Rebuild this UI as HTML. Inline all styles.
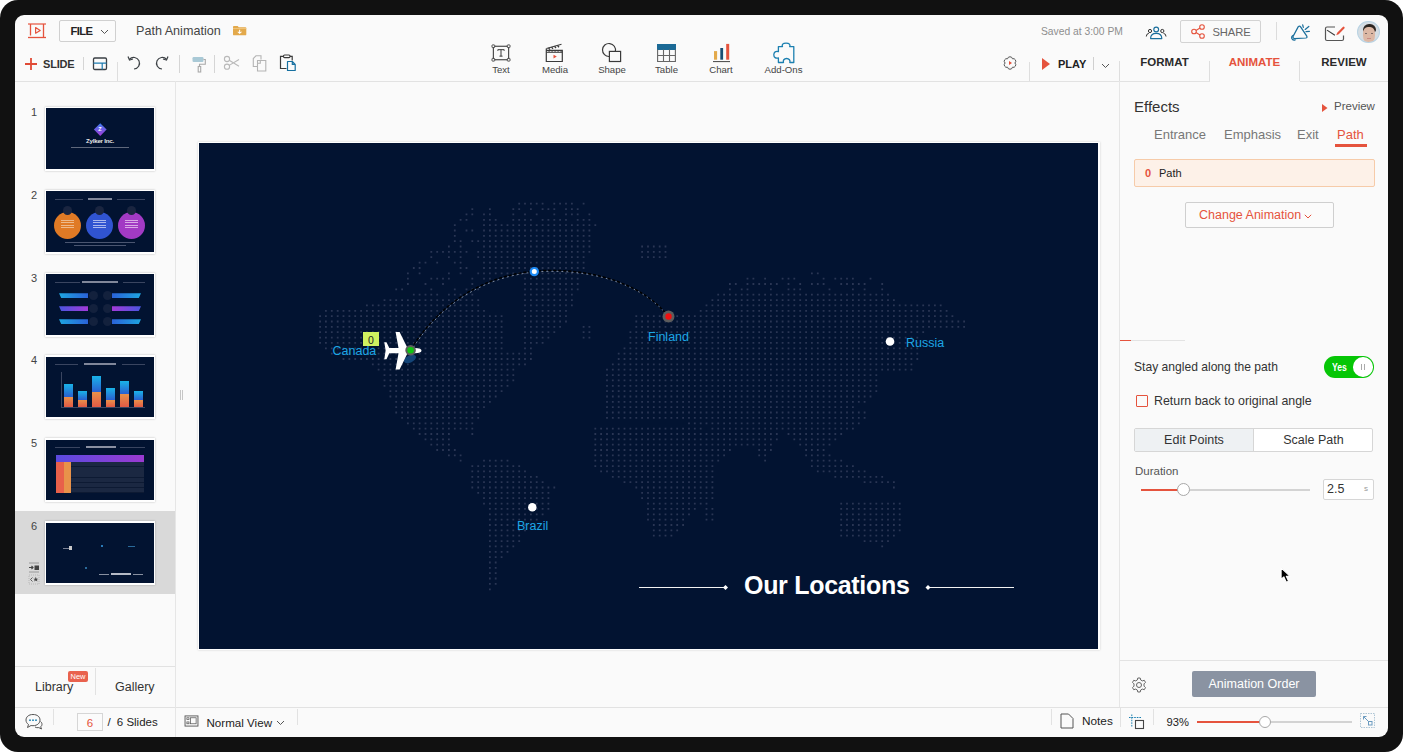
<!DOCTYPE html>
<html><head><meta charset="utf-8">
<style>
*{box-sizing:border-box;margin:0;padding:0}
html,body{width:1403px;height:752px;overflow:hidden;background:#fff;font-family:"Liberation Sans",sans-serif;color:#333}
#frame{position:absolute;left:0;top:0;width:1403px;height:752px;background:#111;border-radius:18px}
#app{position:absolute;left:15px;top:15px;width:1373px;height:722px;background:#fafafa;border-radius:9px;overflow:hidden}
.a{position:absolute}
.t{position:absolute;white-space:nowrap;line-height:1}
.vl{position:absolute;width:1px;background:#dcdcdc}
.hl{position:absolute;height:1px;background:#e2e2e2}
svg{position:absolute;overflow:visible}
</style></head><body>
<div id="frame"></div>
<div id="app"></div>
<!-- all children positioned in page coords -->
<div id="ui" class="a" style="left:0;top:0;width:1403px;height:752px">


<!-- ===== HEADER ROW 1 ===== -->
<svg style="left:27px;top:23px" width="20" height="16" viewBox="0 0 20 16">
 <g stroke="#e5533d" stroke-width="1.3" fill="none">
 <line x1="1" y1="1" x2="19" y2="1" stroke-width="1.6" opacity=".75"/>
 <line x1="1" y1="14.5" x2="19" y2="14.5"/>
 <line x1="3.5" y1="1" x2="3.5" y2="12.5"/>
 <line x1="16.5" y1="1" x2="16.5" y2="14"/>
 <path d="M8.6 4.6 L13.2 7.4 L8.6 10.2 Z" stroke-linejoin="round" stroke-width="1.2"/>
 </g></svg>
<div class="a" style="left:59px;top:20px;width:57px;height:22px;border:1px solid #d0d0d0;border-radius:2px;background:#fbfbfb"></div>
<div class="t" style="left:70.5px;top:26px;font-size:11.2px;font-weight:bold;color:#222;letter-spacing:-.6px">FILE</div>
<svg style="left:99.5px;top:28.5px" width="9" height="6" viewBox="0 0 9 6"><path d="M1 1 L4.5 4.5 L8 1" stroke="#555" stroke-width="1" fill="none"/></svg>
<div class="t" style="left:136px;top:24.5px;font-size:12.6px;color:#444">Path Animation</div>
<svg style="left:233.3px;top:26.3px" width="13.3" height="9.3" viewBox="0 0 14 11" preserveAspectRatio="none">
 <path d="M0 1 Q0 0 1 0 L5 0 L6 1.5 L13 1.5 Q14 1.5 14 2.5 L14 10 Q14 11 13 11 L1 11 Q0 11 0 10 Z" fill="#e3a94b"/>
 <path d="M0 3 L14 3" stroke="#f6d08e" stroke-width=".8"/>
 <path d="M7 4.5 L7 8.5 M5 6.8 L7 8.8 L9 6.8" stroke="#fff" stroke-width="1.1" fill="none"/>
</svg>

<!-- ===== HEADER ROW 2 LEFT ===== -->
<svg style="left:24px;top:57px" width="14" height="14" viewBox="0 0 14 14"><path d="M7 1 V13 M1 7 H13" stroke="#e04b36" stroke-width="1.8"/></svg>
<div class="t" style="left:43px;top:59px;font-size:11px;font-weight:bold;color:#333;letter-spacing:-0.2px">SLIDE</div>
<div class="vl" style="left:83px;top:57px;height:13px;background:#d5d5d5"></div>
<svg style="left:92px;top:57px" width="16" height="14" viewBox="0 0 16 14">
 <rect x="1.5" y="1" width="13" height="11.5" rx="1.3" stroke="#3a3f44" stroke-width="1.3" fill="none"/>
 <path d="M1.5 6.2 H14.5 M10.2 6.2 V12.5" stroke="#1d7bb0" stroke-width="1.2"/>
</svg>
<div class="vl" style="left:117px;top:62px;height:19px;background:#dedede"></div>
<svg style="left:125px;top:55px" width="18" height="16" viewBox="0 0 18 16">
 <path d="M4.5 4.2 A5.8 5.8 0 1 1 9 14" stroke="#3d4246" stroke-width="1.2" fill="none"/>
 <path d="M3 1.5 L4.5 5 L8 4" stroke="#3d4246" stroke-width="1.2" fill="none"/>
</svg>
<svg style="left:153px;top:55px" width="18" height="16" viewBox="0 0 18 16">
 <path d="M13.5 4.2 A5.8 5.8 0 1 0 9 14" stroke="#3d4246" stroke-width="1.2" fill="none"/>
 <path d="M15 1.5 L13.5 5 L10 4" stroke="#3d4246" stroke-width="1.2" fill="none"/>
</svg>
<div class="vl" style="left:179px;top:55px;height:18px;background:#d5d5d5"></div>
<svg style="left:191px;top:56px" width="16" height="17" viewBox="0 0 16 17">
 <rect x="1.5" y="1" width="11" height="5" rx="1.2" fill="#a9c9d6"/>
 <path d="M12.5 3.5 H14.3 V8.3 H8.5 V10.5" stroke="#a9a9a9" stroke-width="1.1" fill="none"/>
 <rect x="7.2" y="10.5" width="2.5" height="5.5" stroke="#a9a9a9" stroke-width="1.1" fill="none"/>
</svg>
<div class="vl" style="left:214px;top:55px;height:18px;background:#d5d5d5"></div>
<svg style="left:223px;top:55px" width="17" height="16" viewBox="0 0 17 16">
 <g stroke="#b9b9b9" stroke-width="1.1" fill="none">
 <circle cx="4" cy="4" r="2.6"/><circle cx="4" cy="11.7" r="2.6"/>
 <path d="M6.2 5.3 L16 11.2 M6.2 10.4 L16 4.5"/></g>
</svg>
<svg style="left:252px;top:55px" width="17" height="17" viewBox="0 0 17 17">
 <g stroke="#b4b4b4" stroke-width="1.1" fill="none">
 <path d="M9 4.5 V0.8 H4 L1.3 3.5 V11.5 H5"/>
 <path d="M5.5 5.5 H13.8 V16 H5.5 V8.3 Z M5.5 8.3 H8.3 V5.5"/></g>
</svg>
<svg style="left:279px;top:54px" width="18" height="18" viewBox="0 0 18 18">
 <path d="M4.5 2.3 H1.5 V14.5 H7.5 M11 2.3 H13.2 V6.5" stroke="#3a3a3a" stroke-width="1.2" fill="none"/>
 <rect x="4.5" y="1" width="6.5" height="2.6" rx="1" stroke="#3a3a3a" stroke-width="1.1" fill="none"/>
 <path d="M8.5 7.5 H13.3 L16.2 10.4 V16.5 H8.5 Z M13.3 7.5 V10.4 H16.2" stroke="#1670a0" stroke-width="1.2" fill="none" stroke-linejoin="round"/>
</svg>

<!-- ===== CENTER TOOLBAR ===== -->
<svg style="left:490.5px;top:43.5px" width="20" height="18" viewBox="0 0 22 20">
 <rect x="2.5" y="2.5" width="17" height="15" stroke="#3a3a3a" stroke-width="1.2" fill="none"/>
 <g fill="#fafafa" stroke="#3a3a3a" stroke-width="1"><rect x="1" y="1" width="3" height="3" rx=".6"/><rect x="18" y="1" width="3" height="3" rx=".6"/><rect x="1" y="16" width="3" height="3" rx=".6"/><rect x="18" y="16" width="3" height="3" rx=".6"/></g>
 <path d="M7.5 6.3 H14.5 M7.5 6.3 V7.6 M14.5 6.3 V7.6 M11 6.3 V13.5 M9.3 13.5 H12.7" stroke="#3a3a3a" stroke-width="1.1" fill="none"/>
</svg>
<div class="t" style="left:480px;top:64.8px;font-size:9.6px;color:#444;width:42px;text-align:center">Text</div>
<svg style="left:545px;top:43px" width="20" height="20" viewBox="0 0 20 20">
 <path d="M1.3 7.3 H17.3 V18.5 H1.3 Z M1.3 7.3 V5.5" stroke="#3a3a3a" stroke-width="1.2" fill="none"/>
 <path d="M1.5 5.5 L16.5 1.3" stroke="#3a3a3a" stroke-width="1.1"/>
 <path d="M3.5 4.9 L5 6.6 M6.5 4.1 L8 5.8 M9.5 3.3 L11 5 M12.5 2.5 L14 4.2" stroke="#3a3a3a" stroke-width="1.3"/>
 <path d="M3 7.3 L4.5 9 M6 7.3 L7.5 9 M9 7.3 L10.5 9 M12 7.3 L13.5 9 M15 7.3 L16.5 9" stroke="#3a3a3a" stroke-width=".9"/>
 <path d="M1.3 9.3 H17.3" stroke="#3a3a3a" stroke-width="1"/>
 <path d="M8.5 11.8 L11.8 13.6 L8.5 15.4 Z" fill="#e5533d"/>
</svg>
<div class="t" style="left:535px;top:64.8px;font-size:9.6px;color:#444;width:40px;text-align:center">Media</div>
<svg style="left:600px;top:42px" width="22" height="21" viewBox="0 0 22 21">
 <path d="M15.35 9.4 A6.5 6.5 0 1 0 9.4 14.5" stroke="#3a3a3a" stroke-width="1.2" fill="none"/>
 <rect x="9.4" y="9.4" width="11.2" height="10.1" stroke="#3a3a3a" stroke-width="1.2" fill="none"/>
</svg>
<div class="t" style="left:592px;top:64.8px;font-size:9.6px;color:#444;width:40px;text-align:center">Shape</div>
<svg style="left:656px;top:43px" width="21" height="20" viewBox="0 0 21 20">
 <rect x="1" y="1" width="19" height="6" fill="#1b6a96"/>
 <path d="M1.6 6.5 V18.5 H19.4 V6.5 M1.6 12.5 H19.4 M7.5 6.5 V18.5 M13.5 6.5 V18.5" stroke="#666" stroke-width="1.1" fill="none"/>
</svg>
<div class="t" style="left:646.5px;top:64.8px;font-size:9.6px;color:#444;width:40px;text-align:center">Table</div>
<svg style="left:710px;top:42px" width="22" height="21" viewBox="0 0 22 21">
 <rect x="4" y="9.1" width="3.1" height="8.6" fill="#e3a94b"/>
 <rect x="10.3" y="6" width="2.8" height="11.7" fill="#1b4e73"/>
 <rect x="16.2" y="1.9" width="3" height="15.8" fill="#e5533d"/>
 <path d="M3 19.6 H20" stroke="#444" stroke-width="1"/>
</svg>
<div class="t" style="left:701px;top:64.8px;font-size:9.6px;color:#444;width:40px;text-align:center">Chart</div>
<svg style="left:772px;top:42px" width="23" height="22" viewBox="0 0 23 22">
 <path d="M6.4 4.6 H10.5 C9.5 2.8 10.8 1.1 14.1 1.1 C17.4 1.1 18.6 2.8 17.7 4.6 H21.8 V20.5 H17.8 C18.5 18.5 17.2 16.5 14.6 16.5 C12 16.5 10.8 18.5 11.5 20.5 H6.4 V15.9 C3.8 16.7 1.8 15.5 1.8 12.8 C1.8 10 3.8 8.9 6.4 9.7 Z" stroke="#1b7fb0" stroke-width="1.3" fill="none" stroke-linejoin="round"/>
</svg>
<div class="t" style="left:758.5px;top:64.8px;font-size:9.6px;color:#444;width:50px;text-align:center">Add-Ons</div>

<!-- ===== HEADER RIGHT ===== -->
<div class="t" style="left:1041px;top:26.5px;font-size:10.3px;color:#8e8e8e">Saved at 3:00 PM</div>
<svg style="left:1145px;top:25px" width="22" height="15" viewBox="0 0 22 15">
 <g stroke="#1b6f9c" stroke-width="1.15" fill="none">
 <circle cx="11.2" cy="4.5" r="2.4"/><path d="M5.6 13.6 Q5.6 8.4 11.2 8.4 Q16.8 8.4 16.8 13.6 Z" stroke-linejoin="round"/></g>
 <g stroke="#333" stroke-width="1" fill="none">
 <circle cx="5" cy="6" r="1.6"/><path d="M1.3 11.5 Q1.3 8.7 3.8 8.4"/>
 <circle cx="17.3" cy="6" r="1.6"/><path d="M21 11.5 Q21 8.7 18.5 8.4"/></g>
</svg>
<div class="a" style="left:1180px;top:20px;width:81px;height:23px;border:1px solid #d3d3d3;border-radius:2px"></div>
<svg style="left:1191px;top:24px" width="14" height="15" viewBox="0 0 14 15">
 <g stroke="#e5533d" stroke-width="1.1" fill="none"><circle cx="3" cy="7.5" r="2.3"/><circle cx="11" cy="3" r="2.3"/><circle cx="11" cy="12" r="2.3"/><path d="M5 6.4 L9 4.1 M5 8.6 L9 10.9"/></g>
</svg>
<div class="t" style="left:1212.5px;top:26.5px;font-size:11.2px;color:#666;letter-spacing:-0.1px">SHARE</div>
<div class="vl" style="left:1276px;top:22px;height:18px;background:#dcdcdc"></div>
<svg style="left:1290px;top:23px" width="21" height="19" viewBox="0 0 21 19">
 <g stroke="#1b6f9c" stroke-width="1.25" fill="none" stroke-linecap="round" stroke-linejoin="round">
 <path d="M8.3 3.6 Q9.6 2.4 10.6 3.8 L16.8 13.2 Q17.5 14.8 15.8 15 L4.5 15.6 Q2.6 15.4 3 13.5 Z"/>
 <path d="M3.3 12.3 Q1.2 13.2 1.8 15.5 Q2.8 17.6 5.2 16.8"/>
 <path d="M12.7 1.8 L13.3 4.3 M15.2 6.4 L18.8 3.5 M16 8.6 L19.4 8.3"/></g>
</svg>
<svg style="left:1323px;top:23.8px" width="23" height="18" viewBox="0 0 23 18">
 <path d="M12 3 H4 Q2.5 3 2.5 4.5 V15 Q2.5 16.5 4 16.5 H19 Q20.5 16.5 20.5 15 V11.5" stroke="#555" stroke-width="1.2" fill="none"/>
 <path d="M4 6.1 L11.9 11.2" stroke="#3a3a3a" stroke-width="1.1"/>
 <path d="M13.2 11.2 L14.2 8.7 L19.8 2.9 Q20.6 2.2 21.4 2.9 Q22 3.7 21.3 4.5 L15.7 10.3 Z" fill="#e5533d"/>
</svg>
<div class="a" style="left:1357px;top:20.5px;width:23px;height:22.5px;border-radius:50%;background:#d5dde3;border:1px solid #b9d3e3;overflow:hidden">
 <div class="a" style="left:4.5px;top:2.5px;width:13px;height:8px;border-radius:6px 6px 2px 2px;background:#2c2622"></div>
 <div class="a" style="left:5px;top:5px;width:12px;height:16px;border-radius:40% 40% 45% 45%;background:#dcb8a5"></div>
 <div class="a" style="left:7px;top:11px;width:2px;height:1px;background:#7a6a66"></div>
 <div class="a" style="left:12.5px;top:11px;width:2px;height:1px;background:#7a6a66"></div>
 <div class="a" style="left:9px;top:16.5px;width:4px;height:1px;background:#c88c84"></div>
</div>

<!-- ===== HEADER ROW 2 RIGHT ===== -->
<svg style="left:1002px;top:55px" width="16" height="16" viewBox="0 0 16 16">
 <path d="M5.55 3.76 A2.5 2.5 0 0 1 10.45 3.76 A2.5 2.5 0 0 1 12.90 8.00 A2.5 2.5 0 0 1 10.45 12.24 A2.5 2.5 0 0 1 5.55 12.24 A2.5 2.5 0 0 1 3.10 8.00 A2.5 2.5 0 0 1 5.55 3.76 Z" stroke="#555" stroke-width="1" fill="none" stroke-linejoin="round"/>
 <path d="M7 6 L10 8 L7 10 Z" fill="#e5533d"/>
</svg>
<div class="vl" style="left:1029px;top:62px;height:19px;background:#dedede"></div>
<svg style="left:1042px;top:58px" width="8" height="12" viewBox="0 0 8 12"><path d="M0 0 L8 6 L0 12 Z" fill="#e5533d"/></svg>
<div class="t" style="left:1058px;top:59px;font-size:11px;font-weight:bold;color:#222">PLAY</div>
<div class="vl" style="left:1093px;top:57px;height:13px;background:#d0d0d0"></div>
<svg style="left:1101px;top:63px" width="9" height="6" viewBox="0 0 9 6"><path d="M1 1 L4.5 4.5 L8 1" stroke="#555" stroke-width="1" fill="none"/></svg>
<div class="vl" style="left:1119px;top:61px;height:20px;background:#dedede"></div>
<div class="vl" style="left:1209px;top:61px;height:20px;background:#dedede"></div>
<div class="vl" style="left:1299px;top:61px;height:20px;background:#dedede"></div>
<div class="t" style="left:1120px;top:57px;width:89px;text-align:center;font-size:11.5px;font-weight:bold;color:#2a2a2a">FORMAT</div>
<div class="t" style="left:1210px;top:57px;width:89px;text-align:center;font-size:11.5px;font-weight:bold;color:#e5533d">ANIMATE</div>
<div class="t" style="left:1300px;top:57px;width:88px;text-align:center;font-size:11.5px;font-weight:bold;color:#2a2a2a">REVIEW</div>


<!-- ===== LEFT PANEL ===== -->
<div class="a" style="left:15px;top:510.5px;width:160px;height:83.5px;background:#d9d9d9"></div>
<div class="t" style="left:31px;top:106.5px;font-size:11px;color:#444">1</div>
<div class="t" style="left:31px;top:189.5px;font-size:11px;color:#444">2</div>
<div class="t" style="left:31px;top:272.5px;font-size:11px;color:#444">3</div>
<div class="t" style="left:31px;top:354.5px;font-size:11px;color:#444">4</div>
<div class="t" style="left:31px;top:437.5px;font-size:11px;color:#444">5</div>
<div class="t" style="left:31px;top:520.5px;font-size:11px;color:#444">6</div>
<div class="a" style="left:44.5px;top:106.5px;width:110.5px;height:64px;background:#fff;box-shadow:0 0 2px rgba(0,0,0,.25)">
<div class="a" style="left:1.5px;top:1.8px;width:107.5px;height:60.7px;background:#021331;overflow:hidden"><div class="a" style="left:49.9px;top:17px;width:8.5px;height:8.5px;transform:rotate(45deg);background:linear-gradient(135deg,#3d7df0,#a23ad8)"></div>
<div class="t" style="left:52.3px;top:18.3px;font-size:5.5px;font-weight:bold;color:#fff">Z</div>
<div class="t" style="left:40px;top:29.5px;font-size:6.2px;font-weight:bold;color:#e8e8e8;letter-spacing:-.25px">Zylker Inc.</div>
<div class="a" style="left:25px;top:38.5px;width:58px;height:1px;background:#5f687c"></div></div></div>
<div class="a" style="left:44.5px;top:189.5px;width:110.5px;height:64px;background:#fff;box-shadow:0 0 2px rgba(0,0,0,.25)">
<div class="a" style="left:1.5px;top:1.8px;width:107.5px;height:60.7px;background:#021331;overflow:hidden"><div class="a" style="left:9px;top:8px;width:28px;height:.8px;background:#3a4560"></div>
<div class="a" style="left:71px;top:8px;width:28px;height:.8px;background:#3a4560"></div>
<div class="a" style="left:42px;top:7px;width:24px;height:2px;background:#80879a"></div>
<div class="a" style="left:8px;top:21px;width:27px;height:27px;border-radius:50%;background:#e07a25"></div>
<div class="a" style="left:40px;top:21px;width:27px;height:27px;border-radius:50%;background:#3054d1"></div>
<div class="a" style="left:72px;top:21px;width:27px;height:27px;border-radius:50%;background:#a23ac4"></div>
<div class="a" style="left:17px;top:15px;width:9px;height:9px;border-radius:50%;background:#1a2540"></div>
<div class="a" style="left:49px;top:15px;width:9px;height:9px;border-radius:50%;background:#1a2540"></div>
<div class="a" style="left:81px;top:15px;width:9px;height:9px;border-radius:50%;background:#1a2540"></div>
<div class="a" style="left:15px;top:29px;width:13px;height:10px;background:repeating-linear-gradient(#f1c9a3 0 1px,transparent 1px 2.5px);opacity:.8"></div>
<div class="a" style="left:47px;top:29px;width:13px;height:10px;background:repeating-linear-gradient(#c9d2f5 0 1px,transparent 1px 2.5px);opacity:.8"></div>
<div class="a" style="left:79px;top:29px;width:13px;height:8px;background:repeating-linear-gradient(#e8c5f0 0 1px,transparent 1px 2.5px);opacity:.8"></div>
<div class="a" style="left:19px;top:51px;width:70px;height:1px;background:#4a5570"></div>
<div class="a" style="left:28px;top:53.5px;width:52px;height:1px;background:#4a5570"></div></div></div>
<div class="a" style="left:44.5px;top:272.5px;width:110.5px;height:64px;background:#fff;box-shadow:0 0 2px rgba(0,0,0,.25)">
<div class="a" style="left:1.5px;top:1.8px;width:107.5px;height:60.7px;background:#021331;overflow:hidden"><div class="a" style="left:9px;top:8px;width:25px;height:.8px;background:#3a4560"></div>
<div class="a" style="left:77px;top:8px;width:22px;height:.8px;background:#3a4560"></div>
<div class="a" style="left:36px;top:7px;width:36px;height:2px;background:#80879a"></div>
<div class="a" style="left:13px;top:19px;width:29px;height:5px;background:linear-gradient(90deg,#1ea5e0,#2a62d8);clip-path:polygon(0 0,100% 0,100% 100%,8% 100%)"></div><div class="a" style="left:66px;top:19px;width:29px;height:5px;background:linear-gradient(90deg,#2a62d8,#1ea5e0);clip-path:polygon(0 0,100% 0,92% 100%,0 100%)"></div><div class="a" style="left:43px;top:17px;width:9px;height:9px;border-radius:50%;background:#13213d"></div><div class="a" style="left:57px;top:17px;width:9px;height:9px;border-radius:50%;background:#13213d"></div><div class="a" style="left:13px;top:32px;width:29px;height:5px;background:linear-gradient(90deg,#4a55e0,#a23ad8);clip-path:polygon(0 0,100% 0,100% 100%,8% 100%)"></div><div class="a" style="left:66px;top:32px;width:29px;height:5px;background:linear-gradient(90deg,#a23ad8,#4a55e0);clip-path:polygon(0 0,100% 0,92% 100%,0 100%)"></div><div class="a" style="left:43px;top:30px;width:9px;height:9px;border-radius:50%;background:#13213d"></div><div class="a" style="left:57px;top:30px;width:9px;height:9px;border-radius:50%;background:#13213d"></div><div class="a" style="left:13px;top:45px;width:29px;height:5px;background:linear-gradient(90deg,#1ea5e0,#2a62d8);clip-path:polygon(0 0,100% 0,100% 100%,8% 100%)"></div><div class="a" style="left:66px;top:45px;width:29px;height:5px;background:linear-gradient(90deg,#2a62d8,#1ea5e0);clip-path:polygon(0 0,100% 0,92% 100%,0 100%)"></div><div class="a" style="left:43px;top:43px;width:9px;height:9px;border-radius:50%;background:#13213d"></div><div class="a" style="left:57px;top:43px;width:9px;height:9px;border-radius:50%;background:#13213d"></div></div></div>
<div class="a" style="left:44.5px;top:355px;width:110.5px;height:64px;background:#fff;box-shadow:0 0 2px rgba(0,0,0,.25)">
<div class="a" style="left:1.5px;top:1.8px;width:107.5px;height:60.7px;background:#021331;overflow:hidden"><div class="a" style="left:9px;top:7px;width:23px;height:.8px;background:#3a4560"></div>
<div class="a" style="left:76px;top:7px;width:23px;height:.8px;background:#3a4560"></div>
<div class="a" style="left:38px;top:6px;width:32px;height:2px;background:#80879a"></div>
<div class="a" style="left:15px;top:15px;width:.8px;height:35px;background:#3a4560"></div>
<div class="a" style="left:15px;top:50px;width:84px;height:.8px;background:#3a4560"></div>
<div class="a" style="left:18px;top:27px;width:9px;height:13px;background:linear-gradient(#19b3e8,#2a5fd0)"></div><div class="a" style="left:18px;top:40px;width:9px;height:10px;background:linear-gradient(#e8914a,#e25a45)"></div><div class="a" style="left:32px;top:34px;width:9px;height:9px;background:linear-gradient(#19b3e8,#2a5fd0)"></div><div class="a" style="left:32px;top:43px;width:9px;height:7px;background:linear-gradient(#e8914a,#e25a45)"></div><div class="a" style="left:46px;top:19px;width:9px;height:16px;background:linear-gradient(#19b3e8,#2a5fd0)"></div><div class="a" style="left:46px;top:35px;width:9px;height:15px;background:linear-gradient(#e8914a,#e25a45)"></div><div class="a" style="left:60px;top:31px;width:9px;height:12px;background:linear-gradient(#19b3e8,#2a5fd0)"></div><div class="a" style="left:60px;top:43px;width:9px;height:7px;background:linear-gradient(#e8914a,#e25a45)"></div><div class="a" style="left:74px;top:24px;width:9px;height:13px;background:linear-gradient(#19b3e8,#2a5fd0)"></div><div class="a" style="left:74px;top:37px;width:9px;height:13px;background:linear-gradient(#e8914a,#e25a45)"></div><div class="a" style="left:88px;top:34px;width:9px;height:9px;background:linear-gradient(#19b3e8,#2a5fd0)"></div><div class="a" style="left:88px;top:43px;width:9px;height:7px;background:linear-gradient(#e8914a,#e25a45)"></div></div></div>
<div class="a" style="left:44.5px;top:438px;width:110.5px;height:64px;background:#fff;box-shadow:0 0 2px rgba(0,0,0,.25)">
<div class="a" style="left:1.5px;top:1.8px;width:107.5px;height:60.7px;background:#021331;overflow:hidden"><div class="a" style="left:9px;top:7px;width:25px;height:.8px;background:#3a4560"></div>
<div class="a" style="left:74px;top:7px;width:25px;height:.8px;background:#3a4560"></div>
<div class="a" style="left:40px;top:6px;width:30px;height:2.5px;background:#8a90a2"></div>
<div class="a" style="left:10px;top:15px;width:88px;height:7px;background:linear-gradient(90deg,#5a4be0,#9a3ad0)"></div>
<div class="a" style="left:10px;top:22px;width:15px;height:31px;background:linear-gradient(90deg,#e8604a 50%,#e8924a 50%)"></div>
<div class="a" style="left:25px;top:22px;width:73px;height:31px;background:repeating-linear-gradient(#1b2842 0 4.5px,#0d1a33 4.5px 5.2px)"></div></div></div>
<div class="a" style="left:44.5px;top:521px;width:110.5px;height:64px;background:#fff;box-shadow:0 0 2px rgba(0,0,0,.25)">
<div class="a" style="left:1.5px;top:1.8px;width:107.5px;height:60.7px;background:#021331;overflow:hidden"><div class="a" style="left:17px;top:25px;width:8px;height:.8px;background:#7a8195"></div>
<div class="a" style="left:23px;top:23.5px;width:2.5px;height:4px;background:#c8c8c8"></div>
<div class="a" style="left:54.5px;top:22px;width:2.5px;height:2px;background:#2a7ab8"></div>
<div class="a" style="left:82px;top:23.5px;width:7px;height:1px;background:#2a6a9a"></div>
<div class="a" style="left:38.5px;top:44px;width:2.5px;height:2px;background:#2a6a9a"></div>
<div class="a" style="left:53px;top:51px;width:10px;height:.7px;background:#8890a0"></div>
<div class="a" style="left:87px;top:51px;width:10px;height:.7px;background:#8890a0"></div>
<div class="a" style="left:65px;top:50.3px;width:20px;height:1.6px;background:#b5bac6"></div></div></div>
<svg style="left:28px;top:562px" width="12" height="23" viewBox="0 0 12 23">
 <path d="M1 1 H11 M1 10 H11" stroke="#888" stroke-width=".8"/>
 <path d="M1 5.5 H5 M3.5 4 L5 5.5 L3.5 7" stroke="#444" stroke-width="1.1" fill="none"/>
 <rect x="6.5" y="3.5" width="4.5" height="4.5" fill="#444"/>
 <rect x="1" y="13" width="10" height="9" stroke="#aaa" stroke-width=".7" fill="none" stroke-dasharray="1 1"/>
 <path d="M2.5 17.5 L4.5 15.5 M2.5 17.5 L4.5 19.5" stroke="#555" stroke-width=".9" fill="none"/>
 <path d="M7.8 14.8 L8.5 16.7 L10.3 16.7 L8.9 17.8 L9.4 19.6 L7.8 18.5 L6.2 19.6 L6.7 17.8 L5.3 16.7 L7.1 16.7 Z" fill="#444"/>
</svg>
<div class="a" style="left:180px;top:390px;width:1px;height:10px;background:#c6c6c6"></div>
<div class="a" style="left:182px;top:390px;width:1px;height:10px;background:#c6c6c6"></div>

<div class="hl" style="left:15px;top:666px;width:160px;background:#e2e2e2"></div>
<div class="vl" style="left:95px;top:668px;height:27px;background:#e2e2e2"></div>
<div class="t" style="left:35px;top:681px;font-size:12.5px;color:#333">Library</div>
<div class="a" style="left:68px;top:671px;width:20px;height:11px;border-radius:2px;background:#e9624e"></div>
<div class="t" style="left:68px;top:673px;width:20px;text-align:center;font-size:7.5px;color:#fff">New</div>
<div class="t" style="left:115px;top:681px;font-size:12.5px;color:#333">Gallery</div>


<!-- ===== SLIDE ===== -->
<div class="a" style="left:197.5px;top:141.5px;width:902px;height:508.5px;background:#fff;box-shadow:0 0 2px rgba(0,0,0,.18)"></div>
<div class="a" style="left:199px;top:143px;width:899px;height:505.5px;background:#021331"></div>
<svg style="left:0;top:0" width="1403" height="752" viewBox="0 0 1403 752"><path d="M518.3 202.8h1.8v1.8h-1.8zM524.1 202.8h1.8v1.8h-1.8zM530.0 202.8h1.8v1.8h-1.8zM535.8 202.8h1.8v1.8h-1.8zM541.7 202.8h1.8v1.8h-1.8zM553.4 202.8h1.8v1.8h-1.8zM559.2 202.8h1.8v1.8h-1.8zM565.1 202.8h1.8v1.8h-1.8zM571.0 202.8h1.8v1.8h-1.8zM582.7 202.8h1.8v1.8h-1.8zM471.4 208.2h1.8v1.8h-1.8zM489.0 208.2h1.8v1.8h-1.8zM512.4 208.2h1.8v1.8h-1.8zM518.3 208.2h1.8v1.8h-1.8zM530.0 208.2h1.8v1.8h-1.8zM541.7 208.2h1.8v1.8h-1.8zM547.5 208.2h1.8v1.8h-1.8zM553.4 208.2h1.8v1.8h-1.8zM565.1 208.2h1.8v1.8h-1.8zM571.0 208.2h1.8v1.8h-1.8zM576.8 208.2h1.8v1.8h-1.8zM465.6 213.5h1.8v1.8h-1.8zM471.4 213.5h1.8v1.8h-1.8zM483.1 213.5h1.8v1.8h-1.8zM489.0 213.5h1.8v1.8h-1.8zM512.4 213.5h1.8v1.8h-1.8zM524.1 213.5h1.8v1.8h-1.8zM535.8 213.5h1.8v1.8h-1.8zM553.4 213.5h1.8v1.8h-1.8zM565.1 213.5h1.8v1.8h-1.8zM571.0 213.5h1.8v1.8h-1.8zM576.8 213.5h1.8v1.8h-1.8zM588.5 213.5h1.8v1.8h-1.8zM459.7 218.9h1.8v1.8h-1.8zM465.6 218.9h1.8v1.8h-1.8zM483.1 218.9h1.8v1.8h-1.8zM489.0 218.9h1.8v1.8h-1.8zM494.8 218.9h1.8v1.8h-1.8zM512.4 218.9h1.8v1.8h-1.8zM518.3 218.9h1.8v1.8h-1.8zM524.1 218.9h1.8v1.8h-1.8zM530.0 218.9h1.8v1.8h-1.8zM541.7 218.9h1.8v1.8h-1.8zM547.5 218.9h1.8v1.8h-1.8zM553.4 218.9h1.8v1.8h-1.8zM559.2 218.9h1.8v1.8h-1.8zM565.1 218.9h1.8v1.8h-1.8zM576.8 218.9h1.8v1.8h-1.8zM582.7 218.9h1.8v1.8h-1.8zM588.5 218.9h1.8v1.8h-1.8zM453.9 224.2h1.8v1.8h-1.8zM483.1 224.2h1.8v1.8h-1.8zM489.0 224.2h1.8v1.8h-1.8zM494.8 224.2h1.8v1.8h-1.8zM500.7 224.2h1.8v1.8h-1.8zM506.6 224.2h1.8v1.8h-1.8zM512.4 224.2h1.8v1.8h-1.8zM518.3 224.2h1.8v1.8h-1.8zM524.1 224.2h1.8v1.8h-1.8zM530.0 224.2h1.8v1.8h-1.8zM535.8 224.2h1.8v1.8h-1.8zM541.7 224.2h1.8v1.8h-1.8zM547.5 224.2h1.8v1.8h-1.8zM553.4 224.2h1.8v1.8h-1.8zM559.2 224.2h1.8v1.8h-1.8zM565.1 224.2h1.8v1.8h-1.8zM571.0 224.2h1.8v1.8h-1.8zM576.8 224.2h1.8v1.8h-1.8zM582.7 224.2h1.8v1.8h-1.8zM588.5 224.2h1.8v1.8h-1.8zM594.4 224.2h1.8v1.8h-1.8zM453.9 229.6h1.8v1.8h-1.8zM465.6 229.6h1.8v1.8h-1.8zM471.4 229.6h1.8v1.8h-1.8zM483.1 229.6h1.8v1.8h-1.8zM489.0 229.6h1.8v1.8h-1.8zM494.8 229.6h1.8v1.8h-1.8zM500.7 229.6h1.8v1.8h-1.8zM506.6 229.6h1.8v1.8h-1.8zM512.4 229.6h1.8v1.8h-1.8zM518.3 229.6h1.8v1.8h-1.8zM524.1 229.6h1.8v1.8h-1.8zM530.0 229.6h1.8v1.8h-1.8zM535.8 229.6h1.8v1.8h-1.8zM541.7 229.6h1.8v1.8h-1.8zM547.5 229.6h1.8v1.8h-1.8zM553.4 229.6h1.8v1.8h-1.8zM559.2 229.6h1.8v1.8h-1.8zM565.1 229.6h1.8v1.8h-1.8zM571.0 229.6h1.8v1.8h-1.8zM576.8 229.6h1.8v1.8h-1.8zM582.7 229.6h1.8v1.8h-1.8zM588.5 229.6h1.8v1.8h-1.8zM453.9 234.9h1.8v1.8h-1.8zM483.1 234.9h1.8v1.8h-1.8zM489.0 234.9h1.8v1.8h-1.8zM494.8 234.9h1.8v1.8h-1.8zM500.7 234.9h1.8v1.8h-1.8zM506.6 234.9h1.8v1.8h-1.8zM512.4 234.9h1.8v1.8h-1.8zM518.3 234.9h1.8v1.8h-1.8zM524.1 234.9h1.8v1.8h-1.8zM530.0 234.9h1.8v1.8h-1.8zM535.8 234.9h1.8v1.8h-1.8zM541.7 234.9h1.8v1.8h-1.8zM547.5 234.9h1.8v1.8h-1.8zM553.4 234.9h1.8v1.8h-1.8zM559.2 234.9h1.8v1.8h-1.8zM565.1 234.9h1.8v1.8h-1.8zM571.0 234.9h1.8v1.8h-1.8zM576.8 234.9h1.8v1.8h-1.8zM582.7 234.9h1.8v1.8h-1.8zM588.5 234.9h1.8v1.8h-1.8zM453.9 240.3h1.8v1.8h-1.8zM459.7 240.3h1.8v1.8h-1.8zM471.4 240.3h1.8v1.8h-1.8zM477.3 240.3h1.8v1.8h-1.8zM483.1 240.3h1.8v1.8h-1.8zM489.0 240.3h1.8v1.8h-1.8zM494.8 240.3h1.8v1.8h-1.8zM500.7 240.3h1.8v1.8h-1.8zM506.6 240.3h1.8v1.8h-1.8zM512.4 240.3h1.8v1.8h-1.8zM518.3 240.3h1.8v1.8h-1.8zM524.1 240.3h1.8v1.8h-1.8zM530.0 240.3h1.8v1.8h-1.8zM535.8 240.3h1.8v1.8h-1.8zM541.7 240.3h1.8v1.8h-1.8zM547.5 240.3h1.8v1.8h-1.8zM553.4 240.3h1.8v1.8h-1.8zM559.2 240.3h1.8v1.8h-1.8zM565.1 240.3h1.8v1.8h-1.8zM571.0 240.3h1.8v1.8h-1.8zM576.8 240.3h1.8v1.8h-1.8zM582.7 240.3h1.8v1.8h-1.8zM588.5 240.3h1.8v1.8h-1.8zM448.0 245.6h1.8v1.8h-1.8zM459.7 245.6h1.8v1.8h-1.8zM483.1 245.6h1.8v1.8h-1.8zM489.0 245.6h1.8v1.8h-1.8zM494.8 245.6h1.8v1.8h-1.8zM500.7 245.6h1.8v1.8h-1.8zM506.6 245.6h1.8v1.8h-1.8zM512.4 245.6h1.8v1.8h-1.8zM518.3 245.6h1.8v1.8h-1.8zM524.1 245.6h1.8v1.8h-1.8zM530.0 245.6h1.8v1.8h-1.8zM535.8 245.6h1.8v1.8h-1.8zM541.7 245.6h1.8v1.8h-1.8zM547.5 245.6h1.8v1.8h-1.8zM553.4 245.6h1.8v1.8h-1.8zM559.2 245.6h1.8v1.8h-1.8zM565.1 245.6h1.8v1.8h-1.8zM571.0 245.6h1.8v1.8h-1.8zM576.8 245.6h1.8v1.8h-1.8zM582.7 245.6h1.8v1.8h-1.8zM588.5 245.6h1.8v1.8h-1.8zM641.2 245.6h1.8v1.8h-1.8zM647.1 245.6h1.8v1.8h-1.8zM652.9 245.6h1.8v1.8h-1.8zM658.8 245.6h1.8v1.8h-1.8zM664.6 245.6h1.8v1.8h-1.8zM430.4 251.0h1.8v1.8h-1.8zM436.3 251.0h1.8v1.8h-1.8zM442.1 251.0h1.8v1.8h-1.8zM448.0 251.0h1.8v1.8h-1.8zM453.9 251.0h1.8v1.8h-1.8zM459.7 251.0h1.8v1.8h-1.8zM465.6 251.0h1.8v1.8h-1.8zM477.3 251.0h1.8v1.8h-1.8zM483.1 251.0h1.8v1.8h-1.8zM489.0 251.0h1.8v1.8h-1.8zM494.8 251.0h1.8v1.8h-1.8zM500.7 251.0h1.8v1.8h-1.8zM506.6 251.0h1.8v1.8h-1.8zM512.4 251.0h1.8v1.8h-1.8zM518.3 251.0h1.8v1.8h-1.8zM524.1 251.0h1.8v1.8h-1.8zM530.0 251.0h1.8v1.8h-1.8zM535.8 251.0h1.8v1.8h-1.8zM541.7 251.0h1.8v1.8h-1.8zM547.5 251.0h1.8v1.8h-1.8zM553.4 251.0h1.8v1.8h-1.8zM559.2 251.0h1.8v1.8h-1.8zM565.1 251.0h1.8v1.8h-1.8zM571.0 251.0h1.8v1.8h-1.8zM576.8 251.0h1.8v1.8h-1.8zM582.7 251.0h1.8v1.8h-1.8zM588.5 251.0h1.8v1.8h-1.8zM641.2 251.0h1.8v1.8h-1.8zM647.1 251.0h1.8v1.8h-1.8zM652.9 251.0h1.8v1.8h-1.8zM658.8 251.0h1.8v1.8h-1.8zM664.6 251.0h1.8v1.8h-1.8zM430.4 256.3h1.8v1.8h-1.8zM448.0 256.3h1.8v1.8h-1.8zM459.7 256.3h1.8v1.8h-1.8zM477.3 256.3h1.8v1.8h-1.8zM483.1 256.3h1.8v1.8h-1.8zM489.0 256.3h1.8v1.8h-1.8zM494.8 256.3h1.8v1.8h-1.8zM500.7 256.3h1.8v1.8h-1.8zM506.6 256.3h1.8v1.8h-1.8zM512.4 256.3h1.8v1.8h-1.8zM518.3 256.3h1.8v1.8h-1.8zM524.1 256.3h1.8v1.8h-1.8zM530.0 256.3h1.8v1.8h-1.8zM535.8 256.3h1.8v1.8h-1.8zM541.7 256.3h1.8v1.8h-1.8zM547.5 256.3h1.8v1.8h-1.8zM553.4 256.3h1.8v1.8h-1.8zM559.2 256.3h1.8v1.8h-1.8zM565.1 256.3h1.8v1.8h-1.8zM571.0 256.3h1.8v1.8h-1.8zM576.8 256.3h1.8v1.8h-1.8zM582.7 256.3h1.8v1.8h-1.8zM641.2 256.3h1.8v1.8h-1.8zM647.1 256.3h1.8v1.8h-1.8zM652.9 256.3h1.8v1.8h-1.8zM658.8 256.3h1.8v1.8h-1.8zM664.6 256.3h1.8v1.8h-1.8zM418.7 261.7h1.8v1.8h-1.8zM424.6 261.7h1.8v1.8h-1.8zM436.3 261.7h1.8v1.8h-1.8zM453.9 261.7h1.8v1.8h-1.8zM459.7 261.7h1.8v1.8h-1.8zM483.1 261.7h1.8v1.8h-1.8zM489.0 261.7h1.8v1.8h-1.8zM494.8 261.7h1.8v1.8h-1.8zM500.7 261.7h1.8v1.8h-1.8zM506.6 261.7h1.8v1.8h-1.8zM512.4 261.7h1.8v1.8h-1.8zM518.3 261.7h1.8v1.8h-1.8zM524.1 261.7h1.8v1.8h-1.8zM530.0 261.7h1.8v1.8h-1.8zM535.8 261.7h1.8v1.8h-1.8zM541.7 261.7h1.8v1.8h-1.8zM547.5 261.7h1.8v1.8h-1.8zM553.4 261.7h1.8v1.8h-1.8zM559.2 261.7h1.8v1.8h-1.8zM565.1 261.7h1.8v1.8h-1.8zM571.0 261.7h1.8v1.8h-1.8zM576.8 261.7h1.8v1.8h-1.8zM582.7 261.7h1.8v1.8h-1.8zM412.9 267.1h1.8v1.8h-1.8zM418.7 267.1h1.8v1.8h-1.8zM459.7 267.1h1.8v1.8h-1.8zM465.6 267.1h1.8v1.8h-1.8zM483.1 267.1h1.8v1.8h-1.8zM489.0 267.1h1.8v1.8h-1.8zM494.8 267.1h1.8v1.8h-1.8zM500.7 267.1h1.8v1.8h-1.8zM506.6 267.1h1.8v1.8h-1.8zM512.4 267.1h1.8v1.8h-1.8zM518.3 267.1h1.8v1.8h-1.8zM524.1 267.1h1.8v1.8h-1.8zM530.0 267.1h1.8v1.8h-1.8zM535.8 267.1h1.8v1.8h-1.8zM541.7 267.1h1.8v1.8h-1.8zM547.5 267.1h1.8v1.8h-1.8zM553.4 267.1h1.8v1.8h-1.8zM559.2 267.1h1.8v1.8h-1.8zM565.1 267.1h1.8v1.8h-1.8zM571.0 267.1h1.8v1.8h-1.8zM576.8 267.1h1.8v1.8h-1.8zM582.7 267.1h1.8v1.8h-1.8zM407.0 272.4h1.8v1.8h-1.8zM418.7 272.4h1.8v1.8h-1.8zM448.0 272.4h1.8v1.8h-1.8zM459.7 272.4h1.8v1.8h-1.8zM477.3 272.4h1.8v1.8h-1.8zM483.1 272.4h1.8v1.8h-1.8zM489.0 272.4h1.8v1.8h-1.8zM494.8 272.4h1.8v1.8h-1.8zM500.7 272.4h1.8v1.8h-1.8zM506.6 272.4h1.8v1.8h-1.8zM512.4 272.4h1.8v1.8h-1.8zM518.3 272.4h1.8v1.8h-1.8zM524.1 272.4h1.8v1.8h-1.8zM530.0 272.4h1.8v1.8h-1.8zM535.8 272.4h1.8v1.8h-1.8zM541.7 272.4h1.8v1.8h-1.8zM547.5 272.4h1.8v1.8h-1.8zM553.4 272.4h1.8v1.8h-1.8zM559.2 272.4h1.8v1.8h-1.8zM565.1 272.4h1.8v1.8h-1.8zM571.0 272.4h1.8v1.8h-1.8zM576.8 272.4h1.8v1.8h-1.8zM582.7 272.4h1.8v1.8h-1.8zM811.0 272.4h1.8v1.8h-1.8zM816.9 272.4h1.8v1.8h-1.8zM407.0 277.8h1.8v1.8h-1.8zM430.4 277.8h1.8v1.8h-1.8zM436.3 277.8h1.8v1.8h-1.8zM442.1 277.8h1.8v1.8h-1.8zM448.0 277.8h1.8v1.8h-1.8zM471.4 277.8h1.8v1.8h-1.8zM483.1 277.8h1.8v1.8h-1.8zM489.0 277.8h1.8v1.8h-1.8zM524.1 277.8h1.8v1.8h-1.8zM530.0 277.8h1.8v1.8h-1.8zM535.8 277.8h1.8v1.8h-1.8zM541.7 277.8h1.8v1.8h-1.8zM547.5 277.8h1.8v1.8h-1.8zM553.4 277.8h1.8v1.8h-1.8zM559.2 277.8h1.8v1.8h-1.8zM565.1 277.8h1.8v1.8h-1.8zM571.0 277.8h1.8v1.8h-1.8zM576.8 277.8h1.8v1.8h-1.8zM746.6 277.8h1.8v1.8h-1.8zM752.5 277.8h1.8v1.8h-1.8zM764.2 277.8h1.8v1.8h-1.8zM781.7 277.8h1.8v1.8h-1.8zM787.6 277.8h1.8v1.8h-1.8zM793.4 277.8h1.8v1.8h-1.8zM822.7 277.8h1.8v1.8h-1.8zM834.4 277.8h1.8v1.8h-1.8zM840.3 277.8h1.8v1.8h-1.8zM846.1 277.8h1.8v1.8h-1.8zM852.0 277.8h1.8v1.8h-1.8zM869.6 277.8h1.8v1.8h-1.8zM407.0 283.1h1.8v1.8h-1.8zM424.6 283.1h1.8v1.8h-1.8zM442.1 283.1h1.8v1.8h-1.8zM471.4 283.1h1.8v1.8h-1.8zM524.1 283.1h1.8v1.8h-1.8zM530.0 283.1h1.8v1.8h-1.8zM535.8 283.1h1.8v1.8h-1.8zM541.7 283.1h1.8v1.8h-1.8zM547.5 283.1h1.8v1.8h-1.8zM553.4 283.1h1.8v1.8h-1.8zM559.2 283.1h1.8v1.8h-1.8zM565.1 283.1h1.8v1.8h-1.8zM571.0 283.1h1.8v1.8h-1.8zM576.8 283.1h1.8v1.8h-1.8zM729.0 283.1h1.8v1.8h-1.8zM734.9 283.1h1.8v1.8h-1.8zM746.6 283.1h1.8v1.8h-1.8zM752.5 283.1h1.8v1.8h-1.8zM758.3 283.1h1.8v1.8h-1.8zM764.2 283.1h1.8v1.8h-1.8zM770.0 283.1h1.8v1.8h-1.8zM775.9 283.1h1.8v1.8h-1.8zM787.6 283.1h1.8v1.8h-1.8zM799.3 283.1h1.8v1.8h-1.8zM811.0 283.1h1.8v1.8h-1.8zM816.9 283.1h1.8v1.8h-1.8zM822.7 283.1h1.8v1.8h-1.8zM840.3 283.1h1.8v1.8h-1.8zM846.1 283.1h1.8v1.8h-1.8zM852.0 283.1h1.8v1.8h-1.8zM857.9 283.1h1.8v1.8h-1.8zM863.7 283.1h1.8v1.8h-1.8zM881.3 283.1h1.8v1.8h-1.8zM395.3 288.5h1.8v1.8h-1.8zM401.2 288.5h1.8v1.8h-1.8zM430.4 288.5h1.8v1.8h-1.8zM453.9 288.5h1.8v1.8h-1.8zM465.6 288.5h1.8v1.8h-1.8zM471.4 288.5h1.8v1.8h-1.8zM477.3 288.5h1.8v1.8h-1.8zM524.1 288.5h1.8v1.8h-1.8zM530.0 288.5h1.8v1.8h-1.8zM535.8 288.5h1.8v1.8h-1.8zM541.7 288.5h1.8v1.8h-1.8zM547.5 288.5h1.8v1.8h-1.8zM553.4 288.5h1.8v1.8h-1.8zM559.2 288.5h1.8v1.8h-1.8zM565.1 288.5h1.8v1.8h-1.8zM571.0 288.5h1.8v1.8h-1.8zM576.8 288.5h1.8v1.8h-1.8zM729.0 288.5h1.8v1.8h-1.8zM740.8 288.5h1.8v1.8h-1.8zM746.6 288.5h1.8v1.8h-1.8zM770.0 288.5h1.8v1.8h-1.8zM787.6 288.5h1.8v1.8h-1.8zM793.4 288.5h1.8v1.8h-1.8zM799.3 288.5h1.8v1.8h-1.8zM828.6 288.5h1.8v1.8h-1.8zM852.0 288.5h1.8v1.8h-1.8zM863.7 288.5h1.8v1.8h-1.8zM881.3 288.5h1.8v1.8h-1.8zM412.9 293.8h1.8v1.8h-1.8zM418.7 293.8h1.8v1.8h-1.8zM424.6 293.8h1.8v1.8h-1.8zM430.4 293.8h1.8v1.8h-1.8zM436.3 293.8h1.8v1.8h-1.8zM448.0 293.8h1.8v1.8h-1.8zM453.9 293.8h1.8v1.8h-1.8zM459.7 293.8h1.8v1.8h-1.8zM465.6 293.8h1.8v1.8h-1.8zM471.4 293.8h1.8v1.8h-1.8zM524.1 293.8h1.8v1.8h-1.8zM530.0 293.8h1.8v1.8h-1.8zM535.8 293.8h1.8v1.8h-1.8zM541.7 293.8h1.8v1.8h-1.8zM547.5 293.8h1.8v1.8h-1.8zM553.4 293.8h1.8v1.8h-1.8zM559.2 293.8h1.8v1.8h-1.8zM565.1 293.8h1.8v1.8h-1.8zM571.0 293.8h1.8v1.8h-1.8zM717.3 293.8h1.8v1.8h-1.8zM723.2 293.8h1.8v1.8h-1.8zM729.0 293.8h1.8v1.8h-1.8zM734.9 293.8h1.8v1.8h-1.8zM740.8 293.8h1.8v1.8h-1.8zM746.6 293.8h1.8v1.8h-1.8zM752.5 293.8h1.8v1.8h-1.8zM758.3 293.8h1.8v1.8h-1.8zM764.2 293.8h1.8v1.8h-1.8zM770.0 293.8h1.8v1.8h-1.8zM775.9 293.8h1.8v1.8h-1.8zM781.7 293.8h1.8v1.8h-1.8zM787.6 293.8h1.8v1.8h-1.8zM793.4 293.8h1.8v1.8h-1.8zM799.3 293.8h1.8v1.8h-1.8zM805.2 293.8h1.8v1.8h-1.8zM811.0 293.8h1.8v1.8h-1.8zM816.9 293.8h1.8v1.8h-1.8zM822.7 293.8h1.8v1.8h-1.8zM828.6 293.8h1.8v1.8h-1.8zM834.4 293.8h1.8v1.8h-1.8zM840.3 293.8h1.8v1.8h-1.8zM846.1 293.8h1.8v1.8h-1.8zM852.0 293.8h1.8v1.8h-1.8zM857.9 293.8h1.8v1.8h-1.8zM863.7 293.8h1.8v1.8h-1.8zM869.6 293.8h1.8v1.8h-1.8zM875.4 293.8h1.8v1.8h-1.8zM881.3 293.8h1.8v1.8h-1.8zM887.1 293.8h1.8v1.8h-1.8zM383.6 299.2h1.8v1.8h-1.8zM389.5 299.2h1.8v1.8h-1.8zM395.3 299.2h1.8v1.8h-1.8zM401.2 299.2h1.8v1.8h-1.8zM407.0 299.2h1.8v1.8h-1.8zM412.9 299.2h1.8v1.8h-1.8zM418.7 299.2h1.8v1.8h-1.8zM424.6 299.2h1.8v1.8h-1.8zM430.4 299.2h1.8v1.8h-1.8zM436.3 299.2h1.8v1.8h-1.8zM442.1 299.2h1.8v1.8h-1.8zM448.0 299.2h1.8v1.8h-1.8zM453.9 299.2h1.8v1.8h-1.8zM459.7 299.2h1.8v1.8h-1.8zM465.6 299.2h1.8v1.8h-1.8zM471.4 299.2h1.8v1.8h-1.8zM477.3 299.2h1.8v1.8h-1.8zM524.1 299.2h1.8v1.8h-1.8zM530.0 299.2h1.8v1.8h-1.8zM535.8 299.2h1.8v1.8h-1.8zM541.7 299.2h1.8v1.8h-1.8zM547.5 299.2h1.8v1.8h-1.8zM553.4 299.2h1.8v1.8h-1.8zM559.2 299.2h1.8v1.8h-1.8zM565.1 299.2h1.8v1.8h-1.8zM571.0 299.2h1.8v1.8h-1.8zM711.5 299.2h1.8v1.8h-1.8zM717.3 299.2h1.8v1.8h-1.8zM723.2 299.2h1.8v1.8h-1.8zM729.0 299.2h1.8v1.8h-1.8zM734.9 299.2h1.8v1.8h-1.8zM740.8 299.2h1.8v1.8h-1.8zM746.6 299.2h1.8v1.8h-1.8zM752.5 299.2h1.8v1.8h-1.8zM758.3 299.2h1.8v1.8h-1.8zM764.2 299.2h1.8v1.8h-1.8zM770.0 299.2h1.8v1.8h-1.8zM775.9 299.2h1.8v1.8h-1.8zM781.7 299.2h1.8v1.8h-1.8zM787.6 299.2h1.8v1.8h-1.8zM793.4 299.2h1.8v1.8h-1.8zM799.3 299.2h1.8v1.8h-1.8zM805.2 299.2h1.8v1.8h-1.8zM811.0 299.2h1.8v1.8h-1.8zM816.9 299.2h1.8v1.8h-1.8zM822.7 299.2h1.8v1.8h-1.8zM828.6 299.2h1.8v1.8h-1.8zM834.4 299.2h1.8v1.8h-1.8zM840.3 299.2h1.8v1.8h-1.8zM846.1 299.2h1.8v1.8h-1.8zM852.0 299.2h1.8v1.8h-1.8zM857.9 299.2h1.8v1.8h-1.8zM863.7 299.2h1.8v1.8h-1.8zM869.6 299.2h1.8v1.8h-1.8zM875.4 299.2h1.8v1.8h-1.8zM881.3 299.2h1.8v1.8h-1.8zM887.1 299.2h1.8v1.8h-1.8zM893.0 299.2h1.8v1.8h-1.8zM366.0 304.5h1.8v1.8h-1.8zM371.9 304.5h1.8v1.8h-1.8zM377.7 304.5h1.8v1.8h-1.8zM383.6 304.5h1.8v1.8h-1.8zM389.5 304.5h1.8v1.8h-1.8zM395.3 304.5h1.8v1.8h-1.8zM401.2 304.5h1.8v1.8h-1.8zM407.0 304.5h1.8v1.8h-1.8zM412.9 304.5h1.8v1.8h-1.8zM418.7 304.5h1.8v1.8h-1.8zM424.6 304.5h1.8v1.8h-1.8zM430.4 304.5h1.8v1.8h-1.8zM436.3 304.5h1.8v1.8h-1.8zM442.1 304.5h1.8v1.8h-1.8zM448.0 304.5h1.8v1.8h-1.8zM453.9 304.5h1.8v1.8h-1.8zM459.7 304.5h1.8v1.8h-1.8zM465.6 304.5h1.8v1.8h-1.8zM471.4 304.5h1.8v1.8h-1.8zM477.3 304.5h1.8v1.8h-1.8zM524.1 304.5h1.8v1.8h-1.8zM530.0 304.5h1.8v1.8h-1.8zM535.8 304.5h1.8v1.8h-1.8zM541.7 304.5h1.8v1.8h-1.8zM547.5 304.5h1.8v1.8h-1.8zM553.4 304.5h1.8v1.8h-1.8zM559.2 304.5h1.8v1.8h-1.8zM565.1 304.5h1.8v1.8h-1.8zM571.0 304.5h1.8v1.8h-1.8zM705.6 304.5h1.8v1.8h-1.8zM711.5 304.5h1.8v1.8h-1.8zM717.3 304.5h1.8v1.8h-1.8zM723.2 304.5h1.8v1.8h-1.8zM729.0 304.5h1.8v1.8h-1.8zM734.9 304.5h1.8v1.8h-1.8zM740.8 304.5h1.8v1.8h-1.8zM746.6 304.5h1.8v1.8h-1.8zM752.5 304.5h1.8v1.8h-1.8zM758.3 304.5h1.8v1.8h-1.8zM764.2 304.5h1.8v1.8h-1.8zM770.0 304.5h1.8v1.8h-1.8zM775.9 304.5h1.8v1.8h-1.8zM781.7 304.5h1.8v1.8h-1.8zM787.6 304.5h1.8v1.8h-1.8zM793.4 304.5h1.8v1.8h-1.8zM799.3 304.5h1.8v1.8h-1.8zM805.2 304.5h1.8v1.8h-1.8zM811.0 304.5h1.8v1.8h-1.8zM816.9 304.5h1.8v1.8h-1.8zM822.7 304.5h1.8v1.8h-1.8zM828.6 304.5h1.8v1.8h-1.8zM834.4 304.5h1.8v1.8h-1.8zM840.3 304.5h1.8v1.8h-1.8zM846.1 304.5h1.8v1.8h-1.8zM852.0 304.5h1.8v1.8h-1.8zM857.9 304.5h1.8v1.8h-1.8zM863.7 304.5h1.8v1.8h-1.8zM869.6 304.5h1.8v1.8h-1.8zM875.4 304.5h1.8v1.8h-1.8zM881.3 304.5h1.8v1.8h-1.8zM887.1 304.5h1.8v1.8h-1.8zM893.0 304.5h1.8v1.8h-1.8zM898.8 304.5h1.8v1.8h-1.8zM904.7 304.5h1.8v1.8h-1.8zM910.5 304.5h1.8v1.8h-1.8zM916.4 304.5h1.8v1.8h-1.8zM922.3 304.5h1.8v1.8h-1.8zM928.1 304.5h1.8v1.8h-1.8zM934.0 304.5h1.8v1.8h-1.8zM939.8 304.5h1.8v1.8h-1.8zM325.0 309.9h1.8v1.8h-1.8zM330.9 309.9h1.8v1.8h-1.8zM336.8 309.9h1.8v1.8h-1.8zM342.6 309.9h1.8v1.8h-1.8zM348.5 309.9h1.8v1.8h-1.8zM354.3 309.9h1.8v1.8h-1.8zM360.2 309.9h1.8v1.8h-1.8zM366.0 309.9h1.8v1.8h-1.8zM371.9 309.9h1.8v1.8h-1.8zM377.7 309.9h1.8v1.8h-1.8zM383.6 309.9h1.8v1.8h-1.8zM389.5 309.9h1.8v1.8h-1.8zM395.3 309.9h1.8v1.8h-1.8zM401.2 309.9h1.8v1.8h-1.8zM407.0 309.9h1.8v1.8h-1.8zM412.9 309.9h1.8v1.8h-1.8zM418.7 309.9h1.8v1.8h-1.8zM424.6 309.9h1.8v1.8h-1.8zM430.4 309.9h1.8v1.8h-1.8zM436.3 309.9h1.8v1.8h-1.8zM442.1 309.9h1.8v1.8h-1.8zM448.0 309.9h1.8v1.8h-1.8zM453.9 309.9h1.8v1.8h-1.8zM459.7 309.9h1.8v1.8h-1.8zM465.6 309.9h1.8v1.8h-1.8zM471.4 309.9h1.8v1.8h-1.8zM477.3 309.9h1.8v1.8h-1.8zM483.1 309.9h1.8v1.8h-1.8zM524.1 309.9h1.8v1.8h-1.8zM530.0 309.9h1.8v1.8h-1.8zM535.8 309.9h1.8v1.8h-1.8zM541.7 309.9h1.8v1.8h-1.8zM547.5 309.9h1.8v1.8h-1.8zM553.4 309.9h1.8v1.8h-1.8zM559.2 309.9h1.8v1.8h-1.8zM565.1 309.9h1.8v1.8h-1.8zM699.8 309.9h1.8v1.8h-1.8zM705.6 309.9h1.8v1.8h-1.8zM711.5 309.9h1.8v1.8h-1.8zM717.3 309.9h1.8v1.8h-1.8zM723.2 309.9h1.8v1.8h-1.8zM729.0 309.9h1.8v1.8h-1.8zM734.9 309.9h1.8v1.8h-1.8zM740.8 309.9h1.8v1.8h-1.8zM746.6 309.9h1.8v1.8h-1.8zM752.5 309.9h1.8v1.8h-1.8zM758.3 309.9h1.8v1.8h-1.8zM764.2 309.9h1.8v1.8h-1.8zM770.0 309.9h1.8v1.8h-1.8zM775.9 309.9h1.8v1.8h-1.8zM781.7 309.9h1.8v1.8h-1.8zM787.6 309.9h1.8v1.8h-1.8zM793.4 309.9h1.8v1.8h-1.8zM799.3 309.9h1.8v1.8h-1.8zM805.2 309.9h1.8v1.8h-1.8zM811.0 309.9h1.8v1.8h-1.8zM816.9 309.9h1.8v1.8h-1.8zM822.7 309.9h1.8v1.8h-1.8zM828.6 309.9h1.8v1.8h-1.8zM834.4 309.9h1.8v1.8h-1.8zM840.3 309.9h1.8v1.8h-1.8zM846.1 309.9h1.8v1.8h-1.8zM852.0 309.9h1.8v1.8h-1.8zM857.9 309.9h1.8v1.8h-1.8zM863.7 309.9h1.8v1.8h-1.8zM869.6 309.9h1.8v1.8h-1.8zM875.4 309.9h1.8v1.8h-1.8zM881.3 309.9h1.8v1.8h-1.8zM887.1 309.9h1.8v1.8h-1.8zM893.0 309.9h1.8v1.8h-1.8zM898.8 309.9h1.8v1.8h-1.8zM904.7 309.9h1.8v1.8h-1.8zM910.5 309.9h1.8v1.8h-1.8zM916.4 309.9h1.8v1.8h-1.8zM922.3 309.9h1.8v1.8h-1.8zM928.1 309.9h1.8v1.8h-1.8zM934.0 309.9h1.8v1.8h-1.8zM939.8 309.9h1.8v1.8h-1.8zM945.7 309.9h1.8v1.8h-1.8zM319.2 315.3h1.8v1.8h-1.8zM325.0 315.3h1.8v1.8h-1.8zM330.9 315.3h1.8v1.8h-1.8zM336.8 315.3h1.8v1.8h-1.8zM342.6 315.3h1.8v1.8h-1.8zM348.5 315.3h1.8v1.8h-1.8zM354.3 315.3h1.8v1.8h-1.8zM360.2 315.3h1.8v1.8h-1.8zM366.0 315.3h1.8v1.8h-1.8zM371.9 315.3h1.8v1.8h-1.8zM377.7 315.3h1.8v1.8h-1.8zM383.6 315.3h1.8v1.8h-1.8zM389.5 315.3h1.8v1.8h-1.8zM395.3 315.3h1.8v1.8h-1.8zM401.2 315.3h1.8v1.8h-1.8zM407.0 315.3h1.8v1.8h-1.8zM412.9 315.3h1.8v1.8h-1.8zM418.7 315.3h1.8v1.8h-1.8zM424.6 315.3h1.8v1.8h-1.8zM430.4 315.3h1.8v1.8h-1.8zM436.3 315.3h1.8v1.8h-1.8zM442.1 315.3h1.8v1.8h-1.8zM448.0 315.3h1.8v1.8h-1.8zM453.9 315.3h1.8v1.8h-1.8zM459.7 315.3h1.8v1.8h-1.8zM465.6 315.3h1.8v1.8h-1.8zM471.4 315.3h1.8v1.8h-1.8zM477.3 315.3h1.8v1.8h-1.8zM483.1 315.3h1.8v1.8h-1.8zM489.0 315.3h1.8v1.8h-1.8zM494.8 315.3h1.8v1.8h-1.8zM500.7 315.3h1.8v1.8h-1.8zM524.1 315.3h1.8v1.8h-1.8zM530.0 315.3h1.8v1.8h-1.8zM535.8 315.3h1.8v1.8h-1.8zM541.7 315.3h1.8v1.8h-1.8zM547.5 315.3h1.8v1.8h-1.8zM553.4 315.3h1.8v1.8h-1.8zM559.2 315.3h1.8v1.8h-1.8zM565.1 315.3h1.8v1.8h-1.8zM635.4 315.3h1.8v1.8h-1.8zM641.2 315.3h1.8v1.8h-1.8zM647.1 315.3h1.8v1.8h-1.8zM652.9 315.3h1.8v1.8h-1.8zM658.8 315.3h1.8v1.8h-1.8zM664.6 315.3h1.8v1.8h-1.8zM670.5 315.3h1.8v1.8h-1.8zM676.3 315.3h1.8v1.8h-1.8zM682.2 315.3h1.8v1.8h-1.8zM688.1 315.3h1.8v1.8h-1.8zM693.9 315.3h1.8v1.8h-1.8zM699.8 315.3h1.8v1.8h-1.8zM705.6 315.3h1.8v1.8h-1.8zM711.5 315.3h1.8v1.8h-1.8zM717.3 315.3h1.8v1.8h-1.8zM723.2 315.3h1.8v1.8h-1.8zM729.0 315.3h1.8v1.8h-1.8zM734.9 315.3h1.8v1.8h-1.8zM740.8 315.3h1.8v1.8h-1.8zM746.6 315.3h1.8v1.8h-1.8zM752.5 315.3h1.8v1.8h-1.8zM758.3 315.3h1.8v1.8h-1.8zM764.2 315.3h1.8v1.8h-1.8zM770.0 315.3h1.8v1.8h-1.8zM775.9 315.3h1.8v1.8h-1.8zM781.7 315.3h1.8v1.8h-1.8zM787.6 315.3h1.8v1.8h-1.8zM793.4 315.3h1.8v1.8h-1.8zM799.3 315.3h1.8v1.8h-1.8zM805.2 315.3h1.8v1.8h-1.8zM811.0 315.3h1.8v1.8h-1.8zM816.9 315.3h1.8v1.8h-1.8zM822.7 315.3h1.8v1.8h-1.8zM828.6 315.3h1.8v1.8h-1.8zM834.4 315.3h1.8v1.8h-1.8zM840.3 315.3h1.8v1.8h-1.8zM846.1 315.3h1.8v1.8h-1.8zM852.0 315.3h1.8v1.8h-1.8zM857.9 315.3h1.8v1.8h-1.8zM863.7 315.3h1.8v1.8h-1.8zM869.6 315.3h1.8v1.8h-1.8zM875.4 315.3h1.8v1.8h-1.8zM881.3 315.3h1.8v1.8h-1.8zM887.1 315.3h1.8v1.8h-1.8zM893.0 315.3h1.8v1.8h-1.8zM898.8 315.3h1.8v1.8h-1.8zM904.7 315.3h1.8v1.8h-1.8zM910.5 315.3h1.8v1.8h-1.8zM916.4 315.3h1.8v1.8h-1.8zM922.3 315.3h1.8v1.8h-1.8zM928.1 315.3h1.8v1.8h-1.8zM934.0 315.3h1.8v1.8h-1.8zM939.8 315.3h1.8v1.8h-1.8zM945.7 315.3h1.8v1.8h-1.8zM951.5 315.3h1.8v1.8h-1.8zM319.2 320.6h1.8v1.8h-1.8zM325.0 320.6h1.8v1.8h-1.8zM330.9 320.6h1.8v1.8h-1.8zM336.8 320.6h1.8v1.8h-1.8zM342.6 320.6h1.8v1.8h-1.8zM348.5 320.6h1.8v1.8h-1.8zM354.3 320.6h1.8v1.8h-1.8zM360.2 320.6h1.8v1.8h-1.8zM366.0 320.6h1.8v1.8h-1.8zM371.9 320.6h1.8v1.8h-1.8zM377.7 320.6h1.8v1.8h-1.8zM383.6 320.6h1.8v1.8h-1.8zM389.5 320.6h1.8v1.8h-1.8zM395.3 320.6h1.8v1.8h-1.8zM401.2 320.6h1.8v1.8h-1.8zM407.0 320.6h1.8v1.8h-1.8zM412.9 320.6h1.8v1.8h-1.8zM418.7 320.6h1.8v1.8h-1.8zM424.6 320.6h1.8v1.8h-1.8zM430.4 320.6h1.8v1.8h-1.8zM436.3 320.6h1.8v1.8h-1.8zM442.1 320.6h1.8v1.8h-1.8zM448.0 320.6h1.8v1.8h-1.8zM453.9 320.6h1.8v1.8h-1.8zM459.7 320.6h1.8v1.8h-1.8zM465.6 320.6h1.8v1.8h-1.8zM471.4 320.6h1.8v1.8h-1.8zM477.3 320.6h1.8v1.8h-1.8zM483.1 320.6h1.8v1.8h-1.8zM489.0 320.6h1.8v1.8h-1.8zM494.8 320.6h1.8v1.8h-1.8zM500.7 320.6h1.8v1.8h-1.8zM524.1 320.6h1.8v1.8h-1.8zM530.0 320.6h1.8v1.8h-1.8zM535.8 320.6h1.8v1.8h-1.8zM541.7 320.6h1.8v1.8h-1.8zM547.5 320.6h1.8v1.8h-1.8zM553.4 320.6h1.8v1.8h-1.8zM559.2 320.6h1.8v1.8h-1.8zM565.1 320.6h1.8v1.8h-1.8zM635.4 320.6h1.8v1.8h-1.8zM641.2 320.6h1.8v1.8h-1.8zM647.1 320.6h1.8v1.8h-1.8zM652.9 320.6h1.8v1.8h-1.8zM658.8 320.6h1.8v1.8h-1.8zM664.6 320.6h1.8v1.8h-1.8zM670.5 320.6h1.8v1.8h-1.8zM676.3 320.6h1.8v1.8h-1.8zM682.2 320.6h1.8v1.8h-1.8zM688.1 320.6h1.8v1.8h-1.8zM693.9 320.6h1.8v1.8h-1.8zM699.8 320.6h1.8v1.8h-1.8zM705.6 320.6h1.8v1.8h-1.8zM711.5 320.6h1.8v1.8h-1.8zM717.3 320.6h1.8v1.8h-1.8zM723.2 320.6h1.8v1.8h-1.8zM729.0 320.6h1.8v1.8h-1.8zM734.9 320.6h1.8v1.8h-1.8zM740.8 320.6h1.8v1.8h-1.8zM746.6 320.6h1.8v1.8h-1.8zM752.5 320.6h1.8v1.8h-1.8zM758.3 320.6h1.8v1.8h-1.8zM764.2 320.6h1.8v1.8h-1.8zM770.0 320.6h1.8v1.8h-1.8zM775.9 320.6h1.8v1.8h-1.8zM781.7 320.6h1.8v1.8h-1.8zM787.6 320.6h1.8v1.8h-1.8zM793.4 320.6h1.8v1.8h-1.8zM799.3 320.6h1.8v1.8h-1.8zM805.2 320.6h1.8v1.8h-1.8zM811.0 320.6h1.8v1.8h-1.8zM816.9 320.6h1.8v1.8h-1.8zM822.7 320.6h1.8v1.8h-1.8zM828.6 320.6h1.8v1.8h-1.8zM834.4 320.6h1.8v1.8h-1.8zM840.3 320.6h1.8v1.8h-1.8zM846.1 320.6h1.8v1.8h-1.8zM852.0 320.6h1.8v1.8h-1.8zM857.9 320.6h1.8v1.8h-1.8zM863.7 320.6h1.8v1.8h-1.8zM869.6 320.6h1.8v1.8h-1.8zM875.4 320.6h1.8v1.8h-1.8zM881.3 320.6h1.8v1.8h-1.8zM887.1 320.6h1.8v1.8h-1.8zM893.0 320.6h1.8v1.8h-1.8zM898.8 320.6h1.8v1.8h-1.8zM904.7 320.6h1.8v1.8h-1.8zM910.5 320.6h1.8v1.8h-1.8zM916.4 320.6h1.8v1.8h-1.8zM922.3 320.6h1.8v1.8h-1.8zM928.1 320.6h1.8v1.8h-1.8zM934.0 320.6h1.8v1.8h-1.8zM939.8 320.6h1.8v1.8h-1.8zM945.7 320.6h1.8v1.8h-1.8zM951.5 320.6h1.8v1.8h-1.8zM957.4 320.6h1.8v1.8h-1.8zM963.2 320.6h1.8v1.8h-1.8zM319.2 326.0h1.8v1.8h-1.8zM325.0 326.0h1.8v1.8h-1.8zM330.9 326.0h1.8v1.8h-1.8zM336.8 326.0h1.8v1.8h-1.8zM342.6 326.0h1.8v1.8h-1.8zM348.5 326.0h1.8v1.8h-1.8zM354.3 326.0h1.8v1.8h-1.8zM360.2 326.0h1.8v1.8h-1.8zM366.0 326.0h1.8v1.8h-1.8zM371.9 326.0h1.8v1.8h-1.8zM377.7 326.0h1.8v1.8h-1.8zM383.6 326.0h1.8v1.8h-1.8zM389.5 326.0h1.8v1.8h-1.8zM395.3 326.0h1.8v1.8h-1.8zM401.2 326.0h1.8v1.8h-1.8zM407.0 326.0h1.8v1.8h-1.8zM412.9 326.0h1.8v1.8h-1.8zM418.7 326.0h1.8v1.8h-1.8zM424.6 326.0h1.8v1.8h-1.8zM430.4 326.0h1.8v1.8h-1.8zM436.3 326.0h1.8v1.8h-1.8zM442.1 326.0h1.8v1.8h-1.8zM448.0 326.0h1.8v1.8h-1.8zM453.9 326.0h1.8v1.8h-1.8zM459.7 326.0h1.8v1.8h-1.8zM465.6 326.0h1.8v1.8h-1.8zM471.4 326.0h1.8v1.8h-1.8zM477.3 326.0h1.8v1.8h-1.8zM483.1 326.0h1.8v1.8h-1.8zM489.0 326.0h1.8v1.8h-1.8zM494.8 326.0h1.8v1.8h-1.8zM500.7 326.0h1.8v1.8h-1.8zM524.1 326.0h1.8v1.8h-1.8zM530.0 326.0h1.8v1.8h-1.8zM535.8 326.0h1.8v1.8h-1.8zM541.7 326.0h1.8v1.8h-1.8zM547.5 326.0h1.8v1.8h-1.8zM553.4 326.0h1.8v1.8h-1.8zM559.2 326.0h1.8v1.8h-1.8zM582.7 326.0h1.8v1.8h-1.8zM588.5 326.0h1.8v1.8h-1.8zM635.4 326.0h1.8v1.8h-1.8zM641.2 326.0h1.8v1.8h-1.8zM647.1 326.0h1.8v1.8h-1.8zM652.9 326.0h1.8v1.8h-1.8zM658.8 326.0h1.8v1.8h-1.8zM664.6 326.0h1.8v1.8h-1.8zM670.5 326.0h1.8v1.8h-1.8zM676.3 326.0h1.8v1.8h-1.8zM682.2 326.0h1.8v1.8h-1.8zM688.1 326.0h1.8v1.8h-1.8zM693.9 326.0h1.8v1.8h-1.8zM699.8 326.0h1.8v1.8h-1.8zM705.6 326.0h1.8v1.8h-1.8zM711.5 326.0h1.8v1.8h-1.8zM717.3 326.0h1.8v1.8h-1.8zM723.2 326.0h1.8v1.8h-1.8zM729.0 326.0h1.8v1.8h-1.8zM734.9 326.0h1.8v1.8h-1.8zM740.8 326.0h1.8v1.8h-1.8zM746.6 326.0h1.8v1.8h-1.8zM752.5 326.0h1.8v1.8h-1.8zM758.3 326.0h1.8v1.8h-1.8zM764.2 326.0h1.8v1.8h-1.8zM770.0 326.0h1.8v1.8h-1.8zM775.9 326.0h1.8v1.8h-1.8zM781.7 326.0h1.8v1.8h-1.8zM787.6 326.0h1.8v1.8h-1.8zM793.4 326.0h1.8v1.8h-1.8zM799.3 326.0h1.8v1.8h-1.8zM805.2 326.0h1.8v1.8h-1.8zM811.0 326.0h1.8v1.8h-1.8zM816.9 326.0h1.8v1.8h-1.8zM822.7 326.0h1.8v1.8h-1.8zM828.6 326.0h1.8v1.8h-1.8zM834.4 326.0h1.8v1.8h-1.8zM840.3 326.0h1.8v1.8h-1.8zM846.1 326.0h1.8v1.8h-1.8zM852.0 326.0h1.8v1.8h-1.8zM857.9 326.0h1.8v1.8h-1.8zM863.7 326.0h1.8v1.8h-1.8zM869.6 326.0h1.8v1.8h-1.8zM875.4 326.0h1.8v1.8h-1.8zM881.3 326.0h1.8v1.8h-1.8zM887.1 326.0h1.8v1.8h-1.8zM893.0 326.0h1.8v1.8h-1.8zM898.8 326.0h1.8v1.8h-1.8zM904.7 326.0h1.8v1.8h-1.8zM910.5 326.0h1.8v1.8h-1.8zM916.4 326.0h1.8v1.8h-1.8zM922.3 326.0h1.8v1.8h-1.8zM928.1 326.0h1.8v1.8h-1.8zM934.0 326.0h1.8v1.8h-1.8zM939.8 326.0h1.8v1.8h-1.8zM945.7 326.0h1.8v1.8h-1.8zM951.5 326.0h1.8v1.8h-1.8zM957.4 326.0h1.8v1.8h-1.8zM963.2 326.0h1.8v1.8h-1.8zM319.2 331.3h1.8v1.8h-1.8zM325.0 331.3h1.8v1.8h-1.8zM330.9 331.3h1.8v1.8h-1.8zM336.8 331.3h1.8v1.8h-1.8zM342.6 331.3h1.8v1.8h-1.8zM348.5 331.3h1.8v1.8h-1.8zM354.3 331.3h1.8v1.8h-1.8zM360.2 331.3h1.8v1.8h-1.8zM366.0 331.3h1.8v1.8h-1.8zM371.9 331.3h1.8v1.8h-1.8zM377.7 331.3h1.8v1.8h-1.8zM383.6 331.3h1.8v1.8h-1.8zM389.5 331.3h1.8v1.8h-1.8zM395.3 331.3h1.8v1.8h-1.8zM401.2 331.3h1.8v1.8h-1.8zM407.0 331.3h1.8v1.8h-1.8zM412.9 331.3h1.8v1.8h-1.8zM418.7 331.3h1.8v1.8h-1.8zM424.6 331.3h1.8v1.8h-1.8zM430.4 331.3h1.8v1.8h-1.8zM436.3 331.3h1.8v1.8h-1.8zM442.1 331.3h1.8v1.8h-1.8zM448.0 331.3h1.8v1.8h-1.8zM453.9 331.3h1.8v1.8h-1.8zM459.7 331.3h1.8v1.8h-1.8zM465.6 331.3h1.8v1.8h-1.8zM471.4 331.3h1.8v1.8h-1.8zM477.3 331.3h1.8v1.8h-1.8zM483.1 331.3h1.8v1.8h-1.8zM489.0 331.3h1.8v1.8h-1.8zM494.8 331.3h1.8v1.8h-1.8zM500.7 331.3h1.8v1.8h-1.8zM524.1 331.3h1.8v1.8h-1.8zM530.0 331.3h1.8v1.8h-1.8zM535.8 331.3h1.8v1.8h-1.8zM541.7 331.3h1.8v1.8h-1.8zM547.5 331.3h1.8v1.8h-1.8zM553.4 331.3h1.8v1.8h-1.8zM582.7 331.3h1.8v1.8h-1.8zM588.5 331.3h1.8v1.8h-1.8zM629.5 331.3h1.8v1.8h-1.8zM635.4 331.3h1.8v1.8h-1.8zM641.2 331.3h1.8v1.8h-1.8zM647.1 331.3h1.8v1.8h-1.8zM652.9 331.3h1.8v1.8h-1.8zM658.8 331.3h1.8v1.8h-1.8zM664.6 331.3h1.8v1.8h-1.8zM670.5 331.3h1.8v1.8h-1.8zM676.3 331.3h1.8v1.8h-1.8zM682.2 331.3h1.8v1.8h-1.8zM688.1 331.3h1.8v1.8h-1.8zM693.9 331.3h1.8v1.8h-1.8zM699.8 331.3h1.8v1.8h-1.8zM705.6 331.3h1.8v1.8h-1.8zM711.5 331.3h1.8v1.8h-1.8zM717.3 331.3h1.8v1.8h-1.8zM723.2 331.3h1.8v1.8h-1.8zM729.0 331.3h1.8v1.8h-1.8zM734.9 331.3h1.8v1.8h-1.8zM740.8 331.3h1.8v1.8h-1.8zM746.6 331.3h1.8v1.8h-1.8zM752.5 331.3h1.8v1.8h-1.8zM758.3 331.3h1.8v1.8h-1.8zM764.2 331.3h1.8v1.8h-1.8zM770.0 331.3h1.8v1.8h-1.8zM775.9 331.3h1.8v1.8h-1.8zM781.7 331.3h1.8v1.8h-1.8zM787.6 331.3h1.8v1.8h-1.8zM793.4 331.3h1.8v1.8h-1.8zM799.3 331.3h1.8v1.8h-1.8zM805.2 331.3h1.8v1.8h-1.8zM811.0 331.3h1.8v1.8h-1.8zM816.9 331.3h1.8v1.8h-1.8zM822.7 331.3h1.8v1.8h-1.8zM828.6 331.3h1.8v1.8h-1.8zM834.4 331.3h1.8v1.8h-1.8zM840.3 331.3h1.8v1.8h-1.8zM846.1 331.3h1.8v1.8h-1.8zM852.0 331.3h1.8v1.8h-1.8zM857.9 331.3h1.8v1.8h-1.8zM863.7 331.3h1.8v1.8h-1.8zM869.6 331.3h1.8v1.8h-1.8zM875.4 331.3h1.8v1.8h-1.8zM881.3 331.3h1.8v1.8h-1.8zM887.1 331.3h1.8v1.8h-1.8zM893.0 331.3h1.8v1.8h-1.8zM898.8 331.3h1.8v1.8h-1.8zM904.7 331.3h1.8v1.8h-1.8zM910.5 331.3h1.8v1.8h-1.8zM916.4 331.3h1.8v1.8h-1.8zM922.3 331.3h1.8v1.8h-1.8zM319.2 336.7h1.8v1.8h-1.8zM325.0 336.7h1.8v1.8h-1.8zM330.9 336.7h1.8v1.8h-1.8zM336.8 336.7h1.8v1.8h-1.8zM342.6 336.7h1.8v1.8h-1.8zM348.5 336.7h1.8v1.8h-1.8zM354.3 336.7h1.8v1.8h-1.8zM360.2 336.7h1.8v1.8h-1.8zM366.0 336.7h1.8v1.8h-1.8zM371.9 336.7h1.8v1.8h-1.8zM377.7 336.7h1.8v1.8h-1.8zM383.6 336.7h1.8v1.8h-1.8zM389.5 336.7h1.8v1.8h-1.8zM395.3 336.7h1.8v1.8h-1.8zM401.2 336.7h1.8v1.8h-1.8zM407.0 336.7h1.8v1.8h-1.8zM412.9 336.7h1.8v1.8h-1.8zM418.7 336.7h1.8v1.8h-1.8zM424.6 336.7h1.8v1.8h-1.8zM430.4 336.7h1.8v1.8h-1.8zM436.3 336.7h1.8v1.8h-1.8zM442.1 336.7h1.8v1.8h-1.8zM448.0 336.7h1.8v1.8h-1.8zM453.9 336.7h1.8v1.8h-1.8zM459.7 336.7h1.8v1.8h-1.8zM465.6 336.7h1.8v1.8h-1.8zM471.4 336.7h1.8v1.8h-1.8zM477.3 336.7h1.8v1.8h-1.8zM483.1 336.7h1.8v1.8h-1.8zM489.0 336.7h1.8v1.8h-1.8zM494.8 336.7h1.8v1.8h-1.8zM500.7 336.7h1.8v1.8h-1.8zM524.1 336.7h1.8v1.8h-1.8zM530.0 336.7h1.8v1.8h-1.8zM535.8 336.7h1.8v1.8h-1.8zM541.7 336.7h1.8v1.8h-1.8zM547.5 336.7h1.8v1.8h-1.8zM582.7 336.7h1.8v1.8h-1.8zM588.5 336.7h1.8v1.8h-1.8zM629.5 336.7h1.8v1.8h-1.8zM635.4 336.7h1.8v1.8h-1.8zM641.2 336.7h1.8v1.8h-1.8zM647.1 336.7h1.8v1.8h-1.8zM652.9 336.7h1.8v1.8h-1.8zM658.8 336.7h1.8v1.8h-1.8zM664.6 336.7h1.8v1.8h-1.8zM670.5 336.7h1.8v1.8h-1.8zM676.3 336.7h1.8v1.8h-1.8zM682.2 336.7h1.8v1.8h-1.8zM688.1 336.7h1.8v1.8h-1.8zM693.9 336.7h1.8v1.8h-1.8zM699.8 336.7h1.8v1.8h-1.8zM705.6 336.7h1.8v1.8h-1.8zM711.5 336.7h1.8v1.8h-1.8zM717.3 336.7h1.8v1.8h-1.8zM723.2 336.7h1.8v1.8h-1.8zM729.0 336.7h1.8v1.8h-1.8zM734.9 336.7h1.8v1.8h-1.8zM740.8 336.7h1.8v1.8h-1.8zM746.6 336.7h1.8v1.8h-1.8zM752.5 336.7h1.8v1.8h-1.8zM758.3 336.7h1.8v1.8h-1.8zM764.2 336.7h1.8v1.8h-1.8zM770.0 336.7h1.8v1.8h-1.8zM775.9 336.7h1.8v1.8h-1.8zM781.7 336.7h1.8v1.8h-1.8zM787.6 336.7h1.8v1.8h-1.8zM793.4 336.7h1.8v1.8h-1.8zM799.3 336.7h1.8v1.8h-1.8zM805.2 336.7h1.8v1.8h-1.8zM811.0 336.7h1.8v1.8h-1.8zM816.9 336.7h1.8v1.8h-1.8zM822.7 336.7h1.8v1.8h-1.8zM828.6 336.7h1.8v1.8h-1.8zM834.4 336.7h1.8v1.8h-1.8zM840.3 336.7h1.8v1.8h-1.8zM846.1 336.7h1.8v1.8h-1.8zM852.0 336.7h1.8v1.8h-1.8zM857.9 336.7h1.8v1.8h-1.8zM863.7 336.7h1.8v1.8h-1.8zM869.6 336.7h1.8v1.8h-1.8zM875.4 336.7h1.8v1.8h-1.8zM881.3 336.7h1.8v1.8h-1.8zM887.1 336.7h1.8v1.8h-1.8zM893.0 336.7h1.8v1.8h-1.8zM898.8 336.7h1.8v1.8h-1.8zM904.7 336.7h1.8v1.8h-1.8zM910.5 336.7h1.8v1.8h-1.8zM916.4 336.7h1.8v1.8h-1.8zM319.2 342.0h1.8v1.8h-1.8zM325.0 342.0h1.8v1.8h-1.8zM330.9 342.0h1.8v1.8h-1.8zM336.8 342.0h1.8v1.8h-1.8zM342.6 342.0h1.8v1.8h-1.8zM348.5 342.0h1.8v1.8h-1.8zM354.3 342.0h1.8v1.8h-1.8zM360.2 342.0h1.8v1.8h-1.8zM366.0 342.0h1.8v1.8h-1.8zM371.9 342.0h1.8v1.8h-1.8zM377.7 342.0h1.8v1.8h-1.8zM383.6 342.0h1.8v1.8h-1.8zM389.5 342.0h1.8v1.8h-1.8zM395.3 342.0h1.8v1.8h-1.8zM401.2 342.0h1.8v1.8h-1.8zM407.0 342.0h1.8v1.8h-1.8zM412.9 342.0h1.8v1.8h-1.8zM418.7 342.0h1.8v1.8h-1.8zM424.6 342.0h1.8v1.8h-1.8zM430.4 342.0h1.8v1.8h-1.8zM436.3 342.0h1.8v1.8h-1.8zM442.1 342.0h1.8v1.8h-1.8zM448.0 342.0h1.8v1.8h-1.8zM453.9 342.0h1.8v1.8h-1.8zM459.7 342.0h1.8v1.8h-1.8zM465.6 342.0h1.8v1.8h-1.8zM471.4 342.0h1.8v1.8h-1.8zM477.3 342.0h1.8v1.8h-1.8zM483.1 342.0h1.8v1.8h-1.8zM489.0 342.0h1.8v1.8h-1.8zM494.8 342.0h1.8v1.8h-1.8zM500.7 342.0h1.8v1.8h-1.8zM524.1 342.0h1.8v1.8h-1.8zM530.0 342.0h1.8v1.8h-1.8zM535.8 342.0h1.8v1.8h-1.8zM541.7 342.0h1.8v1.8h-1.8zM629.5 342.0h1.8v1.8h-1.8zM635.4 342.0h1.8v1.8h-1.8zM641.2 342.0h1.8v1.8h-1.8zM647.1 342.0h1.8v1.8h-1.8zM652.9 342.0h1.8v1.8h-1.8zM658.8 342.0h1.8v1.8h-1.8zM664.6 342.0h1.8v1.8h-1.8zM670.5 342.0h1.8v1.8h-1.8zM676.3 342.0h1.8v1.8h-1.8zM682.2 342.0h1.8v1.8h-1.8zM688.1 342.0h1.8v1.8h-1.8zM693.9 342.0h1.8v1.8h-1.8zM699.8 342.0h1.8v1.8h-1.8zM705.6 342.0h1.8v1.8h-1.8zM711.5 342.0h1.8v1.8h-1.8zM717.3 342.0h1.8v1.8h-1.8zM723.2 342.0h1.8v1.8h-1.8zM729.0 342.0h1.8v1.8h-1.8zM734.9 342.0h1.8v1.8h-1.8zM740.8 342.0h1.8v1.8h-1.8zM746.6 342.0h1.8v1.8h-1.8zM752.5 342.0h1.8v1.8h-1.8zM758.3 342.0h1.8v1.8h-1.8zM764.2 342.0h1.8v1.8h-1.8zM770.0 342.0h1.8v1.8h-1.8zM775.9 342.0h1.8v1.8h-1.8zM781.7 342.0h1.8v1.8h-1.8zM787.6 342.0h1.8v1.8h-1.8zM793.4 342.0h1.8v1.8h-1.8zM799.3 342.0h1.8v1.8h-1.8zM805.2 342.0h1.8v1.8h-1.8zM811.0 342.0h1.8v1.8h-1.8zM816.9 342.0h1.8v1.8h-1.8zM822.7 342.0h1.8v1.8h-1.8zM828.6 342.0h1.8v1.8h-1.8zM834.4 342.0h1.8v1.8h-1.8zM840.3 342.0h1.8v1.8h-1.8zM846.1 342.0h1.8v1.8h-1.8zM852.0 342.0h1.8v1.8h-1.8zM857.9 342.0h1.8v1.8h-1.8zM863.7 342.0h1.8v1.8h-1.8zM869.6 342.0h1.8v1.8h-1.8zM875.4 342.0h1.8v1.8h-1.8zM881.3 342.0h1.8v1.8h-1.8zM887.1 342.0h1.8v1.8h-1.8zM893.0 342.0h1.8v1.8h-1.8zM898.8 342.0h1.8v1.8h-1.8zM904.7 342.0h1.8v1.8h-1.8zM910.5 342.0h1.8v1.8h-1.8zM916.4 342.0h1.8v1.8h-1.8zM325.0 347.4h1.8v1.8h-1.8zM330.9 347.4h1.8v1.8h-1.8zM336.8 347.4h1.8v1.8h-1.8zM342.6 347.4h1.8v1.8h-1.8zM348.5 347.4h1.8v1.8h-1.8zM354.3 347.4h1.8v1.8h-1.8zM360.2 347.4h1.8v1.8h-1.8zM366.0 347.4h1.8v1.8h-1.8zM371.9 347.4h1.8v1.8h-1.8zM377.7 347.4h1.8v1.8h-1.8zM383.6 347.4h1.8v1.8h-1.8zM389.5 347.4h1.8v1.8h-1.8zM395.3 347.4h1.8v1.8h-1.8zM401.2 347.4h1.8v1.8h-1.8zM407.0 347.4h1.8v1.8h-1.8zM412.9 347.4h1.8v1.8h-1.8zM418.7 347.4h1.8v1.8h-1.8zM424.6 347.4h1.8v1.8h-1.8zM430.4 347.4h1.8v1.8h-1.8zM436.3 347.4h1.8v1.8h-1.8zM442.1 347.4h1.8v1.8h-1.8zM448.0 347.4h1.8v1.8h-1.8zM453.9 347.4h1.8v1.8h-1.8zM459.7 347.4h1.8v1.8h-1.8zM465.6 347.4h1.8v1.8h-1.8zM471.4 347.4h1.8v1.8h-1.8zM477.3 347.4h1.8v1.8h-1.8zM483.1 347.4h1.8v1.8h-1.8zM489.0 347.4h1.8v1.8h-1.8zM494.8 347.4h1.8v1.8h-1.8zM500.7 347.4h1.8v1.8h-1.8zM524.1 347.4h1.8v1.8h-1.8zM530.0 347.4h1.8v1.8h-1.8zM623.6 347.4h1.8v1.8h-1.8zM629.5 347.4h1.8v1.8h-1.8zM635.4 347.4h1.8v1.8h-1.8zM641.2 347.4h1.8v1.8h-1.8zM647.1 347.4h1.8v1.8h-1.8zM652.9 347.4h1.8v1.8h-1.8zM658.8 347.4h1.8v1.8h-1.8zM664.6 347.4h1.8v1.8h-1.8zM670.5 347.4h1.8v1.8h-1.8zM676.3 347.4h1.8v1.8h-1.8zM682.2 347.4h1.8v1.8h-1.8zM688.1 347.4h1.8v1.8h-1.8zM693.9 347.4h1.8v1.8h-1.8zM699.8 347.4h1.8v1.8h-1.8zM705.6 347.4h1.8v1.8h-1.8zM711.5 347.4h1.8v1.8h-1.8zM717.3 347.4h1.8v1.8h-1.8zM723.2 347.4h1.8v1.8h-1.8zM729.0 347.4h1.8v1.8h-1.8zM734.9 347.4h1.8v1.8h-1.8zM740.8 347.4h1.8v1.8h-1.8zM746.6 347.4h1.8v1.8h-1.8zM752.5 347.4h1.8v1.8h-1.8zM758.3 347.4h1.8v1.8h-1.8zM764.2 347.4h1.8v1.8h-1.8zM770.0 347.4h1.8v1.8h-1.8zM775.9 347.4h1.8v1.8h-1.8zM781.7 347.4h1.8v1.8h-1.8zM787.6 347.4h1.8v1.8h-1.8zM793.4 347.4h1.8v1.8h-1.8zM799.3 347.4h1.8v1.8h-1.8zM805.2 347.4h1.8v1.8h-1.8zM811.0 347.4h1.8v1.8h-1.8zM816.9 347.4h1.8v1.8h-1.8zM822.7 347.4h1.8v1.8h-1.8zM828.6 347.4h1.8v1.8h-1.8zM834.4 347.4h1.8v1.8h-1.8zM840.3 347.4h1.8v1.8h-1.8zM846.1 347.4h1.8v1.8h-1.8zM852.0 347.4h1.8v1.8h-1.8zM857.9 347.4h1.8v1.8h-1.8zM863.7 347.4h1.8v1.8h-1.8zM869.6 347.4h1.8v1.8h-1.8zM875.4 347.4h1.8v1.8h-1.8zM881.3 347.4h1.8v1.8h-1.8zM887.1 347.4h1.8v1.8h-1.8zM893.0 347.4h1.8v1.8h-1.8zM898.8 347.4h1.8v1.8h-1.8zM904.7 347.4h1.8v1.8h-1.8zM910.5 347.4h1.8v1.8h-1.8zM916.4 347.4h1.8v1.8h-1.8zM330.9 352.7h1.8v1.8h-1.8zM336.8 352.7h1.8v1.8h-1.8zM342.6 352.7h1.8v1.8h-1.8zM348.5 352.7h1.8v1.8h-1.8zM354.3 352.7h1.8v1.8h-1.8zM360.2 352.7h1.8v1.8h-1.8zM366.0 352.7h1.8v1.8h-1.8zM371.9 352.7h1.8v1.8h-1.8zM377.7 352.7h1.8v1.8h-1.8zM383.6 352.7h1.8v1.8h-1.8zM389.5 352.7h1.8v1.8h-1.8zM395.3 352.7h1.8v1.8h-1.8zM401.2 352.7h1.8v1.8h-1.8zM407.0 352.7h1.8v1.8h-1.8zM412.9 352.7h1.8v1.8h-1.8zM418.7 352.7h1.8v1.8h-1.8zM424.6 352.7h1.8v1.8h-1.8zM430.4 352.7h1.8v1.8h-1.8zM436.3 352.7h1.8v1.8h-1.8zM442.1 352.7h1.8v1.8h-1.8zM448.0 352.7h1.8v1.8h-1.8zM453.9 352.7h1.8v1.8h-1.8zM459.7 352.7h1.8v1.8h-1.8zM465.6 352.7h1.8v1.8h-1.8zM471.4 352.7h1.8v1.8h-1.8zM477.3 352.7h1.8v1.8h-1.8zM483.1 352.7h1.8v1.8h-1.8zM489.0 352.7h1.8v1.8h-1.8zM494.8 352.7h1.8v1.8h-1.8zM500.7 352.7h1.8v1.8h-1.8zM506.6 352.7h1.8v1.8h-1.8zM512.4 352.7h1.8v1.8h-1.8zM518.3 352.7h1.8v1.8h-1.8zM524.1 352.7h1.8v1.8h-1.8zM530.0 352.7h1.8v1.8h-1.8zM617.8 352.7h1.8v1.8h-1.8zM623.6 352.7h1.8v1.8h-1.8zM629.5 352.7h1.8v1.8h-1.8zM635.4 352.7h1.8v1.8h-1.8zM641.2 352.7h1.8v1.8h-1.8zM647.1 352.7h1.8v1.8h-1.8zM652.9 352.7h1.8v1.8h-1.8zM658.8 352.7h1.8v1.8h-1.8zM664.6 352.7h1.8v1.8h-1.8zM670.5 352.7h1.8v1.8h-1.8zM676.3 352.7h1.8v1.8h-1.8zM682.2 352.7h1.8v1.8h-1.8zM688.1 352.7h1.8v1.8h-1.8zM693.9 352.7h1.8v1.8h-1.8zM699.8 352.7h1.8v1.8h-1.8zM705.6 352.7h1.8v1.8h-1.8zM711.5 352.7h1.8v1.8h-1.8zM717.3 352.7h1.8v1.8h-1.8zM723.2 352.7h1.8v1.8h-1.8zM729.0 352.7h1.8v1.8h-1.8zM734.9 352.7h1.8v1.8h-1.8zM740.8 352.7h1.8v1.8h-1.8zM746.6 352.7h1.8v1.8h-1.8zM752.5 352.7h1.8v1.8h-1.8zM758.3 352.7h1.8v1.8h-1.8zM764.2 352.7h1.8v1.8h-1.8zM770.0 352.7h1.8v1.8h-1.8zM775.9 352.7h1.8v1.8h-1.8zM781.7 352.7h1.8v1.8h-1.8zM787.6 352.7h1.8v1.8h-1.8zM793.4 352.7h1.8v1.8h-1.8zM799.3 352.7h1.8v1.8h-1.8zM805.2 352.7h1.8v1.8h-1.8zM811.0 352.7h1.8v1.8h-1.8zM816.9 352.7h1.8v1.8h-1.8zM822.7 352.7h1.8v1.8h-1.8zM828.6 352.7h1.8v1.8h-1.8zM834.4 352.7h1.8v1.8h-1.8zM840.3 352.7h1.8v1.8h-1.8zM846.1 352.7h1.8v1.8h-1.8zM852.0 352.7h1.8v1.8h-1.8zM857.9 352.7h1.8v1.8h-1.8zM863.7 352.7h1.8v1.8h-1.8zM869.6 352.7h1.8v1.8h-1.8zM875.4 352.7h1.8v1.8h-1.8zM881.3 352.7h1.8v1.8h-1.8zM887.1 352.7h1.8v1.8h-1.8zM893.0 352.7h1.8v1.8h-1.8zM898.8 352.7h1.8v1.8h-1.8zM904.7 352.7h1.8v1.8h-1.8zM910.5 352.7h1.8v1.8h-1.8zM916.4 352.7h1.8v1.8h-1.8zM342.6 358.1h1.8v1.8h-1.8zM348.5 358.1h1.8v1.8h-1.8zM354.3 358.1h1.8v1.8h-1.8zM360.2 358.1h1.8v1.8h-1.8zM366.0 358.1h1.8v1.8h-1.8zM371.9 358.1h1.8v1.8h-1.8zM377.7 358.1h1.8v1.8h-1.8zM383.6 358.1h1.8v1.8h-1.8zM389.5 358.1h1.8v1.8h-1.8zM395.3 358.1h1.8v1.8h-1.8zM401.2 358.1h1.8v1.8h-1.8zM407.0 358.1h1.8v1.8h-1.8zM412.9 358.1h1.8v1.8h-1.8zM418.7 358.1h1.8v1.8h-1.8zM424.6 358.1h1.8v1.8h-1.8zM430.4 358.1h1.8v1.8h-1.8zM436.3 358.1h1.8v1.8h-1.8zM442.1 358.1h1.8v1.8h-1.8zM448.0 358.1h1.8v1.8h-1.8zM453.9 358.1h1.8v1.8h-1.8zM459.7 358.1h1.8v1.8h-1.8zM465.6 358.1h1.8v1.8h-1.8zM471.4 358.1h1.8v1.8h-1.8zM477.3 358.1h1.8v1.8h-1.8zM483.1 358.1h1.8v1.8h-1.8zM489.0 358.1h1.8v1.8h-1.8zM494.8 358.1h1.8v1.8h-1.8zM500.7 358.1h1.8v1.8h-1.8zM506.6 358.1h1.8v1.8h-1.8zM512.4 358.1h1.8v1.8h-1.8zM518.3 358.1h1.8v1.8h-1.8zM524.1 358.1h1.8v1.8h-1.8zM530.0 358.1h1.8v1.8h-1.8zM617.8 358.1h1.8v1.8h-1.8zM623.6 358.1h1.8v1.8h-1.8zM629.5 358.1h1.8v1.8h-1.8zM635.4 358.1h1.8v1.8h-1.8zM641.2 358.1h1.8v1.8h-1.8zM647.1 358.1h1.8v1.8h-1.8zM652.9 358.1h1.8v1.8h-1.8zM658.8 358.1h1.8v1.8h-1.8zM664.6 358.1h1.8v1.8h-1.8zM670.5 358.1h1.8v1.8h-1.8zM676.3 358.1h1.8v1.8h-1.8zM682.2 358.1h1.8v1.8h-1.8zM688.1 358.1h1.8v1.8h-1.8zM693.9 358.1h1.8v1.8h-1.8zM699.8 358.1h1.8v1.8h-1.8zM705.6 358.1h1.8v1.8h-1.8zM711.5 358.1h1.8v1.8h-1.8zM717.3 358.1h1.8v1.8h-1.8zM723.2 358.1h1.8v1.8h-1.8zM729.0 358.1h1.8v1.8h-1.8zM734.9 358.1h1.8v1.8h-1.8zM740.8 358.1h1.8v1.8h-1.8zM746.6 358.1h1.8v1.8h-1.8zM752.5 358.1h1.8v1.8h-1.8zM758.3 358.1h1.8v1.8h-1.8zM764.2 358.1h1.8v1.8h-1.8zM770.0 358.1h1.8v1.8h-1.8zM775.9 358.1h1.8v1.8h-1.8zM781.7 358.1h1.8v1.8h-1.8zM787.6 358.1h1.8v1.8h-1.8zM793.4 358.1h1.8v1.8h-1.8zM799.3 358.1h1.8v1.8h-1.8zM805.2 358.1h1.8v1.8h-1.8zM811.0 358.1h1.8v1.8h-1.8zM816.9 358.1h1.8v1.8h-1.8zM822.7 358.1h1.8v1.8h-1.8zM828.6 358.1h1.8v1.8h-1.8zM834.4 358.1h1.8v1.8h-1.8zM840.3 358.1h1.8v1.8h-1.8zM846.1 358.1h1.8v1.8h-1.8zM852.0 358.1h1.8v1.8h-1.8zM857.9 358.1h1.8v1.8h-1.8zM863.7 358.1h1.8v1.8h-1.8zM869.6 358.1h1.8v1.8h-1.8zM875.4 358.1h1.8v1.8h-1.8zM881.3 358.1h1.8v1.8h-1.8zM887.1 358.1h1.8v1.8h-1.8zM893.0 358.1h1.8v1.8h-1.8zM898.8 358.1h1.8v1.8h-1.8zM904.7 358.1h1.8v1.8h-1.8zM910.5 358.1h1.8v1.8h-1.8zM916.4 358.1h1.8v1.8h-1.8zM371.9 363.4h1.8v1.8h-1.8zM377.7 363.4h1.8v1.8h-1.8zM383.6 363.4h1.8v1.8h-1.8zM389.5 363.4h1.8v1.8h-1.8zM395.3 363.4h1.8v1.8h-1.8zM401.2 363.4h1.8v1.8h-1.8zM407.0 363.4h1.8v1.8h-1.8zM412.9 363.4h1.8v1.8h-1.8zM418.7 363.4h1.8v1.8h-1.8zM424.6 363.4h1.8v1.8h-1.8zM430.4 363.4h1.8v1.8h-1.8zM436.3 363.4h1.8v1.8h-1.8zM442.1 363.4h1.8v1.8h-1.8zM448.0 363.4h1.8v1.8h-1.8zM453.9 363.4h1.8v1.8h-1.8zM459.7 363.4h1.8v1.8h-1.8zM465.6 363.4h1.8v1.8h-1.8zM471.4 363.4h1.8v1.8h-1.8zM477.3 363.4h1.8v1.8h-1.8zM483.1 363.4h1.8v1.8h-1.8zM489.0 363.4h1.8v1.8h-1.8zM494.8 363.4h1.8v1.8h-1.8zM500.7 363.4h1.8v1.8h-1.8zM506.6 363.4h1.8v1.8h-1.8zM512.4 363.4h1.8v1.8h-1.8zM518.3 363.4h1.8v1.8h-1.8zM524.1 363.4h1.8v1.8h-1.8zM611.9 363.4h1.8v1.8h-1.8zM617.8 363.4h1.8v1.8h-1.8zM623.6 363.4h1.8v1.8h-1.8zM629.5 363.4h1.8v1.8h-1.8zM635.4 363.4h1.8v1.8h-1.8zM641.2 363.4h1.8v1.8h-1.8zM647.1 363.4h1.8v1.8h-1.8zM652.9 363.4h1.8v1.8h-1.8zM658.8 363.4h1.8v1.8h-1.8zM664.6 363.4h1.8v1.8h-1.8zM670.5 363.4h1.8v1.8h-1.8zM676.3 363.4h1.8v1.8h-1.8zM682.2 363.4h1.8v1.8h-1.8zM688.1 363.4h1.8v1.8h-1.8zM693.9 363.4h1.8v1.8h-1.8zM699.8 363.4h1.8v1.8h-1.8zM705.6 363.4h1.8v1.8h-1.8zM711.5 363.4h1.8v1.8h-1.8zM717.3 363.4h1.8v1.8h-1.8zM723.2 363.4h1.8v1.8h-1.8zM729.0 363.4h1.8v1.8h-1.8zM734.9 363.4h1.8v1.8h-1.8zM740.8 363.4h1.8v1.8h-1.8zM746.6 363.4h1.8v1.8h-1.8zM752.5 363.4h1.8v1.8h-1.8zM758.3 363.4h1.8v1.8h-1.8zM764.2 363.4h1.8v1.8h-1.8zM770.0 363.4h1.8v1.8h-1.8zM775.9 363.4h1.8v1.8h-1.8zM781.7 363.4h1.8v1.8h-1.8zM787.6 363.4h1.8v1.8h-1.8zM793.4 363.4h1.8v1.8h-1.8zM799.3 363.4h1.8v1.8h-1.8zM805.2 363.4h1.8v1.8h-1.8zM811.0 363.4h1.8v1.8h-1.8zM816.9 363.4h1.8v1.8h-1.8zM822.7 363.4h1.8v1.8h-1.8zM828.6 363.4h1.8v1.8h-1.8zM834.4 363.4h1.8v1.8h-1.8zM840.3 363.4h1.8v1.8h-1.8zM846.1 363.4h1.8v1.8h-1.8zM852.0 363.4h1.8v1.8h-1.8zM857.9 363.4h1.8v1.8h-1.8zM863.7 363.4h1.8v1.8h-1.8zM869.6 363.4h1.8v1.8h-1.8zM875.4 363.4h1.8v1.8h-1.8zM881.3 363.4h1.8v1.8h-1.8zM887.1 363.4h1.8v1.8h-1.8zM893.0 363.4h1.8v1.8h-1.8zM898.8 363.4h1.8v1.8h-1.8zM904.7 363.4h1.8v1.8h-1.8zM910.5 363.4h1.8v1.8h-1.8zM377.7 368.8h1.8v1.8h-1.8zM383.6 368.8h1.8v1.8h-1.8zM389.5 368.8h1.8v1.8h-1.8zM395.3 368.8h1.8v1.8h-1.8zM401.2 368.8h1.8v1.8h-1.8zM407.0 368.8h1.8v1.8h-1.8zM412.9 368.8h1.8v1.8h-1.8zM418.7 368.8h1.8v1.8h-1.8zM424.6 368.8h1.8v1.8h-1.8zM430.4 368.8h1.8v1.8h-1.8zM436.3 368.8h1.8v1.8h-1.8zM442.1 368.8h1.8v1.8h-1.8zM448.0 368.8h1.8v1.8h-1.8zM453.9 368.8h1.8v1.8h-1.8zM459.7 368.8h1.8v1.8h-1.8zM465.6 368.8h1.8v1.8h-1.8zM471.4 368.8h1.8v1.8h-1.8zM477.3 368.8h1.8v1.8h-1.8zM483.1 368.8h1.8v1.8h-1.8zM489.0 368.8h1.8v1.8h-1.8zM494.8 368.8h1.8v1.8h-1.8zM500.7 368.8h1.8v1.8h-1.8zM506.6 368.8h1.8v1.8h-1.8zM512.4 368.8h1.8v1.8h-1.8zM606.1 368.8h1.8v1.8h-1.8zM611.9 368.8h1.8v1.8h-1.8zM617.8 368.8h1.8v1.8h-1.8zM623.6 368.8h1.8v1.8h-1.8zM629.5 368.8h1.8v1.8h-1.8zM635.4 368.8h1.8v1.8h-1.8zM641.2 368.8h1.8v1.8h-1.8zM647.1 368.8h1.8v1.8h-1.8zM652.9 368.8h1.8v1.8h-1.8zM658.8 368.8h1.8v1.8h-1.8zM664.6 368.8h1.8v1.8h-1.8zM670.5 368.8h1.8v1.8h-1.8zM676.3 368.8h1.8v1.8h-1.8zM682.2 368.8h1.8v1.8h-1.8zM688.1 368.8h1.8v1.8h-1.8zM693.9 368.8h1.8v1.8h-1.8zM699.8 368.8h1.8v1.8h-1.8zM705.6 368.8h1.8v1.8h-1.8zM711.5 368.8h1.8v1.8h-1.8zM717.3 368.8h1.8v1.8h-1.8zM723.2 368.8h1.8v1.8h-1.8zM729.0 368.8h1.8v1.8h-1.8zM734.9 368.8h1.8v1.8h-1.8zM740.8 368.8h1.8v1.8h-1.8zM746.6 368.8h1.8v1.8h-1.8zM752.5 368.8h1.8v1.8h-1.8zM758.3 368.8h1.8v1.8h-1.8zM764.2 368.8h1.8v1.8h-1.8zM770.0 368.8h1.8v1.8h-1.8zM775.9 368.8h1.8v1.8h-1.8zM781.7 368.8h1.8v1.8h-1.8zM787.6 368.8h1.8v1.8h-1.8zM793.4 368.8h1.8v1.8h-1.8zM799.3 368.8h1.8v1.8h-1.8zM805.2 368.8h1.8v1.8h-1.8zM811.0 368.8h1.8v1.8h-1.8zM816.9 368.8h1.8v1.8h-1.8zM822.7 368.8h1.8v1.8h-1.8zM828.6 368.8h1.8v1.8h-1.8zM834.4 368.8h1.8v1.8h-1.8zM840.3 368.8h1.8v1.8h-1.8zM846.1 368.8h1.8v1.8h-1.8zM852.0 368.8h1.8v1.8h-1.8zM857.9 368.8h1.8v1.8h-1.8zM863.7 368.8h1.8v1.8h-1.8zM869.6 368.8h1.8v1.8h-1.8zM875.4 368.8h1.8v1.8h-1.8zM881.3 368.8h1.8v1.8h-1.8zM887.1 368.8h1.8v1.8h-1.8zM893.0 368.8h1.8v1.8h-1.8zM898.8 368.8h1.8v1.8h-1.8zM904.7 368.8h1.8v1.8h-1.8zM910.5 368.8h1.8v1.8h-1.8zM383.6 374.2h1.8v1.8h-1.8zM389.5 374.2h1.8v1.8h-1.8zM395.3 374.2h1.8v1.8h-1.8zM401.2 374.2h1.8v1.8h-1.8zM407.0 374.2h1.8v1.8h-1.8zM412.9 374.2h1.8v1.8h-1.8zM418.7 374.2h1.8v1.8h-1.8zM424.6 374.2h1.8v1.8h-1.8zM430.4 374.2h1.8v1.8h-1.8zM436.3 374.2h1.8v1.8h-1.8zM442.1 374.2h1.8v1.8h-1.8zM448.0 374.2h1.8v1.8h-1.8zM453.9 374.2h1.8v1.8h-1.8zM459.7 374.2h1.8v1.8h-1.8zM465.6 374.2h1.8v1.8h-1.8zM471.4 374.2h1.8v1.8h-1.8zM477.3 374.2h1.8v1.8h-1.8zM483.1 374.2h1.8v1.8h-1.8zM489.0 374.2h1.8v1.8h-1.8zM494.8 374.2h1.8v1.8h-1.8zM500.7 374.2h1.8v1.8h-1.8zM506.6 374.2h1.8v1.8h-1.8zM512.4 374.2h1.8v1.8h-1.8zM606.1 374.2h1.8v1.8h-1.8zM611.9 374.2h1.8v1.8h-1.8zM617.8 374.2h1.8v1.8h-1.8zM623.6 374.2h1.8v1.8h-1.8zM629.5 374.2h1.8v1.8h-1.8zM635.4 374.2h1.8v1.8h-1.8zM641.2 374.2h1.8v1.8h-1.8zM647.1 374.2h1.8v1.8h-1.8zM652.9 374.2h1.8v1.8h-1.8zM658.8 374.2h1.8v1.8h-1.8zM664.6 374.2h1.8v1.8h-1.8zM670.5 374.2h1.8v1.8h-1.8zM676.3 374.2h1.8v1.8h-1.8zM682.2 374.2h1.8v1.8h-1.8zM688.1 374.2h1.8v1.8h-1.8zM693.9 374.2h1.8v1.8h-1.8zM699.8 374.2h1.8v1.8h-1.8zM705.6 374.2h1.8v1.8h-1.8zM711.5 374.2h1.8v1.8h-1.8zM717.3 374.2h1.8v1.8h-1.8zM723.2 374.2h1.8v1.8h-1.8zM729.0 374.2h1.8v1.8h-1.8zM734.9 374.2h1.8v1.8h-1.8zM740.8 374.2h1.8v1.8h-1.8zM746.6 374.2h1.8v1.8h-1.8zM752.5 374.2h1.8v1.8h-1.8zM758.3 374.2h1.8v1.8h-1.8zM764.2 374.2h1.8v1.8h-1.8zM770.0 374.2h1.8v1.8h-1.8zM775.9 374.2h1.8v1.8h-1.8zM781.7 374.2h1.8v1.8h-1.8zM787.6 374.2h1.8v1.8h-1.8zM793.4 374.2h1.8v1.8h-1.8zM799.3 374.2h1.8v1.8h-1.8zM805.2 374.2h1.8v1.8h-1.8zM811.0 374.2h1.8v1.8h-1.8zM816.9 374.2h1.8v1.8h-1.8zM822.7 374.2h1.8v1.8h-1.8zM828.6 374.2h1.8v1.8h-1.8zM834.4 374.2h1.8v1.8h-1.8zM840.3 374.2h1.8v1.8h-1.8zM846.1 374.2h1.8v1.8h-1.8zM852.0 374.2h1.8v1.8h-1.8zM857.9 374.2h1.8v1.8h-1.8zM863.7 374.2h1.8v1.8h-1.8zM869.6 374.2h1.8v1.8h-1.8zM875.4 374.2h1.8v1.8h-1.8zM383.6 379.5h1.8v1.8h-1.8zM389.5 379.5h1.8v1.8h-1.8zM395.3 379.5h1.8v1.8h-1.8zM401.2 379.5h1.8v1.8h-1.8zM407.0 379.5h1.8v1.8h-1.8zM412.9 379.5h1.8v1.8h-1.8zM418.7 379.5h1.8v1.8h-1.8zM424.6 379.5h1.8v1.8h-1.8zM430.4 379.5h1.8v1.8h-1.8zM436.3 379.5h1.8v1.8h-1.8zM442.1 379.5h1.8v1.8h-1.8zM448.0 379.5h1.8v1.8h-1.8zM453.9 379.5h1.8v1.8h-1.8zM459.7 379.5h1.8v1.8h-1.8zM465.6 379.5h1.8v1.8h-1.8zM471.4 379.5h1.8v1.8h-1.8zM477.3 379.5h1.8v1.8h-1.8zM483.1 379.5h1.8v1.8h-1.8zM489.0 379.5h1.8v1.8h-1.8zM494.8 379.5h1.8v1.8h-1.8zM500.7 379.5h1.8v1.8h-1.8zM506.6 379.5h1.8v1.8h-1.8zM512.4 379.5h1.8v1.8h-1.8zM606.1 379.5h1.8v1.8h-1.8zM611.9 379.5h1.8v1.8h-1.8zM617.8 379.5h1.8v1.8h-1.8zM623.6 379.5h1.8v1.8h-1.8zM629.5 379.5h1.8v1.8h-1.8zM635.4 379.5h1.8v1.8h-1.8zM641.2 379.5h1.8v1.8h-1.8zM647.1 379.5h1.8v1.8h-1.8zM652.9 379.5h1.8v1.8h-1.8zM658.8 379.5h1.8v1.8h-1.8zM664.6 379.5h1.8v1.8h-1.8zM670.5 379.5h1.8v1.8h-1.8zM676.3 379.5h1.8v1.8h-1.8zM682.2 379.5h1.8v1.8h-1.8zM688.1 379.5h1.8v1.8h-1.8zM693.9 379.5h1.8v1.8h-1.8zM699.8 379.5h1.8v1.8h-1.8zM705.6 379.5h1.8v1.8h-1.8zM711.5 379.5h1.8v1.8h-1.8zM717.3 379.5h1.8v1.8h-1.8zM723.2 379.5h1.8v1.8h-1.8zM729.0 379.5h1.8v1.8h-1.8zM734.9 379.5h1.8v1.8h-1.8zM740.8 379.5h1.8v1.8h-1.8zM746.6 379.5h1.8v1.8h-1.8zM752.5 379.5h1.8v1.8h-1.8zM758.3 379.5h1.8v1.8h-1.8zM764.2 379.5h1.8v1.8h-1.8zM770.0 379.5h1.8v1.8h-1.8zM775.9 379.5h1.8v1.8h-1.8zM781.7 379.5h1.8v1.8h-1.8zM787.6 379.5h1.8v1.8h-1.8zM793.4 379.5h1.8v1.8h-1.8zM799.3 379.5h1.8v1.8h-1.8zM805.2 379.5h1.8v1.8h-1.8zM811.0 379.5h1.8v1.8h-1.8zM816.9 379.5h1.8v1.8h-1.8zM822.7 379.5h1.8v1.8h-1.8zM828.6 379.5h1.8v1.8h-1.8zM834.4 379.5h1.8v1.8h-1.8zM840.3 379.5h1.8v1.8h-1.8zM846.1 379.5h1.8v1.8h-1.8zM852.0 379.5h1.8v1.8h-1.8zM857.9 379.5h1.8v1.8h-1.8zM863.7 379.5h1.8v1.8h-1.8zM869.6 379.5h1.8v1.8h-1.8zM875.4 379.5h1.8v1.8h-1.8zM383.6 384.9h1.8v1.8h-1.8zM389.5 384.9h1.8v1.8h-1.8zM395.3 384.9h1.8v1.8h-1.8zM401.2 384.9h1.8v1.8h-1.8zM407.0 384.9h1.8v1.8h-1.8zM412.9 384.9h1.8v1.8h-1.8zM418.7 384.9h1.8v1.8h-1.8zM424.6 384.9h1.8v1.8h-1.8zM430.4 384.9h1.8v1.8h-1.8zM436.3 384.9h1.8v1.8h-1.8zM442.1 384.9h1.8v1.8h-1.8zM448.0 384.9h1.8v1.8h-1.8zM453.9 384.9h1.8v1.8h-1.8zM459.7 384.9h1.8v1.8h-1.8zM465.6 384.9h1.8v1.8h-1.8zM471.4 384.9h1.8v1.8h-1.8zM477.3 384.9h1.8v1.8h-1.8zM483.1 384.9h1.8v1.8h-1.8zM489.0 384.9h1.8v1.8h-1.8zM494.8 384.9h1.8v1.8h-1.8zM500.7 384.9h1.8v1.8h-1.8zM506.6 384.9h1.8v1.8h-1.8zM606.1 384.9h1.8v1.8h-1.8zM611.9 384.9h1.8v1.8h-1.8zM617.8 384.9h1.8v1.8h-1.8zM623.6 384.9h1.8v1.8h-1.8zM629.5 384.9h1.8v1.8h-1.8zM635.4 384.9h1.8v1.8h-1.8zM641.2 384.9h1.8v1.8h-1.8zM647.1 384.9h1.8v1.8h-1.8zM652.9 384.9h1.8v1.8h-1.8zM658.8 384.9h1.8v1.8h-1.8zM664.6 384.9h1.8v1.8h-1.8zM670.5 384.9h1.8v1.8h-1.8zM676.3 384.9h1.8v1.8h-1.8zM682.2 384.9h1.8v1.8h-1.8zM688.1 384.9h1.8v1.8h-1.8zM693.9 384.9h1.8v1.8h-1.8zM699.8 384.9h1.8v1.8h-1.8zM705.6 384.9h1.8v1.8h-1.8zM711.5 384.9h1.8v1.8h-1.8zM717.3 384.9h1.8v1.8h-1.8zM723.2 384.9h1.8v1.8h-1.8zM729.0 384.9h1.8v1.8h-1.8zM734.9 384.9h1.8v1.8h-1.8zM740.8 384.9h1.8v1.8h-1.8zM746.6 384.9h1.8v1.8h-1.8zM752.5 384.9h1.8v1.8h-1.8zM758.3 384.9h1.8v1.8h-1.8zM764.2 384.9h1.8v1.8h-1.8zM770.0 384.9h1.8v1.8h-1.8zM775.9 384.9h1.8v1.8h-1.8zM781.7 384.9h1.8v1.8h-1.8zM787.6 384.9h1.8v1.8h-1.8zM793.4 384.9h1.8v1.8h-1.8zM799.3 384.9h1.8v1.8h-1.8zM805.2 384.9h1.8v1.8h-1.8zM811.0 384.9h1.8v1.8h-1.8zM816.9 384.9h1.8v1.8h-1.8zM822.7 384.9h1.8v1.8h-1.8zM828.6 384.9h1.8v1.8h-1.8zM834.4 384.9h1.8v1.8h-1.8zM840.3 384.9h1.8v1.8h-1.8zM846.1 384.9h1.8v1.8h-1.8zM852.0 384.9h1.8v1.8h-1.8zM857.9 384.9h1.8v1.8h-1.8zM863.7 384.9h1.8v1.8h-1.8zM869.6 384.9h1.8v1.8h-1.8zM875.4 384.9h1.8v1.8h-1.8zM389.5 390.2h1.8v1.8h-1.8zM395.3 390.2h1.8v1.8h-1.8zM401.2 390.2h1.8v1.8h-1.8zM407.0 390.2h1.8v1.8h-1.8zM412.9 390.2h1.8v1.8h-1.8zM418.7 390.2h1.8v1.8h-1.8zM424.6 390.2h1.8v1.8h-1.8zM430.4 390.2h1.8v1.8h-1.8zM436.3 390.2h1.8v1.8h-1.8zM442.1 390.2h1.8v1.8h-1.8zM448.0 390.2h1.8v1.8h-1.8zM453.9 390.2h1.8v1.8h-1.8zM459.7 390.2h1.8v1.8h-1.8zM465.6 390.2h1.8v1.8h-1.8zM471.4 390.2h1.8v1.8h-1.8zM477.3 390.2h1.8v1.8h-1.8zM483.1 390.2h1.8v1.8h-1.8zM489.0 390.2h1.8v1.8h-1.8zM494.8 390.2h1.8v1.8h-1.8zM500.7 390.2h1.8v1.8h-1.8zM606.1 390.2h1.8v1.8h-1.8zM611.9 390.2h1.8v1.8h-1.8zM617.8 390.2h1.8v1.8h-1.8zM623.6 390.2h1.8v1.8h-1.8zM629.5 390.2h1.8v1.8h-1.8zM635.4 390.2h1.8v1.8h-1.8zM641.2 390.2h1.8v1.8h-1.8zM647.1 390.2h1.8v1.8h-1.8zM652.9 390.2h1.8v1.8h-1.8zM658.8 390.2h1.8v1.8h-1.8zM664.6 390.2h1.8v1.8h-1.8zM670.5 390.2h1.8v1.8h-1.8zM676.3 390.2h1.8v1.8h-1.8zM682.2 390.2h1.8v1.8h-1.8zM688.1 390.2h1.8v1.8h-1.8zM693.9 390.2h1.8v1.8h-1.8zM699.8 390.2h1.8v1.8h-1.8zM705.6 390.2h1.8v1.8h-1.8zM711.5 390.2h1.8v1.8h-1.8zM717.3 390.2h1.8v1.8h-1.8zM723.2 390.2h1.8v1.8h-1.8zM729.0 390.2h1.8v1.8h-1.8zM734.9 390.2h1.8v1.8h-1.8zM740.8 390.2h1.8v1.8h-1.8zM746.6 390.2h1.8v1.8h-1.8zM752.5 390.2h1.8v1.8h-1.8zM758.3 390.2h1.8v1.8h-1.8zM764.2 390.2h1.8v1.8h-1.8zM770.0 390.2h1.8v1.8h-1.8zM775.9 390.2h1.8v1.8h-1.8zM781.7 390.2h1.8v1.8h-1.8zM787.6 390.2h1.8v1.8h-1.8zM793.4 390.2h1.8v1.8h-1.8zM799.3 390.2h1.8v1.8h-1.8zM805.2 390.2h1.8v1.8h-1.8zM811.0 390.2h1.8v1.8h-1.8zM816.9 390.2h1.8v1.8h-1.8zM822.7 390.2h1.8v1.8h-1.8zM828.6 390.2h1.8v1.8h-1.8zM834.4 390.2h1.8v1.8h-1.8zM840.3 390.2h1.8v1.8h-1.8zM846.1 390.2h1.8v1.8h-1.8zM852.0 390.2h1.8v1.8h-1.8zM857.9 390.2h1.8v1.8h-1.8zM863.7 390.2h1.8v1.8h-1.8zM869.6 390.2h1.8v1.8h-1.8zM875.4 390.2h1.8v1.8h-1.8zM389.5 395.6h1.8v1.8h-1.8zM395.3 395.6h1.8v1.8h-1.8zM401.2 395.6h1.8v1.8h-1.8zM407.0 395.6h1.8v1.8h-1.8zM412.9 395.6h1.8v1.8h-1.8zM418.7 395.6h1.8v1.8h-1.8zM424.6 395.6h1.8v1.8h-1.8zM430.4 395.6h1.8v1.8h-1.8zM436.3 395.6h1.8v1.8h-1.8zM442.1 395.6h1.8v1.8h-1.8zM448.0 395.6h1.8v1.8h-1.8zM453.9 395.6h1.8v1.8h-1.8zM459.7 395.6h1.8v1.8h-1.8zM465.6 395.6h1.8v1.8h-1.8zM471.4 395.6h1.8v1.8h-1.8zM477.3 395.6h1.8v1.8h-1.8zM483.1 395.6h1.8v1.8h-1.8zM489.0 395.6h1.8v1.8h-1.8zM494.8 395.6h1.8v1.8h-1.8zM606.1 395.6h1.8v1.8h-1.8zM611.9 395.6h1.8v1.8h-1.8zM617.8 395.6h1.8v1.8h-1.8zM623.6 395.6h1.8v1.8h-1.8zM629.5 395.6h1.8v1.8h-1.8zM635.4 395.6h1.8v1.8h-1.8zM641.2 395.6h1.8v1.8h-1.8zM647.1 395.6h1.8v1.8h-1.8zM652.9 395.6h1.8v1.8h-1.8zM658.8 395.6h1.8v1.8h-1.8zM664.6 395.6h1.8v1.8h-1.8zM670.5 395.6h1.8v1.8h-1.8zM676.3 395.6h1.8v1.8h-1.8zM682.2 395.6h1.8v1.8h-1.8zM688.1 395.6h1.8v1.8h-1.8zM693.9 395.6h1.8v1.8h-1.8zM699.8 395.6h1.8v1.8h-1.8zM705.6 395.6h1.8v1.8h-1.8zM711.5 395.6h1.8v1.8h-1.8zM717.3 395.6h1.8v1.8h-1.8zM723.2 395.6h1.8v1.8h-1.8zM729.0 395.6h1.8v1.8h-1.8zM734.9 395.6h1.8v1.8h-1.8zM740.8 395.6h1.8v1.8h-1.8zM746.6 395.6h1.8v1.8h-1.8zM752.5 395.6h1.8v1.8h-1.8zM758.3 395.6h1.8v1.8h-1.8zM764.2 395.6h1.8v1.8h-1.8zM770.0 395.6h1.8v1.8h-1.8zM775.9 395.6h1.8v1.8h-1.8zM781.7 395.6h1.8v1.8h-1.8zM787.6 395.6h1.8v1.8h-1.8zM793.4 395.6h1.8v1.8h-1.8zM799.3 395.6h1.8v1.8h-1.8zM805.2 395.6h1.8v1.8h-1.8zM811.0 395.6h1.8v1.8h-1.8zM816.9 395.6h1.8v1.8h-1.8zM822.7 395.6h1.8v1.8h-1.8zM828.6 395.6h1.8v1.8h-1.8zM834.4 395.6h1.8v1.8h-1.8zM840.3 395.6h1.8v1.8h-1.8zM846.1 395.6h1.8v1.8h-1.8zM852.0 395.6h1.8v1.8h-1.8zM857.9 395.6h1.8v1.8h-1.8zM863.7 395.6h1.8v1.8h-1.8zM869.6 395.6h1.8v1.8h-1.8zM395.3 400.9h1.8v1.8h-1.8zM401.2 400.9h1.8v1.8h-1.8zM407.0 400.9h1.8v1.8h-1.8zM412.9 400.9h1.8v1.8h-1.8zM418.7 400.9h1.8v1.8h-1.8zM424.6 400.9h1.8v1.8h-1.8zM430.4 400.9h1.8v1.8h-1.8zM436.3 400.9h1.8v1.8h-1.8zM442.1 400.9h1.8v1.8h-1.8zM448.0 400.9h1.8v1.8h-1.8zM453.9 400.9h1.8v1.8h-1.8zM459.7 400.9h1.8v1.8h-1.8zM465.6 400.9h1.8v1.8h-1.8zM471.4 400.9h1.8v1.8h-1.8zM477.3 400.9h1.8v1.8h-1.8zM483.1 400.9h1.8v1.8h-1.8zM489.0 400.9h1.8v1.8h-1.8zM606.1 400.9h1.8v1.8h-1.8zM611.9 400.9h1.8v1.8h-1.8zM617.8 400.9h1.8v1.8h-1.8zM623.6 400.9h1.8v1.8h-1.8zM629.5 400.9h1.8v1.8h-1.8zM635.4 400.9h1.8v1.8h-1.8zM641.2 400.9h1.8v1.8h-1.8zM647.1 400.9h1.8v1.8h-1.8zM652.9 400.9h1.8v1.8h-1.8zM658.8 400.9h1.8v1.8h-1.8zM664.6 400.9h1.8v1.8h-1.8zM670.5 400.9h1.8v1.8h-1.8zM676.3 400.9h1.8v1.8h-1.8zM682.2 400.9h1.8v1.8h-1.8zM688.1 400.9h1.8v1.8h-1.8zM693.9 400.9h1.8v1.8h-1.8zM699.8 400.9h1.8v1.8h-1.8zM705.6 400.9h1.8v1.8h-1.8zM711.5 400.9h1.8v1.8h-1.8zM717.3 400.9h1.8v1.8h-1.8zM723.2 400.9h1.8v1.8h-1.8zM729.0 400.9h1.8v1.8h-1.8zM734.9 400.9h1.8v1.8h-1.8zM740.8 400.9h1.8v1.8h-1.8zM746.6 400.9h1.8v1.8h-1.8zM752.5 400.9h1.8v1.8h-1.8zM758.3 400.9h1.8v1.8h-1.8zM764.2 400.9h1.8v1.8h-1.8zM770.0 400.9h1.8v1.8h-1.8zM775.9 400.9h1.8v1.8h-1.8zM781.7 400.9h1.8v1.8h-1.8zM787.6 400.9h1.8v1.8h-1.8zM793.4 400.9h1.8v1.8h-1.8zM799.3 400.9h1.8v1.8h-1.8zM805.2 400.9h1.8v1.8h-1.8zM811.0 400.9h1.8v1.8h-1.8zM816.9 400.9h1.8v1.8h-1.8zM822.7 400.9h1.8v1.8h-1.8zM828.6 400.9h1.8v1.8h-1.8zM834.4 400.9h1.8v1.8h-1.8zM840.3 400.9h1.8v1.8h-1.8zM846.1 400.9h1.8v1.8h-1.8zM852.0 400.9h1.8v1.8h-1.8zM857.9 400.9h1.8v1.8h-1.8zM863.7 400.9h1.8v1.8h-1.8zM395.3 406.3h1.8v1.8h-1.8zM401.2 406.3h1.8v1.8h-1.8zM407.0 406.3h1.8v1.8h-1.8zM412.9 406.3h1.8v1.8h-1.8zM418.7 406.3h1.8v1.8h-1.8zM424.6 406.3h1.8v1.8h-1.8zM430.4 406.3h1.8v1.8h-1.8zM436.3 406.3h1.8v1.8h-1.8zM442.1 406.3h1.8v1.8h-1.8zM448.0 406.3h1.8v1.8h-1.8zM453.9 406.3h1.8v1.8h-1.8zM459.7 406.3h1.8v1.8h-1.8zM465.6 406.3h1.8v1.8h-1.8zM471.4 406.3h1.8v1.8h-1.8zM477.3 406.3h1.8v1.8h-1.8zM483.1 406.3h1.8v1.8h-1.8zM606.1 406.3h1.8v1.8h-1.8zM611.9 406.3h1.8v1.8h-1.8zM617.8 406.3h1.8v1.8h-1.8zM623.6 406.3h1.8v1.8h-1.8zM629.5 406.3h1.8v1.8h-1.8zM635.4 406.3h1.8v1.8h-1.8zM641.2 406.3h1.8v1.8h-1.8zM647.1 406.3h1.8v1.8h-1.8zM652.9 406.3h1.8v1.8h-1.8zM658.8 406.3h1.8v1.8h-1.8zM664.6 406.3h1.8v1.8h-1.8zM670.5 406.3h1.8v1.8h-1.8zM676.3 406.3h1.8v1.8h-1.8zM682.2 406.3h1.8v1.8h-1.8zM688.1 406.3h1.8v1.8h-1.8zM693.9 406.3h1.8v1.8h-1.8zM699.8 406.3h1.8v1.8h-1.8zM705.6 406.3h1.8v1.8h-1.8zM711.5 406.3h1.8v1.8h-1.8zM717.3 406.3h1.8v1.8h-1.8zM723.2 406.3h1.8v1.8h-1.8zM729.0 406.3h1.8v1.8h-1.8zM734.9 406.3h1.8v1.8h-1.8zM740.8 406.3h1.8v1.8h-1.8zM746.6 406.3h1.8v1.8h-1.8zM752.5 406.3h1.8v1.8h-1.8zM758.3 406.3h1.8v1.8h-1.8zM764.2 406.3h1.8v1.8h-1.8zM770.0 406.3h1.8v1.8h-1.8zM775.9 406.3h1.8v1.8h-1.8zM781.7 406.3h1.8v1.8h-1.8zM787.6 406.3h1.8v1.8h-1.8zM793.4 406.3h1.8v1.8h-1.8zM799.3 406.3h1.8v1.8h-1.8zM805.2 406.3h1.8v1.8h-1.8zM811.0 406.3h1.8v1.8h-1.8zM816.9 406.3h1.8v1.8h-1.8zM822.7 406.3h1.8v1.8h-1.8zM828.6 406.3h1.8v1.8h-1.8zM834.4 406.3h1.8v1.8h-1.8zM840.3 406.3h1.8v1.8h-1.8zM846.1 406.3h1.8v1.8h-1.8zM852.0 406.3h1.8v1.8h-1.8zM395.3 411.6h1.8v1.8h-1.8zM401.2 411.6h1.8v1.8h-1.8zM407.0 411.6h1.8v1.8h-1.8zM412.9 411.6h1.8v1.8h-1.8zM418.7 411.6h1.8v1.8h-1.8zM424.6 411.6h1.8v1.8h-1.8zM430.4 411.6h1.8v1.8h-1.8zM436.3 411.6h1.8v1.8h-1.8zM442.1 411.6h1.8v1.8h-1.8zM448.0 411.6h1.8v1.8h-1.8zM453.9 411.6h1.8v1.8h-1.8zM459.7 411.6h1.8v1.8h-1.8zM465.6 411.6h1.8v1.8h-1.8zM471.4 411.6h1.8v1.8h-1.8zM477.3 411.6h1.8v1.8h-1.8zM606.1 411.6h1.8v1.8h-1.8zM611.9 411.6h1.8v1.8h-1.8zM617.8 411.6h1.8v1.8h-1.8zM623.6 411.6h1.8v1.8h-1.8zM629.5 411.6h1.8v1.8h-1.8zM635.4 411.6h1.8v1.8h-1.8zM641.2 411.6h1.8v1.8h-1.8zM647.1 411.6h1.8v1.8h-1.8zM652.9 411.6h1.8v1.8h-1.8zM658.8 411.6h1.8v1.8h-1.8zM664.6 411.6h1.8v1.8h-1.8zM670.5 411.6h1.8v1.8h-1.8zM676.3 411.6h1.8v1.8h-1.8zM682.2 411.6h1.8v1.8h-1.8zM688.1 411.6h1.8v1.8h-1.8zM693.9 411.6h1.8v1.8h-1.8zM699.8 411.6h1.8v1.8h-1.8zM705.6 411.6h1.8v1.8h-1.8zM711.5 411.6h1.8v1.8h-1.8zM717.3 411.6h1.8v1.8h-1.8zM723.2 411.6h1.8v1.8h-1.8zM729.0 411.6h1.8v1.8h-1.8zM734.9 411.6h1.8v1.8h-1.8zM740.8 411.6h1.8v1.8h-1.8zM746.6 411.6h1.8v1.8h-1.8zM752.5 411.6h1.8v1.8h-1.8zM758.3 411.6h1.8v1.8h-1.8zM764.2 411.6h1.8v1.8h-1.8zM770.0 411.6h1.8v1.8h-1.8zM775.9 411.6h1.8v1.8h-1.8zM781.7 411.6h1.8v1.8h-1.8zM787.6 411.6h1.8v1.8h-1.8zM793.4 411.6h1.8v1.8h-1.8zM799.3 411.6h1.8v1.8h-1.8zM805.2 411.6h1.8v1.8h-1.8zM811.0 411.6h1.8v1.8h-1.8zM816.9 411.6h1.8v1.8h-1.8zM822.7 411.6h1.8v1.8h-1.8zM828.6 411.6h1.8v1.8h-1.8zM834.4 411.6h1.8v1.8h-1.8zM840.3 411.6h1.8v1.8h-1.8zM846.1 411.6h1.8v1.8h-1.8zM852.0 411.6h1.8v1.8h-1.8zM857.9 411.6h1.8v1.8h-1.8zM863.7 411.6h1.8v1.8h-1.8zM401.2 417.0h1.8v1.8h-1.8zM407.0 417.0h1.8v1.8h-1.8zM412.9 417.0h1.8v1.8h-1.8zM418.7 417.0h1.8v1.8h-1.8zM424.6 417.0h1.8v1.8h-1.8zM430.4 417.0h1.8v1.8h-1.8zM436.3 417.0h1.8v1.8h-1.8zM442.1 417.0h1.8v1.8h-1.8zM448.0 417.0h1.8v1.8h-1.8zM453.9 417.0h1.8v1.8h-1.8zM459.7 417.0h1.8v1.8h-1.8zM465.6 417.0h1.8v1.8h-1.8zM471.4 417.0h1.8v1.8h-1.8zM477.3 417.0h1.8v1.8h-1.8zM606.1 417.0h1.8v1.8h-1.8zM611.9 417.0h1.8v1.8h-1.8zM617.8 417.0h1.8v1.8h-1.8zM623.6 417.0h1.8v1.8h-1.8zM629.5 417.0h1.8v1.8h-1.8zM635.4 417.0h1.8v1.8h-1.8zM641.2 417.0h1.8v1.8h-1.8zM647.1 417.0h1.8v1.8h-1.8zM652.9 417.0h1.8v1.8h-1.8zM658.8 417.0h1.8v1.8h-1.8zM664.6 417.0h1.8v1.8h-1.8zM670.5 417.0h1.8v1.8h-1.8zM676.3 417.0h1.8v1.8h-1.8zM682.2 417.0h1.8v1.8h-1.8zM688.1 417.0h1.8v1.8h-1.8zM693.9 417.0h1.8v1.8h-1.8zM699.8 417.0h1.8v1.8h-1.8zM705.6 417.0h1.8v1.8h-1.8zM711.5 417.0h1.8v1.8h-1.8zM717.3 417.0h1.8v1.8h-1.8zM723.2 417.0h1.8v1.8h-1.8zM729.0 417.0h1.8v1.8h-1.8zM734.9 417.0h1.8v1.8h-1.8zM740.8 417.0h1.8v1.8h-1.8zM746.6 417.0h1.8v1.8h-1.8zM752.5 417.0h1.8v1.8h-1.8zM758.3 417.0h1.8v1.8h-1.8zM764.2 417.0h1.8v1.8h-1.8zM770.0 417.0h1.8v1.8h-1.8zM775.9 417.0h1.8v1.8h-1.8zM781.7 417.0h1.8v1.8h-1.8zM787.6 417.0h1.8v1.8h-1.8zM793.4 417.0h1.8v1.8h-1.8zM799.3 417.0h1.8v1.8h-1.8zM805.2 417.0h1.8v1.8h-1.8zM811.0 417.0h1.8v1.8h-1.8zM816.9 417.0h1.8v1.8h-1.8zM822.7 417.0h1.8v1.8h-1.8zM828.6 417.0h1.8v1.8h-1.8zM834.4 417.0h1.8v1.8h-1.8zM840.3 417.0h1.8v1.8h-1.8zM846.1 417.0h1.8v1.8h-1.8zM852.0 417.0h1.8v1.8h-1.8zM857.9 417.0h1.8v1.8h-1.8zM863.7 417.0h1.8v1.8h-1.8zM407.0 422.4h1.8v1.8h-1.8zM412.9 422.4h1.8v1.8h-1.8zM418.7 422.4h1.8v1.8h-1.8zM424.6 422.4h1.8v1.8h-1.8zM430.4 422.4h1.8v1.8h-1.8zM436.3 422.4h1.8v1.8h-1.8zM442.1 422.4h1.8v1.8h-1.8zM448.0 422.4h1.8v1.8h-1.8zM453.9 422.4h1.8v1.8h-1.8zM459.7 422.4h1.8v1.8h-1.8zM465.6 422.4h1.8v1.8h-1.8zM471.4 422.4h1.8v1.8h-1.8zM688.1 422.4h1.8v1.8h-1.8zM693.9 422.4h1.8v1.8h-1.8zM699.8 422.4h1.8v1.8h-1.8zM705.6 422.4h1.8v1.8h-1.8zM711.5 422.4h1.8v1.8h-1.8zM717.3 422.4h1.8v1.8h-1.8zM723.2 422.4h1.8v1.8h-1.8zM729.0 422.4h1.8v1.8h-1.8zM734.9 422.4h1.8v1.8h-1.8zM740.8 422.4h1.8v1.8h-1.8zM746.6 422.4h1.8v1.8h-1.8zM752.5 422.4h1.8v1.8h-1.8zM758.3 422.4h1.8v1.8h-1.8zM764.2 422.4h1.8v1.8h-1.8zM770.0 422.4h1.8v1.8h-1.8zM775.9 422.4h1.8v1.8h-1.8zM781.7 422.4h1.8v1.8h-1.8zM787.6 422.4h1.8v1.8h-1.8zM793.4 422.4h1.8v1.8h-1.8zM799.3 422.4h1.8v1.8h-1.8zM805.2 422.4h1.8v1.8h-1.8zM811.0 422.4h1.8v1.8h-1.8zM816.9 422.4h1.8v1.8h-1.8zM822.7 422.4h1.8v1.8h-1.8zM828.6 422.4h1.8v1.8h-1.8zM834.4 422.4h1.8v1.8h-1.8zM840.3 422.4h1.8v1.8h-1.8zM846.1 422.4h1.8v1.8h-1.8zM852.0 422.4h1.8v1.8h-1.8zM857.9 422.4h1.8v1.8h-1.8zM412.9 427.7h1.8v1.8h-1.8zM418.7 427.7h1.8v1.8h-1.8zM424.6 427.7h1.8v1.8h-1.8zM430.4 427.7h1.8v1.8h-1.8zM436.3 427.7h1.8v1.8h-1.8zM442.1 427.7h1.8v1.8h-1.8zM448.0 427.7h1.8v1.8h-1.8zM453.9 427.7h1.8v1.8h-1.8zM459.7 427.7h1.8v1.8h-1.8zM465.6 427.7h1.8v1.8h-1.8zM471.4 427.7h1.8v1.8h-1.8zM594.4 427.7h1.8v1.8h-1.8zM600.2 427.7h1.8v1.8h-1.8zM606.1 427.7h1.8v1.8h-1.8zM611.9 427.7h1.8v1.8h-1.8zM617.8 427.7h1.8v1.8h-1.8zM623.6 427.7h1.8v1.8h-1.8zM629.5 427.7h1.8v1.8h-1.8zM635.4 427.7h1.8v1.8h-1.8zM641.2 427.7h1.8v1.8h-1.8zM647.1 427.7h1.8v1.8h-1.8zM652.9 427.7h1.8v1.8h-1.8zM658.8 427.7h1.8v1.8h-1.8zM664.6 427.7h1.8v1.8h-1.8zM670.5 427.7h1.8v1.8h-1.8zM676.3 427.7h1.8v1.8h-1.8zM682.2 427.7h1.8v1.8h-1.8zM688.1 427.7h1.8v1.8h-1.8zM693.9 427.7h1.8v1.8h-1.8zM699.8 427.7h1.8v1.8h-1.8zM711.5 427.7h1.8v1.8h-1.8zM717.3 427.7h1.8v1.8h-1.8zM723.2 427.7h1.8v1.8h-1.8zM729.0 427.7h1.8v1.8h-1.8zM734.9 427.7h1.8v1.8h-1.8zM740.8 427.7h1.8v1.8h-1.8zM746.6 427.7h1.8v1.8h-1.8zM752.5 427.7h1.8v1.8h-1.8zM758.3 427.7h1.8v1.8h-1.8zM764.2 427.7h1.8v1.8h-1.8zM770.0 427.7h1.8v1.8h-1.8zM775.9 427.7h1.8v1.8h-1.8zM781.7 427.7h1.8v1.8h-1.8zM787.6 427.7h1.8v1.8h-1.8zM793.4 427.7h1.8v1.8h-1.8zM799.3 427.7h1.8v1.8h-1.8zM805.2 427.7h1.8v1.8h-1.8zM811.0 427.7h1.8v1.8h-1.8zM816.9 427.7h1.8v1.8h-1.8zM822.7 427.7h1.8v1.8h-1.8zM828.6 427.7h1.8v1.8h-1.8zM834.4 427.7h1.8v1.8h-1.8zM840.3 427.7h1.8v1.8h-1.8zM846.1 427.7h1.8v1.8h-1.8zM852.0 427.7h1.8v1.8h-1.8zM418.7 433.1h1.8v1.8h-1.8zM424.6 433.1h1.8v1.8h-1.8zM430.4 433.1h1.8v1.8h-1.8zM436.3 433.1h1.8v1.8h-1.8zM442.1 433.1h1.8v1.8h-1.8zM448.0 433.1h1.8v1.8h-1.8zM471.4 433.1h1.8v1.8h-1.8zM594.4 433.1h1.8v1.8h-1.8zM600.2 433.1h1.8v1.8h-1.8zM606.1 433.1h1.8v1.8h-1.8zM611.9 433.1h1.8v1.8h-1.8zM617.8 433.1h1.8v1.8h-1.8zM623.6 433.1h1.8v1.8h-1.8zM629.5 433.1h1.8v1.8h-1.8zM635.4 433.1h1.8v1.8h-1.8zM641.2 433.1h1.8v1.8h-1.8zM647.1 433.1h1.8v1.8h-1.8zM652.9 433.1h1.8v1.8h-1.8zM658.8 433.1h1.8v1.8h-1.8zM664.6 433.1h1.8v1.8h-1.8zM670.5 433.1h1.8v1.8h-1.8zM676.3 433.1h1.8v1.8h-1.8zM682.2 433.1h1.8v1.8h-1.8zM688.1 433.1h1.8v1.8h-1.8zM693.9 433.1h1.8v1.8h-1.8zM699.8 433.1h1.8v1.8h-1.8zM705.6 433.1h1.8v1.8h-1.8zM711.5 433.1h1.8v1.8h-1.8zM717.3 433.1h1.8v1.8h-1.8zM723.2 433.1h1.8v1.8h-1.8zM729.0 433.1h1.8v1.8h-1.8zM734.9 433.1h1.8v1.8h-1.8zM740.8 433.1h1.8v1.8h-1.8zM746.6 433.1h1.8v1.8h-1.8zM752.5 433.1h1.8v1.8h-1.8zM758.3 433.1h1.8v1.8h-1.8zM764.2 433.1h1.8v1.8h-1.8zM770.0 433.1h1.8v1.8h-1.8zM775.9 433.1h1.8v1.8h-1.8zM787.6 433.1h1.8v1.8h-1.8zM793.4 433.1h1.8v1.8h-1.8zM799.3 433.1h1.8v1.8h-1.8zM805.2 433.1h1.8v1.8h-1.8zM811.0 433.1h1.8v1.8h-1.8zM816.9 433.1h1.8v1.8h-1.8zM822.7 433.1h1.8v1.8h-1.8zM828.6 433.1h1.8v1.8h-1.8zM834.4 433.1h1.8v1.8h-1.8zM840.3 433.1h1.8v1.8h-1.8zM424.6 438.4h1.8v1.8h-1.8zM430.4 438.4h1.8v1.8h-1.8zM436.3 438.4h1.8v1.8h-1.8zM442.1 438.4h1.8v1.8h-1.8zM448.0 438.4h1.8v1.8h-1.8zM594.4 438.4h1.8v1.8h-1.8zM600.2 438.4h1.8v1.8h-1.8zM606.1 438.4h1.8v1.8h-1.8zM611.9 438.4h1.8v1.8h-1.8zM617.8 438.4h1.8v1.8h-1.8zM623.6 438.4h1.8v1.8h-1.8zM629.5 438.4h1.8v1.8h-1.8zM635.4 438.4h1.8v1.8h-1.8zM641.2 438.4h1.8v1.8h-1.8zM647.1 438.4h1.8v1.8h-1.8zM652.9 438.4h1.8v1.8h-1.8zM658.8 438.4h1.8v1.8h-1.8zM664.6 438.4h1.8v1.8h-1.8zM670.5 438.4h1.8v1.8h-1.8zM676.3 438.4h1.8v1.8h-1.8zM682.2 438.4h1.8v1.8h-1.8zM688.1 438.4h1.8v1.8h-1.8zM693.9 438.4h1.8v1.8h-1.8zM699.8 438.4h1.8v1.8h-1.8zM705.6 438.4h1.8v1.8h-1.8zM711.5 438.4h1.8v1.8h-1.8zM717.3 438.4h1.8v1.8h-1.8zM723.2 438.4h1.8v1.8h-1.8zM729.0 438.4h1.8v1.8h-1.8zM734.9 438.4h1.8v1.8h-1.8zM740.8 438.4h1.8v1.8h-1.8zM746.6 438.4h1.8v1.8h-1.8zM752.5 438.4h1.8v1.8h-1.8zM758.3 438.4h1.8v1.8h-1.8zM764.2 438.4h1.8v1.8h-1.8zM770.0 438.4h1.8v1.8h-1.8zM775.9 438.4h1.8v1.8h-1.8zM793.4 438.4h1.8v1.8h-1.8zM799.3 438.4h1.8v1.8h-1.8zM805.2 438.4h1.8v1.8h-1.8zM811.0 438.4h1.8v1.8h-1.8zM816.9 438.4h1.8v1.8h-1.8zM822.7 438.4h1.8v1.8h-1.8zM828.6 438.4h1.8v1.8h-1.8zM834.4 438.4h1.8v1.8h-1.8zM430.4 443.8h1.8v1.8h-1.8zM436.3 443.8h1.8v1.8h-1.8zM442.1 443.8h1.8v1.8h-1.8zM448.0 443.8h1.8v1.8h-1.8zM594.4 443.8h1.8v1.8h-1.8zM600.2 443.8h1.8v1.8h-1.8zM606.1 443.8h1.8v1.8h-1.8zM611.9 443.8h1.8v1.8h-1.8zM617.8 443.8h1.8v1.8h-1.8zM623.6 443.8h1.8v1.8h-1.8zM629.5 443.8h1.8v1.8h-1.8zM635.4 443.8h1.8v1.8h-1.8zM641.2 443.8h1.8v1.8h-1.8zM647.1 443.8h1.8v1.8h-1.8zM652.9 443.8h1.8v1.8h-1.8zM658.8 443.8h1.8v1.8h-1.8zM664.6 443.8h1.8v1.8h-1.8zM670.5 443.8h1.8v1.8h-1.8zM676.3 443.8h1.8v1.8h-1.8zM682.2 443.8h1.8v1.8h-1.8zM688.1 443.8h1.8v1.8h-1.8zM693.9 443.8h1.8v1.8h-1.8zM699.8 443.8h1.8v1.8h-1.8zM705.6 443.8h1.8v1.8h-1.8zM711.5 443.8h1.8v1.8h-1.8zM717.3 443.8h1.8v1.8h-1.8zM723.2 443.8h1.8v1.8h-1.8zM729.0 443.8h1.8v1.8h-1.8zM734.9 443.8h1.8v1.8h-1.8zM740.8 443.8h1.8v1.8h-1.8zM746.6 443.8h1.8v1.8h-1.8zM752.5 443.8h1.8v1.8h-1.8zM758.3 443.8h1.8v1.8h-1.8zM764.2 443.8h1.8v1.8h-1.8zM770.0 443.8h1.8v1.8h-1.8zM799.3 443.8h1.8v1.8h-1.8zM805.2 443.8h1.8v1.8h-1.8zM811.0 443.8h1.8v1.8h-1.8zM816.9 443.8h1.8v1.8h-1.8zM822.7 443.8h1.8v1.8h-1.8zM828.6 443.8h1.8v1.8h-1.8zM436.3 449.1h1.8v1.8h-1.8zM442.1 449.1h1.8v1.8h-1.8zM448.0 449.1h1.8v1.8h-1.8zM453.9 449.1h1.8v1.8h-1.8zM594.4 449.1h1.8v1.8h-1.8zM600.2 449.1h1.8v1.8h-1.8zM606.1 449.1h1.8v1.8h-1.8zM611.9 449.1h1.8v1.8h-1.8zM617.8 449.1h1.8v1.8h-1.8zM623.6 449.1h1.8v1.8h-1.8zM629.5 449.1h1.8v1.8h-1.8zM635.4 449.1h1.8v1.8h-1.8zM641.2 449.1h1.8v1.8h-1.8zM647.1 449.1h1.8v1.8h-1.8zM652.9 449.1h1.8v1.8h-1.8zM658.8 449.1h1.8v1.8h-1.8zM664.6 449.1h1.8v1.8h-1.8zM670.5 449.1h1.8v1.8h-1.8zM676.3 449.1h1.8v1.8h-1.8zM682.2 449.1h1.8v1.8h-1.8zM688.1 449.1h1.8v1.8h-1.8zM693.9 449.1h1.8v1.8h-1.8zM699.8 449.1h1.8v1.8h-1.8zM705.6 449.1h1.8v1.8h-1.8zM711.5 449.1h1.8v1.8h-1.8zM717.3 449.1h1.8v1.8h-1.8zM723.2 449.1h1.8v1.8h-1.8zM729.0 449.1h1.8v1.8h-1.8zM758.3 449.1h1.8v1.8h-1.8zM764.2 449.1h1.8v1.8h-1.8zM770.0 449.1h1.8v1.8h-1.8zM805.2 449.1h1.8v1.8h-1.8zM811.0 449.1h1.8v1.8h-1.8zM816.9 449.1h1.8v1.8h-1.8zM822.7 449.1h1.8v1.8h-1.8zM448.0 454.5h1.8v1.8h-1.8zM453.9 454.5h1.8v1.8h-1.8zM459.7 454.5h1.8v1.8h-1.8zM594.4 454.5h1.8v1.8h-1.8zM600.2 454.5h1.8v1.8h-1.8zM606.1 454.5h1.8v1.8h-1.8zM611.9 454.5h1.8v1.8h-1.8zM617.8 454.5h1.8v1.8h-1.8zM623.6 454.5h1.8v1.8h-1.8zM629.5 454.5h1.8v1.8h-1.8zM635.4 454.5h1.8v1.8h-1.8zM641.2 454.5h1.8v1.8h-1.8zM647.1 454.5h1.8v1.8h-1.8zM652.9 454.5h1.8v1.8h-1.8zM658.8 454.5h1.8v1.8h-1.8zM664.6 454.5h1.8v1.8h-1.8zM670.5 454.5h1.8v1.8h-1.8zM676.3 454.5h1.8v1.8h-1.8zM682.2 454.5h1.8v1.8h-1.8zM688.1 454.5h1.8v1.8h-1.8zM693.9 454.5h1.8v1.8h-1.8zM699.8 454.5h1.8v1.8h-1.8zM705.6 454.5h1.8v1.8h-1.8zM711.5 454.5h1.8v1.8h-1.8zM717.3 454.5h1.8v1.8h-1.8zM723.2 454.5h1.8v1.8h-1.8zM758.3 454.5h1.8v1.8h-1.8zM764.2 454.5h1.8v1.8h-1.8zM805.2 454.5h1.8v1.8h-1.8zM811.0 454.5h1.8v1.8h-1.8zM816.9 454.5h1.8v1.8h-1.8zM822.7 454.5h1.8v1.8h-1.8zM828.6 454.5h1.8v1.8h-1.8zM459.7 459.8h1.8v1.8h-1.8zM483.1 459.8h1.8v1.8h-1.8zM489.0 459.8h1.8v1.8h-1.8zM494.8 459.8h1.8v1.8h-1.8zM500.7 459.8h1.8v1.8h-1.8zM506.6 459.8h1.8v1.8h-1.8zM594.4 459.8h1.8v1.8h-1.8zM600.2 459.8h1.8v1.8h-1.8zM606.1 459.8h1.8v1.8h-1.8zM611.9 459.8h1.8v1.8h-1.8zM617.8 459.8h1.8v1.8h-1.8zM623.6 459.8h1.8v1.8h-1.8zM629.5 459.8h1.8v1.8h-1.8zM635.4 459.8h1.8v1.8h-1.8zM641.2 459.8h1.8v1.8h-1.8zM647.1 459.8h1.8v1.8h-1.8zM652.9 459.8h1.8v1.8h-1.8zM658.8 459.8h1.8v1.8h-1.8zM664.6 459.8h1.8v1.8h-1.8zM670.5 459.8h1.8v1.8h-1.8zM676.3 459.8h1.8v1.8h-1.8zM682.2 459.8h1.8v1.8h-1.8zM688.1 459.8h1.8v1.8h-1.8zM693.9 459.8h1.8v1.8h-1.8zM699.8 459.8h1.8v1.8h-1.8zM705.6 459.8h1.8v1.8h-1.8zM711.5 459.8h1.8v1.8h-1.8zM717.3 459.8h1.8v1.8h-1.8zM764.2 459.8h1.8v1.8h-1.8zM811.0 459.8h1.8v1.8h-1.8zM816.9 459.8h1.8v1.8h-1.8zM822.7 459.8h1.8v1.8h-1.8zM828.6 459.8h1.8v1.8h-1.8zM834.4 459.8h1.8v1.8h-1.8zM840.3 459.8h1.8v1.8h-1.8zM471.4 465.2h1.8v1.8h-1.8zM477.3 465.2h1.8v1.8h-1.8zM483.1 465.2h1.8v1.8h-1.8zM489.0 465.2h1.8v1.8h-1.8zM494.8 465.2h1.8v1.8h-1.8zM500.7 465.2h1.8v1.8h-1.8zM506.6 465.2h1.8v1.8h-1.8zM512.4 465.2h1.8v1.8h-1.8zM518.3 465.2h1.8v1.8h-1.8zM594.4 465.2h1.8v1.8h-1.8zM600.2 465.2h1.8v1.8h-1.8zM606.1 465.2h1.8v1.8h-1.8zM611.9 465.2h1.8v1.8h-1.8zM617.8 465.2h1.8v1.8h-1.8zM623.6 465.2h1.8v1.8h-1.8zM629.5 465.2h1.8v1.8h-1.8zM635.4 465.2h1.8v1.8h-1.8zM641.2 465.2h1.8v1.8h-1.8zM647.1 465.2h1.8v1.8h-1.8zM652.9 465.2h1.8v1.8h-1.8zM658.8 465.2h1.8v1.8h-1.8zM664.6 465.2h1.8v1.8h-1.8zM670.5 465.2h1.8v1.8h-1.8zM676.3 465.2h1.8v1.8h-1.8zM682.2 465.2h1.8v1.8h-1.8zM688.1 465.2h1.8v1.8h-1.8zM693.9 465.2h1.8v1.8h-1.8zM699.8 465.2h1.8v1.8h-1.8zM705.6 465.2h1.8v1.8h-1.8zM711.5 465.2h1.8v1.8h-1.8zM811.0 465.2h1.8v1.8h-1.8zM816.9 465.2h1.8v1.8h-1.8zM822.7 465.2h1.8v1.8h-1.8zM828.6 465.2h1.8v1.8h-1.8zM834.4 465.2h1.8v1.8h-1.8zM840.3 465.2h1.8v1.8h-1.8zM846.1 465.2h1.8v1.8h-1.8zM852.0 465.2h1.8v1.8h-1.8zM471.4 470.5h1.8v1.8h-1.8zM477.3 470.5h1.8v1.8h-1.8zM483.1 470.5h1.8v1.8h-1.8zM489.0 470.5h1.8v1.8h-1.8zM494.8 470.5h1.8v1.8h-1.8zM500.7 470.5h1.8v1.8h-1.8zM506.6 470.5h1.8v1.8h-1.8zM512.4 470.5h1.8v1.8h-1.8zM518.3 470.5h1.8v1.8h-1.8zM524.1 470.5h1.8v1.8h-1.8zM600.2 470.5h1.8v1.8h-1.8zM606.1 470.5h1.8v1.8h-1.8zM611.9 470.5h1.8v1.8h-1.8zM617.8 470.5h1.8v1.8h-1.8zM623.6 470.5h1.8v1.8h-1.8zM629.5 470.5h1.8v1.8h-1.8zM635.4 470.5h1.8v1.8h-1.8zM641.2 470.5h1.8v1.8h-1.8zM647.1 470.5h1.8v1.8h-1.8zM652.9 470.5h1.8v1.8h-1.8zM658.8 470.5h1.8v1.8h-1.8zM664.6 470.5h1.8v1.8h-1.8zM670.5 470.5h1.8v1.8h-1.8zM676.3 470.5h1.8v1.8h-1.8zM682.2 470.5h1.8v1.8h-1.8zM688.1 470.5h1.8v1.8h-1.8zM693.9 470.5h1.8v1.8h-1.8zM699.8 470.5h1.8v1.8h-1.8zM705.6 470.5h1.8v1.8h-1.8zM711.5 470.5h1.8v1.8h-1.8zM816.9 470.5h1.8v1.8h-1.8zM822.7 470.5h1.8v1.8h-1.8zM828.6 470.5h1.8v1.8h-1.8zM834.4 470.5h1.8v1.8h-1.8zM840.3 470.5h1.8v1.8h-1.8zM846.1 470.5h1.8v1.8h-1.8zM852.0 470.5h1.8v1.8h-1.8zM857.9 470.5h1.8v1.8h-1.8zM863.7 470.5h1.8v1.8h-1.8zM471.4 475.9h1.8v1.8h-1.8zM477.3 475.9h1.8v1.8h-1.8zM483.1 475.9h1.8v1.8h-1.8zM489.0 475.9h1.8v1.8h-1.8zM494.8 475.9h1.8v1.8h-1.8zM500.7 475.9h1.8v1.8h-1.8zM506.6 475.9h1.8v1.8h-1.8zM512.4 475.9h1.8v1.8h-1.8zM518.3 475.9h1.8v1.8h-1.8zM524.1 475.9h1.8v1.8h-1.8zM530.0 475.9h1.8v1.8h-1.8zM535.8 475.9h1.8v1.8h-1.8zM611.9 475.9h1.8v1.8h-1.8zM617.8 475.9h1.8v1.8h-1.8zM623.6 475.9h1.8v1.8h-1.8zM629.5 475.9h1.8v1.8h-1.8zM635.4 475.9h1.8v1.8h-1.8zM641.2 475.9h1.8v1.8h-1.8zM647.1 475.9h1.8v1.8h-1.8zM652.9 475.9h1.8v1.8h-1.8zM658.8 475.9h1.8v1.8h-1.8zM664.6 475.9h1.8v1.8h-1.8zM670.5 475.9h1.8v1.8h-1.8zM676.3 475.9h1.8v1.8h-1.8zM682.2 475.9h1.8v1.8h-1.8zM688.1 475.9h1.8v1.8h-1.8zM693.9 475.9h1.8v1.8h-1.8zM699.8 475.9h1.8v1.8h-1.8zM705.6 475.9h1.8v1.8h-1.8zM711.5 475.9h1.8v1.8h-1.8zM834.4 475.9h1.8v1.8h-1.8zM840.3 475.9h1.8v1.8h-1.8zM846.1 475.9h1.8v1.8h-1.8zM852.0 475.9h1.8v1.8h-1.8zM857.9 475.9h1.8v1.8h-1.8zM863.7 475.9h1.8v1.8h-1.8zM869.6 475.9h1.8v1.8h-1.8zM875.4 475.9h1.8v1.8h-1.8zM881.3 475.9h1.8v1.8h-1.8zM471.4 481.3h1.8v1.8h-1.8zM477.3 481.3h1.8v1.8h-1.8zM483.1 481.3h1.8v1.8h-1.8zM489.0 481.3h1.8v1.8h-1.8zM494.8 481.3h1.8v1.8h-1.8zM500.7 481.3h1.8v1.8h-1.8zM506.6 481.3h1.8v1.8h-1.8zM512.4 481.3h1.8v1.8h-1.8zM518.3 481.3h1.8v1.8h-1.8zM524.1 481.3h1.8v1.8h-1.8zM530.0 481.3h1.8v1.8h-1.8zM535.8 481.3h1.8v1.8h-1.8zM541.7 481.3h1.8v1.8h-1.8zM623.6 481.3h1.8v1.8h-1.8zM629.5 481.3h1.8v1.8h-1.8zM635.4 481.3h1.8v1.8h-1.8zM641.2 481.3h1.8v1.8h-1.8zM647.1 481.3h1.8v1.8h-1.8zM652.9 481.3h1.8v1.8h-1.8zM658.8 481.3h1.8v1.8h-1.8zM664.6 481.3h1.8v1.8h-1.8zM670.5 481.3h1.8v1.8h-1.8zM676.3 481.3h1.8v1.8h-1.8zM682.2 481.3h1.8v1.8h-1.8zM688.1 481.3h1.8v1.8h-1.8zM693.9 481.3h1.8v1.8h-1.8zM699.8 481.3h1.8v1.8h-1.8zM705.6 481.3h1.8v1.8h-1.8zM711.5 481.3h1.8v1.8h-1.8zM863.7 481.3h1.8v1.8h-1.8zM869.6 481.3h1.8v1.8h-1.8zM875.4 481.3h1.8v1.8h-1.8zM881.3 481.3h1.8v1.8h-1.8zM887.1 481.3h1.8v1.8h-1.8zM893.0 481.3h1.8v1.8h-1.8zM471.4 486.6h1.8v1.8h-1.8zM477.3 486.6h1.8v1.8h-1.8zM483.1 486.6h1.8v1.8h-1.8zM489.0 486.6h1.8v1.8h-1.8zM494.8 486.6h1.8v1.8h-1.8zM500.7 486.6h1.8v1.8h-1.8zM506.6 486.6h1.8v1.8h-1.8zM512.4 486.6h1.8v1.8h-1.8zM518.3 486.6h1.8v1.8h-1.8zM524.1 486.6h1.8v1.8h-1.8zM530.0 486.6h1.8v1.8h-1.8zM535.8 486.6h1.8v1.8h-1.8zM541.7 486.6h1.8v1.8h-1.8zM547.5 486.6h1.8v1.8h-1.8zM553.4 486.6h1.8v1.8h-1.8zM635.4 486.6h1.8v1.8h-1.8zM641.2 486.6h1.8v1.8h-1.8zM647.1 486.6h1.8v1.8h-1.8zM652.9 486.6h1.8v1.8h-1.8zM658.8 486.6h1.8v1.8h-1.8zM664.6 486.6h1.8v1.8h-1.8zM670.5 486.6h1.8v1.8h-1.8zM676.3 486.6h1.8v1.8h-1.8zM682.2 486.6h1.8v1.8h-1.8zM688.1 486.6h1.8v1.8h-1.8zM693.9 486.6h1.8v1.8h-1.8zM699.8 486.6h1.8v1.8h-1.8zM705.6 486.6h1.8v1.8h-1.8zM711.5 486.6h1.8v1.8h-1.8zM893.0 486.6h1.8v1.8h-1.8zM477.3 492.0h1.8v1.8h-1.8zM483.1 492.0h1.8v1.8h-1.8zM489.0 492.0h1.8v1.8h-1.8zM494.8 492.0h1.8v1.8h-1.8zM500.7 492.0h1.8v1.8h-1.8zM506.6 492.0h1.8v1.8h-1.8zM512.4 492.0h1.8v1.8h-1.8zM518.3 492.0h1.8v1.8h-1.8zM524.1 492.0h1.8v1.8h-1.8zM530.0 492.0h1.8v1.8h-1.8zM535.8 492.0h1.8v1.8h-1.8zM541.7 492.0h1.8v1.8h-1.8zM547.5 492.0h1.8v1.8h-1.8zM641.2 492.0h1.8v1.8h-1.8zM647.1 492.0h1.8v1.8h-1.8zM652.9 492.0h1.8v1.8h-1.8zM658.8 492.0h1.8v1.8h-1.8zM664.6 492.0h1.8v1.8h-1.8zM670.5 492.0h1.8v1.8h-1.8zM676.3 492.0h1.8v1.8h-1.8zM682.2 492.0h1.8v1.8h-1.8zM688.1 492.0h1.8v1.8h-1.8zM693.9 492.0h1.8v1.8h-1.8zM699.8 492.0h1.8v1.8h-1.8zM705.6 492.0h1.8v1.8h-1.8zM711.5 492.0h1.8v1.8h-1.8zM483.1 497.3h1.8v1.8h-1.8zM489.0 497.3h1.8v1.8h-1.8zM494.8 497.3h1.8v1.8h-1.8zM500.7 497.3h1.8v1.8h-1.8zM506.6 497.3h1.8v1.8h-1.8zM512.4 497.3h1.8v1.8h-1.8zM518.3 497.3h1.8v1.8h-1.8zM524.1 497.3h1.8v1.8h-1.8zM530.0 497.3h1.8v1.8h-1.8zM535.8 497.3h1.8v1.8h-1.8zM541.7 497.3h1.8v1.8h-1.8zM547.5 497.3h1.8v1.8h-1.8zM641.2 497.3h1.8v1.8h-1.8zM647.1 497.3h1.8v1.8h-1.8zM652.9 497.3h1.8v1.8h-1.8zM658.8 497.3h1.8v1.8h-1.8zM664.6 497.3h1.8v1.8h-1.8zM670.5 497.3h1.8v1.8h-1.8zM676.3 497.3h1.8v1.8h-1.8zM682.2 497.3h1.8v1.8h-1.8zM688.1 497.3h1.8v1.8h-1.8zM693.9 497.3h1.8v1.8h-1.8zM699.8 497.3h1.8v1.8h-1.8zM705.6 497.3h1.8v1.8h-1.8zM711.5 497.3h1.8v1.8h-1.8zM483.1 502.7h1.8v1.8h-1.8zM489.0 502.7h1.8v1.8h-1.8zM494.8 502.7h1.8v1.8h-1.8zM500.7 502.7h1.8v1.8h-1.8zM506.6 502.7h1.8v1.8h-1.8zM512.4 502.7h1.8v1.8h-1.8zM518.3 502.7h1.8v1.8h-1.8zM524.1 502.7h1.8v1.8h-1.8zM530.0 502.7h1.8v1.8h-1.8zM535.8 502.7h1.8v1.8h-1.8zM541.7 502.7h1.8v1.8h-1.8zM547.5 502.7h1.8v1.8h-1.8zM647.1 502.7h1.8v1.8h-1.8zM652.9 502.7h1.8v1.8h-1.8zM658.8 502.7h1.8v1.8h-1.8zM664.6 502.7h1.8v1.8h-1.8zM670.5 502.7h1.8v1.8h-1.8zM676.3 502.7h1.8v1.8h-1.8zM682.2 502.7h1.8v1.8h-1.8zM688.1 502.7h1.8v1.8h-1.8zM693.9 502.7h1.8v1.8h-1.8zM699.8 502.7h1.8v1.8h-1.8zM705.6 502.7h1.8v1.8h-1.8zM840.3 502.7h1.8v1.8h-1.8zM846.1 502.7h1.8v1.8h-1.8zM852.0 502.7h1.8v1.8h-1.8zM857.9 502.7h1.8v1.8h-1.8zM863.7 502.7h1.8v1.8h-1.8zM869.6 502.7h1.8v1.8h-1.8zM875.4 502.7h1.8v1.8h-1.8zM881.3 502.7h1.8v1.8h-1.8zM887.1 502.7h1.8v1.8h-1.8zM893.0 502.7h1.8v1.8h-1.8zM898.8 502.7h1.8v1.8h-1.8zM489.0 508.0h1.8v1.8h-1.8zM494.8 508.0h1.8v1.8h-1.8zM500.7 508.0h1.8v1.8h-1.8zM506.6 508.0h1.8v1.8h-1.8zM512.4 508.0h1.8v1.8h-1.8zM518.3 508.0h1.8v1.8h-1.8zM524.1 508.0h1.8v1.8h-1.8zM530.0 508.0h1.8v1.8h-1.8zM535.8 508.0h1.8v1.8h-1.8zM541.7 508.0h1.8v1.8h-1.8zM547.5 508.0h1.8v1.8h-1.8zM647.1 508.0h1.8v1.8h-1.8zM652.9 508.0h1.8v1.8h-1.8zM658.8 508.0h1.8v1.8h-1.8zM664.6 508.0h1.8v1.8h-1.8zM670.5 508.0h1.8v1.8h-1.8zM676.3 508.0h1.8v1.8h-1.8zM682.2 508.0h1.8v1.8h-1.8zM688.1 508.0h1.8v1.8h-1.8zM693.9 508.0h1.8v1.8h-1.8zM705.6 508.0h1.8v1.8h-1.8zM711.5 508.0h1.8v1.8h-1.8zM840.3 508.0h1.8v1.8h-1.8zM846.1 508.0h1.8v1.8h-1.8zM852.0 508.0h1.8v1.8h-1.8zM857.9 508.0h1.8v1.8h-1.8zM863.7 508.0h1.8v1.8h-1.8zM869.6 508.0h1.8v1.8h-1.8zM875.4 508.0h1.8v1.8h-1.8zM881.3 508.0h1.8v1.8h-1.8zM887.1 508.0h1.8v1.8h-1.8zM893.0 508.0h1.8v1.8h-1.8zM898.8 508.0h1.8v1.8h-1.8zM489.0 513.4h1.8v1.8h-1.8zM494.8 513.4h1.8v1.8h-1.8zM500.7 513.4h1.8v1.8h-1.8zM506.6 513.4h1.8v1.8h-1.8zM512.4 513.4h1.8v1.8h-1.8zM518.3 513.4h1.8v1.8h-1.8zM524.1 513.4h1.8v1.8h-1.8zM530.0 513.4h1.8v1.8h-1.8zM535.8 513.4h1.8v1.8h-1.8zM541.7 513.4h1.8v1.8h-1.8zM647.1 513.4h1.8v1.8h-1.8zM652.9 513.4h1.8v1.8h-1.8zM658.8 513.4h1.8v1.8h-1.8zM664.6 513.4h1.8v1.8h-1.8zM670.5 513.4h1.8v1.8h-1.8zM676.3 513.4h1.8v1.8h-1.8zM682.2 513.4h1.8v1.8h-1.8zM688.1 513.4h1.8v1.8h-1.8zM705.6 513.4h1.8v1.8h-1.8zM711.5 513.4h1.8v1.8h-1.8zM840.3 513.4h1.8v1.8h-1.8zM846.1 513.4h1.8v1.8h-1.8zM852.0 513.4h1.8v1.8h-1.8zM857.9 513.4h1.8v1.8h-1.8zM863.7 513.4h1.8v1.8h-1.8zM869.6 513.4h1.8v1.8h-1.8zM875.4 513.4h1.8v1.8h-1.8zM881.3 513.4h1.8v1.8h-1.8zM887.1 513.4h1.8v1.8h-1.8zM893.0 513.4h1.8v1.8h-1.8zM898.8 513.4h1.8v1.8h-1.8zM489.0 518.7h1.8v1.8h-1.8zM494.8 518.7h1.8v1.8h-1.8zM500.7 518.7h1.8v1.8h-1.8zM506.6 518.7h1.8v1.8h-1.8zM512.4 518.7h1.8v1.8h-1.8zM518.3 518.7h1.8v1.8h-1.8zM524.1 518.7h1.8v1.8h-1.8zM530.0 518.7h1.8v1.8h-1.8zM535.8 518.7h1.8v1.8h-1.8zM647.1 518.7h1.8v1.8h-1.8zM652.9 518.7h1.8v1.8h-1.8zM658.8 518.7h1.8v1.8h-1.8zM664.6 518.7h1.8v1.8h-1.8zM670.5 518.7h1.8v1.8h-1.8zM676.3 518.7h1.8v1.8h-1.8zM682.2 518.7h1.8v1.8h-1.8zM705.6 518.7h1.8v1.8h-1.8zM711.5 518.7h1.8v1.8h-1.8zM840.3 518.7h1.8v1.8h-1.8zM846.1 518.7h1.8v1.8h-1.8zM852.0 518.7h1.8v1.8h-1.8zM857.9 518.7h1.8v1.8h-1.8zM863.7 518.7h1.8v1.8h-1.8zM869.6 518.7h1.8v1.8h-1.8zM875.4 518.7h1.8v1.8h-1.8zM881.3 518.7h1.8v1.8h-1.8zM887.1 518.7h1.8v1.8h-1.8zM893.0 518.7h1.8v1.8h-1.8zM898.8 518.7h1.8v1.8h-1.8zM489.0 524.1h1.8v1.8h-1.8zM494.8 524.1h1.8v1.8h-1.8zM500.7 524.1h1.8v1.8h-1.8zM506.6 524.1h1.8v1.8h-1.8zM512.4 524.1h1.8v1.8h-1.8zM518.3 524.1h1.8v1.8h-1.8zM524.1 524.1h1.8v1.8h-1.8zM530.0 524.1h1.8v1.8h-1.8zM652.9 524.1h1.8v1.8h-1.8zM658.8 524.1h1.8v1.8h-1.8zM664.6 524.1h1.8v1.8h-1.8zM670.5 524.1h1.8v1.8h-1.8zM676.3 524.1h1.8v1.8h-1.8zM682.2 524.1h1.8v1.8h-1.8zM840.3 524.1h1.8v1.8h-1.8zM846.1 524.1h1.8v1.8h-1.8zM852.0 524.1h1.8v1.8h-1.8zM857.9 524.1h1.8v1.8h-1.8zM863.7 524.1h1.8v1.8h-1.8zM869.6 524.1h1.8v1.8h-1.8zM875.4 524.1h1.8v1.8h-1.8zM881.3 524.1h1.8v1.8h-1.8zM887.1 524.1h1.8v1.8h-1.8zM893.0 524.1h1.8v1.8h-1.8zM898.8 524.1h1.8v1.8h-1.8zM489.0 529.5h1.8v1.8h-1.8zM494.8 529.5h1.8v1.8h-1.8zM500.7 529.5h1.8v1.8h-1.8zM506.6 529.5h1.8v1.8h-1.8zM512.4 529.5h1.8v1.8h-1.8zM518.3 529.5h1.8v1.8h-1.8zM524.1 529.5h1.8v1.8h-1.8zM652.9 529.5h1.8v1.8h-1.8zM658.8 529.5h1.8v1.8h-1.8zM664.6 529.5h1.8v1.8h-1.8zM670.5 529.5h1.8v1.8h-1.8zM676.3 529.5h1.8v1.8h-1.8zM840.3 529.5h1.8v1.8h-1.8zM846.1 529.5h1.8v1.8h-1.8zM852.0 529.5h1.8v1.8h-1.8zM857.9 529.5h1.8v1.8h-1.8zM863.7 529.5h1.8v1.8h-1.8zM869.6 529.5h1.8v1.8h-1.8zM875.4 529.5h1.8v1.8h-1.8zM881.3 529.5h1.8v1.8h-1.8zM887.1 529.5h1.8v1.8h-1.8zM893.0 529.5h1.8v1.8h-1.8zM898.8 529.5h1.8v1.8h-1.8zM489.0 534.8h1.8v1.8h-1.8zM494.8 534.8h1.8v1.8h-1.8zM500.7 534.8h1.8v1.8h-1.8zM506.6 534.8h1.8v1.8h-1.8zM512.4 534.8h1.8v1.8h-1.8zM518.3 534.8h1.8v1.8h-1.8zM652.9 534.8h1.8v1.8h-1.8zM658.8 534.8h1.8v1.8h-1.8zM664.6 534.8h1.8v1.8h-1.8zM670.5 534.8h1.8v1.8h-1.8zM840.3 534.8h1.8v1.8h-1.8zM846.1 534.8h1.8v1.8h-1.8zM852.0 534.8h1.8v1.8h-1.8zM857.9 534.8h1.8v1.8h-1.8zM863.7 534.8h1.8v1.8h-1.8zM869.6 534.8h1.8v1.8h-1.8zM875.4 534.8h1.8v1.8h-1.8zM881.3 534.8h1.8v1.8h-1.8zM887.1 534.8h1.8v1.8h-1.8zM893.0 534.8h1.8v1.8h-1.8zM489.0 540.2h1.8v1.8h-1.8zM494.8 540.2h1.8v1.8h-1.8zM500.7 540.2h1.8v1.8h-1.8zM506.6 540.2h1.8v1.8h-1.8zM512.4 540.2h1.8v1.8h-1.8zM518.3 540.2h1.8v1.8h-1.8zM863.7 540.2h1.8v1.8h-1.8zM869.6 540.2h1.8v1.8h-1.8zM875.4 540.2h1.8v1.8h-1.8zM881.3 540.2h1.8v1.8h-1.8zM887.1 540.2h1.8v1.8h-1.8zM489.0 545.5h1.8v1.8h-1.8zM494.8 545.5h1.8v1.8h-1.8zM500.7 545.5h1.8v1.8h-1.8zM506.6 545.5h1.8v1.8h-1.8zM512.4 545.5h1.8v1.8h-1.8zM881.3 545.5h1.8v1.8h-1.8zM489.0 550.9h1.8v1.8h-1.8zM494.8 550.9h1.8v1.8h-1.8zM500.7 550.9h1.8v1.8h-1.8zM506.6 550.9h1.8v1.8h-1.8zM489.0 556.2h1.8v1.8h-1.8zM494.8 556.2h1.8v1.8h-1.8zM500.7 556.2h1.8v1.8h-1.8zM489.0 561.6h1.8v1.8h-1.8zM494.8 561.6h1.8v1.8h-1.8zM489.0 566.9h1.8v1.8h-1.8zM494.8 566.9h1.8v1.8h-1.8zM489.0 572.3h1.8v1.8h-1.8zM494.8 572.3h1.8v1.8h-1.8zM489.0 577.6h1.8v1.8h-1.8zM494.8 577.6h1.8v1.8h-1.8zM489.0 583.0h1.8v1.8h-1.8zM494.8 583.0h1.8v1.8h-1.8zM489.0 588.4h1.8v1.8h-1.8z" fill="#2a3654"/></svg>
<svg style="left:0;top:0" width="1403" height="752" viewBox="0 0 1403 752">
 <path d="M411 349 C445 295, 495 272, 545 270.5 C600 269, 645 287, 668 316" stroke="#8c96a8" stroke-width=".9" fill="none" stroke-dasharray="2.2 2.8" stroke-dashoffset="2.5" transform="translate(.7 .9)"/><path d="M411 349 C445 295, 495 272, 545 270.5 C600 269, 645 287, 668 316" stroke="#000" stroke-width="1.4" fill="none" stroke-dasharray="3.3 1.7"/>
 <circle cx="534.3" cy="271.6" r="3.6" fill="#fff" stroke="#1c8af5" stroke-width="2.2"/>
 <circle cx="668.5" cy="316.5" r="6" fill="#5d5d5d"/>
 <circle cx="668.5" cy="316.5" r="3.2" fill="#f01010"/>
 <circle cx="890" cy="341.5" r="4.3" fill="#fff"/>
 <circle cx="532.3" cy="507.3" r="4.2" fill="#fff"/>
 <!-- plane -->
 <ellipse cx="410" cy="359" rx="6.5" ry="3.5" transform="rotate(-25 410 359)" fill="#134477"/>
 <path d="M384.3 342.3 L386.5 342.3 L389.3 347.9 L398.5 347.9 L395.6 332 L399.6 332 L407.5 347.9 L415 347.9 Q421.5 347.9 421.5 350.6 Q421.5 353.3 415 353.3 L407.5 353.3 L399.6 369.5 L395.6 369.5 L398.5 353.3 L389.3 353.3 L386.5 359.2 L384.3 359.2 L385.6 350.6 Z" fill="#fff"/>
 <circle cx="410.6" cy="350.3" r="4.3" fill="#13c313" stroke="#5d5d5d" stroke-width="2"/>
 <!-- title lines -->
 <path d="M639 587.5 H724" stroke="#f2f2f2" stroke-width="1.1"/>
 <path d="M725.5 585 L728 587.5 L725.5 590 L723 587.5 Z" fill="#fff"/>
 <path d="M930 587.5 H1014" stroke="#f2f2f2" stroke-width="1.1"/>
 <path d="M928 585 L930.5 587.5 L928 590 L925.5 587.5 Z" fill="#fff"/>
</svg>
<div class="a" style="left:363px;top:332px;width:16px;height:14px;background:#d0f260"></div>
<div class="t" style="left:363px;top:334.5px;width:16px;text-align:center;font-size:10.5px;color:#222">0</div>
<div class="t" style="left:332.5px;top:345px;font-size:12.5px;color:#1da6e6">Canada</div>
<div class="t" style="left:648px;top:331px;font-size:12.5px;color:#1da6e6">Finland</div>
<div class="t" style="left:906px;top:337px;font-size:12.5px;color:#1da6e6">Russia</div>
<div class="t" style="left:517px;top:519.5px;font-size:12.5px;color:#1da6e6">Brazil</div>
<div class="t" style="left:744px;top:573px;font-size:25px;font-weight:bold;color:#fff;letter-spacing:-.3px">Our Locations</div>

<!-- ===== RIGHT PANEL ===== -->
<div class="t" style="left:1134px;top:99px;font-size:15px;color:#333">Effects</div>
<svg style="left:1322.4px;top:104px" width="5.5" height="8" viewBox="0 0 6 9" preserveAspectRatio="none"><path d="M0 0 L6 4.5 L0 9 Z" fill="#e5533d"/></svg>
<div class="t" style="left:1334px;top:100.8px;font-size:11.5px;color:#555">Preview</div>
<div class="t" style="left:1154px;top:128px;font-size:13px;color:#777">Entrance</div>
<div class="t" style="left:1224px;top:128px;font-size:13px;color:#777">Emphasis</div>
<div class="t" style="left:1297px;top:128px;font-size:13px;color:#777">Exit</div>
<div class="t" style="left:1337px;top:128px;font-size:13px;color:#e5533d">Path</div>
<div class="a" style="left:1335px;top:144px;width:32px;height:2.5px;background:#e5533d"></div>
<div class="a" style="left:1134px;top:159px;width:241px;height:27.5px;background:#fdf1e8;border:1px solid #f6cba9;border-radius:2px"></div>
<div class="t" style="left:1145px;top:167.5px;font-size:11px;font-weight:bold;color:#e5533d">0</div>
<div class="t" style="left:1159px;top:167.5px;font-size:11px;color:#222">Path</div>
<div class="a" style="left:1185px;top:202px;width:149px;height:26px;border:1px solid #cfcfcf;border-radius:2px;background:#fbfbfb"></div>
<div class="t" style="left:1199px;top:209px;font-size:12.5px;color:#e5533d">Change Animation</div>
<svg style="left:1304px;top:213.5px" width="8" height="5" viewBox="0 0 8 5"><path d="M.8 .8 L4 4 L7.2 .8" stroke="#e5533d" stroke-width="1" fill="none"/></svg>

<div class="a" style="left:1120px;top:339.5px;width:65px;height:1px;background:#e3e3e3"></div>
<div class="a" style="left:1120px;top:339.5px;width:11px;height:1px;background:#e5533d"></div>

<div class="t" style="left:1134px;top:361px;font-size:12.1px;color:#333">Stay angled along the path</div>
<div class="a" style="left:1324px;top:356px;width:50px;height:22px;border-radius:11px;background:#06c606"></div>
<div class="t" style="left:1331.7px;top:362px;font-size:10.5px;font-weight:bold;color:#fff;transform:scaleX(.82);transform-origin:0 0">Yes</div>
<div class="a" style="left:1353.2px;top:357.1px;width:19.7px;height:19.7px;border-radius:50%;background:#fff"></div>
<div class="a" style="left:1361px;top:364px;width:.8px;height:6px;background:#aaa"></div>
<div class="a" style="left:1363.5px;top:364px;width:.8px;height:6px;background:#aaa"></div>
<div class="a" style="left:1135.5px;top:394.5px;width:12.5px;height:12.5px;border:1px solid #e5533d;border-radius:1px"></div>
<div class="t" style="left:1154px;top:395px;font-size:12.4px;color:#333">Return back to original angle</div>

<div class="a" style="left:1134px;top:428px;width:239px;height:23.5px;border:1px solid #d6d6d6;border-radius:2px;background:#fff;overflow:hidden">
 <div class="a" style="left:0;top:0;width:119px;height:22px;background:#eef1f3;border-right:1px solid #d6d6d6"></div>
</div>
<div class="t" style="left:1134px;top:433.5px;width:120px;text-align:center;font-size:12.5px;color:#333">Edit Points</div>
<div class="t" style="left:1254px;top:433.5px;width:119px;text-align:center;font-size:12.5px;color:#333">Scale Path</div>

<div class="t" style="left:1135px;top:466px;font-size:11.5px;color:#555">Duration</div>
<div class="a" style="left:1141px;top:489px;width:169px;height:2px;background:#d3d3d3"></div>
<div class="a" style="left:1141px;top:489px;width:42px;height:2px;background:#e5533d"></div>
<div class="a" style="left:1176.5px;top:483px;width:13px;height:13px;border-radius:50%;background:#fff;border:1px solid #a8a8a8"></div>
<div class="a" style="left:1322.5px;top:478.5px;width:51px;height:21px;border:1px solid #d6d6d6;border-radius:2px;background:#fff"></div>
<div class="t" style="left:1327px;top:483px;font-size:12.5px;color:#333">2.5</div>
<div class="t" style="left:1364px;top:485px;font-size:8px;color:#999">s</div>

<div class="hl" style="left:1120px;top:660px;width:268px;background:#e3e3e3"></div>
<svg style="left:1131px;top:677px" width="16" height="16" viewBox="0 0 16 16">
 <path d="M6.8 1 H9.2 L9.7 3 L11.3 3.9 L13.3 3.3 L14.5 5.4 L13 6.9 V9.1 L14.5 10.6 L13.3 12.7 L11.3 12.1 L9.7 13 L9.2 15 H6.8 L6.3 13 L4.7 12.1 L2.7 12.7 L1.5 10.6 L3 9.1 V6.9 L1.5 5.4 L2.7 3.3 L4.7 3.9 L6.3 3 Z" stroke="#666" stroke-width="1" fill="none" stroke-linejoin="round"/>
 <circle cx="8" cy="8" r="2.5" stroke="#666" stroke-width="1" fill="none"/>
</svg>
<div class="a" style="left:1192px;top:671px;width:124px;height:26px;border-radius:2px;background:#8a93a2"></div>
<div class="t" style="left:1192px;top:678.3px;width:124px;text-align:center;font-size:12.5px;color:#fff">Animation Order</div>

<!-- cursor -->
<svg style="left:1279px;top:566px" width="12" height="18" viewBox="0 0 12 18">
 <path d="M2.1 1.8 L2.1 13.2 L4.9 10.9 L7.3 16.2 L9.6 15.2 L7.3 10.2 L10.9 10.1 Z" fill="#000" stroke="#fff" stroke-width="1.1" stroke-linejoin="round"/>
</svg>

<!-- ===== STATUS BAR ===== -->
<div class="hl" style="left:15px;top:707px;width:1373px;background:#e2e2e2"></div>
<svg style="left:25px;top:713px" width="18" height="17" viewBox="0 0 18 17">
 <path d="M8 1.5 C3.5 1.5 1 4 1 7 C1 9 2 10.5 3.5 11.5 L2.5 14.5 L6 12.5 C6.5 12.6 7.3 12.7 8 12.7 C12.5 12.7 15 10 15 7 C15 4 12.5 1.5 8 1.5 Z" stroke="#555" stroke-width="1" fill="#fafafa"/>
 <path d="M15.5 8.5 C16.7 9.3 17 10.5 17 11.3 C17 12.3 16.5 13.2 15.7 13.8 L16.5 16 L13.8 14.6 C12.5 14.9 11 14.7 10 14" stroke="#555" stroke-width="1" fill="none"/>
 <circle cx="5" cy="7.2" r=".9" fill="#1b7fb0"/><circle cx="8" cy="7.2" r=".9" fill="#1b7fb0"/><circle cx="11" cy="7.2" r=".9" fill="#1b7fb0"/>
</svg>
<div class="vl" style="left:53px;top:709px;height:16px;background:#e2e2e2"></div>
<div class="a" style="left:77px;top:713px;width:26px;height:17.8px;border:1px solid #d6d6d6;background:#fbfbfb"></div>
<div class="t" style="left:77px;top:717.5px;width:26px;text-align:center;font-size:11.5px;color:#e5533d">6</div>
<div class="t" style="left:107.5px;top:717.3px;font-size:11.5px;color:#222">/</div><div class="t" style="left:116.8px;top:717.3px;font-size:11.5px;color:#222">6 Slides</div>
<div class="vl" style="left:175px;top:707px;height:20px;background:#e2e2e2"></div>
<svg style="left:184px;top:715.3px" width="15" height="12" viewBox="0 0 15 13">
 <rect x=".5" y="1" width="14" height="11" stroke="#555" stroke-width="1" fill="none"/>
 <rect x="2.5" y="3" width="2.3" height="2" stroke="#555" stroke-width=".8" fill="none"/>
 <rect x="2.5" y="7.5" width="2.3" height="2" stroke="#555" stroke-width=".8" fill="none"/>
 <rect x="6.5" y="3" width="6" height="6.5" stroke="#555" stroke-width=".8" fill="none"/>
</svg>
<div class="t" style="left:206.5px;top:716.5px;font-size:11.6px;color:#222">Normal View</div>
<svg style="left:276px;top:720px" width="9" height="6" viewBox="0 0 9 6"><path d="M1 1 L4.5 4.5 L8 1" stroke="#555" stroke-width="1" fill="none"/></svg>
<div class="vl" style="left:297px;top:709px;height:16px;background:#e2e2e2"></div>

<div class="vl" style="left:1051px;top:709px;height:16px;background:#e2e2e2"></div>
<svg style="left:1060px;top:713px" width="14" height="16" viewBox="0 0 14 16">
 <path d="M1 1 H8.5 L13 5.5 V15 H1 Z" stroke="#555" stroke-width="1" fill="none" stroke-linejoin="round"/>
</svg>
<div class="t" style="left:1082px;top:716px;font-size:11.8px;color:#222">Notes</div>
<div class="vl" style="left:1120px;top:707px;height:20px;background:#e2e2e2"></div>
<svg style="left:1128px;top:713px" width="17" height="16" viewBox="0 0 17 16">
 <path d="M1 4.5 H14 M3.8 1.5 V14" stroke="#1b7fb0" stroke-width="1" stroke-dasharray="1.6 1"/>
 <rect x="7.5" y="7.5" width="8" height="8" stroke="#444" stroke-width="1.1" fill="#fafafa"/>
</svg>
<div class="vl" style="left:1153px;top:709px;height:16px;background:#e2e2e2"></div>
<div class="t" style="left:1166.5px;top:717.2px;font-size:11.2px;color:#222">93%</div>
<div class="a" style="left:1197px;top:721px;width:155px;height:2px;background:#d3d3d3"></div>
<div class="a" style="left:1197px;top:721px;width:68px;height:2px;background:#e5533d"></div>
<div class="a" style="left:1259px;top:716px;width:12px;height:12px;border-radius:50%;background:#fff;border:1px solid #a8a8a8"></div>
<svg style="left:1360px;top:713px" width="16" height="16" viewBox="0 0 16 16">
 <rect x=".5" y=".5" width="14" height="14" stroke="#9bb8cc" stroke-width=".8" fill="none" stroke-dasharray="1.5 1"/>
 <path d="M3.5 3.5 L8.5 8.5 M3.5 3.5 V6.5 M3.5 3.5 H6.5" stroke="#6b9bc0" stroke-width="1" fill="none"/>
 <rect x="8.5" y="8.5" width="3.5" height="3.5" stroke="#6b9bc0" stroke-width="1" fill="none"/>
</svg>

<!-- header lines -->
<div class="hl" style="left:15px;top:81px;width:1195px"></div>
<div class="hl" style="left:1300px;top:81px;width:88px"></div>
<div class="vl" style="left:175px;top:81px;height:656px;background:#e6e6e6"></div>
<div class="vl" style="left:1119px;top:81px;height:626px;background:#e6e6e6"></div>

</div>
</body></html>
